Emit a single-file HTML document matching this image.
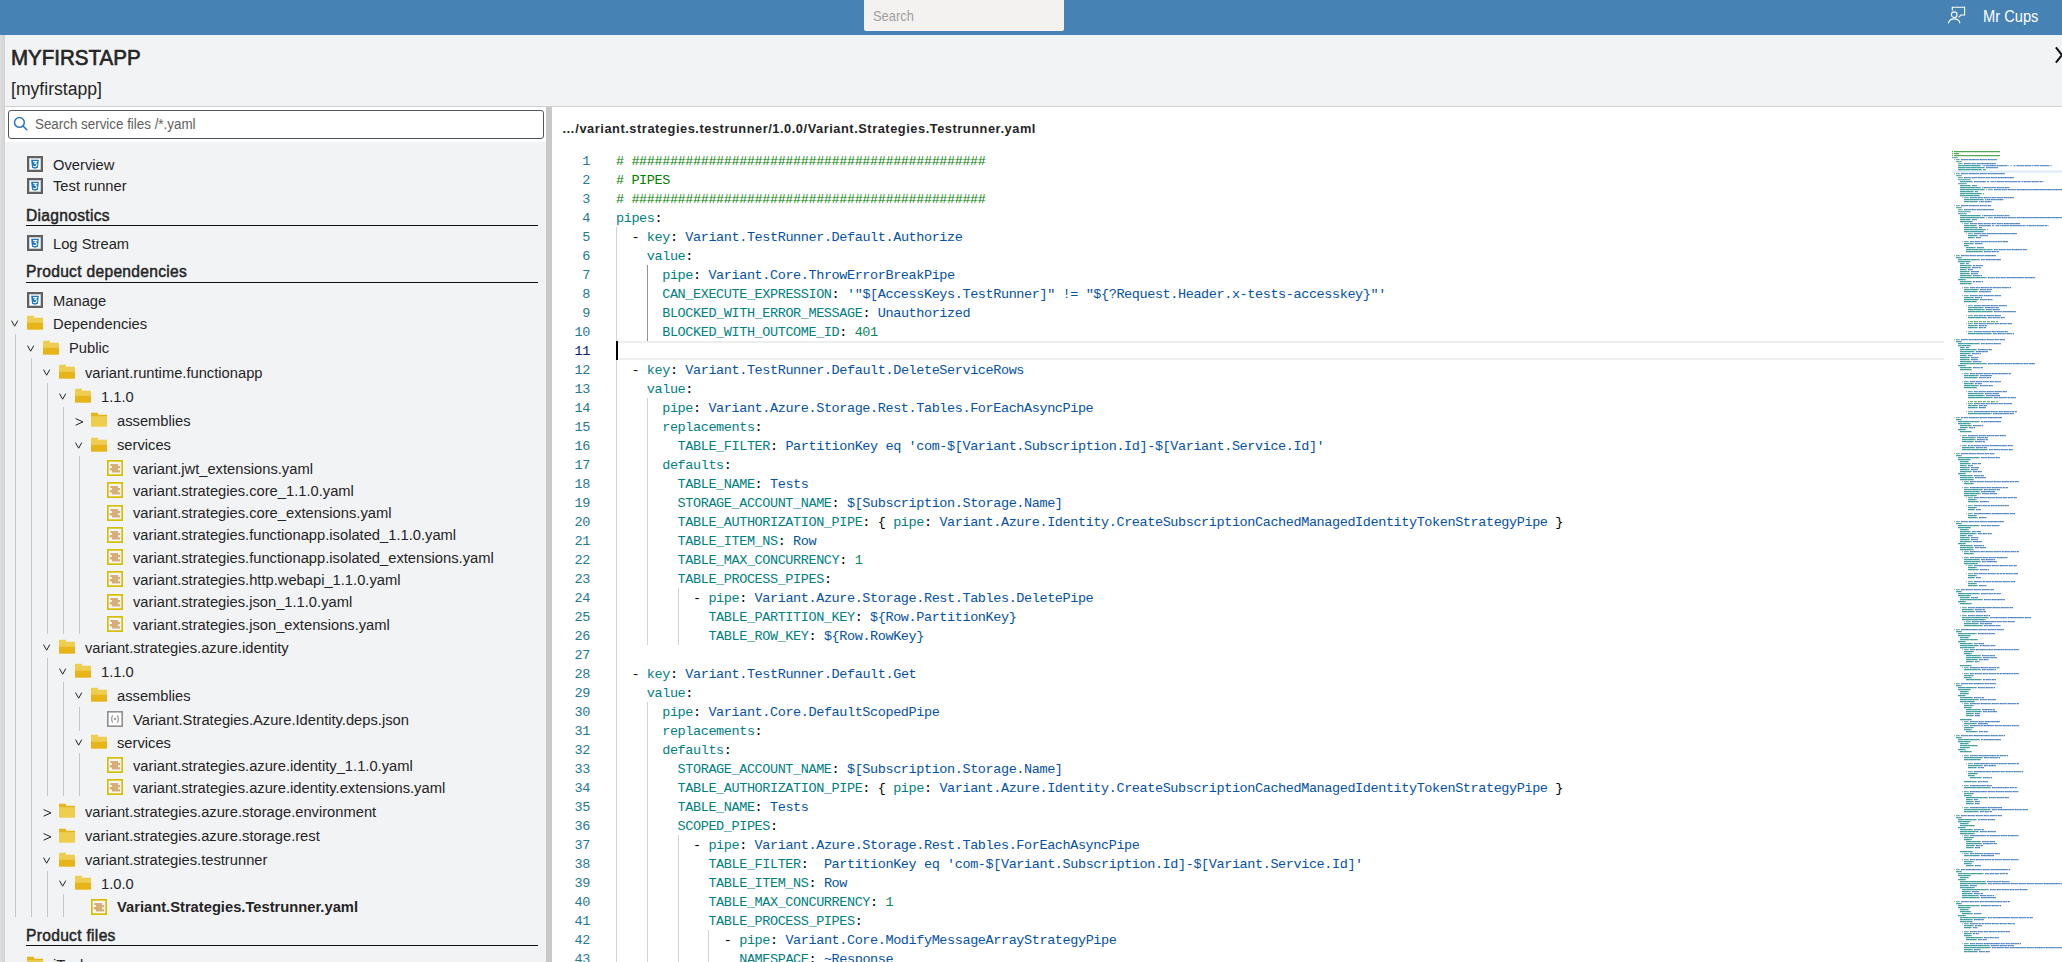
<!DOCTYPE html>
<html><head><meta charset="utf-8"><title>MYFIRSTAPP</title>
<style>
html,body{margin:0;padding:0;width:2062px;height:962px;overflow:hidden;background:#f2f3f5;font-family:"Liberation Sans",sans-serif;color:#242424;}
.abs{position:absolute;}
#top{position:absolute;left:0;top:0;width:2062px;height:35px;background:#4682b4;}
#tsearch{position:absolute;left:864px;top:0;width:200px;height:31px;background:#f3f2f1;border-radius:0 0 2px 2px;}
#tsearch span{position:absolute;left:9.4px;top:8.9px;font-size:14.1px;line-height:14.1px;color:#a19f9d;transform-origin:0 0;transform:scaleX(0.915);}
#user{position:absolute;left:1983px;top:8px;font-size:16.3px;line-height:16.3px;color:#fff;transform-origin:0 0;transform:scaleX(0.9);white-space:nowrap;}
#lstrip{position:absolute;left:0;top:35px;width:5px;height:927px;background:linear-gradient(to right,#dedede,#d2d2d2);}
#title{position:absolute;left:11px;top:48.1px;font-size:21.5px;line-height:21.5px;color:#252525;-webkit-text-stroke:0.65px #252525;transform-origin:0 0;transform:scaleX(0.955);white-space:nowrap;}
#sub{position:absolute;left:11px;top:81.1px;font-size:17.6px;line-height:17.6px;color:#242424;}
#hline{position:absolute;left:5px;top:105.5px;width:2057px;height:1.5px;background:#d2d2d2;}
#chev{position:absolute;left:2054px;top:46px;}
#srow{position:absolute;left:5px;top:107px;width:541px;height:35px;background:#fff;}
#sbox{position:absolute;left:8px;top:110px;width:534px;height:26.5px;border:1.4px solid #4f565e;border-radius:3px;background:#fff;}
#sbox span{position:absolute;left:26px;top:5.75px;font-size:14px;line-height:14px;color:#605e5c;transform-origin:0 0;transform:scaleX(0.955);white-space:nowrap;}
#splitter{position:absolute;left:546px;top:107px;width:6px;height:855px;background:#c8c8c8;}
#editor{position:absolute;left:552px;top:107px;width:1510px;height:855px;background:#fff;}
#crumb{position:absolute;left:562px;top:122.9px;font-size:12.8px;line-height:12.8px;letter-spacing:0.55px;font-weight:bold;color:#242424;white-space:nowrap;}
.cl{position:absolute;left:616px;height:19px;line-height:19px;font-family:"Liberation Mono",monospace;font-size:13.5px;letter-spacing:-0.403px;white-space:pre;color:#000;}
.ln{position:absolute;left:560px;width:30px;text-align:right;height:19px;line-height:19px;font-family:"Liberation Mono",monospace;font-size:13.5px;letter-spacing:-0.403px;color:#237893;}
.ln.cur{color:#0b216f;}
.c{color:#008000}.k{color:#008080}.p{color:#000}.s{color:#0451a5}.n{color:#098658}
.g{position:absolute;width:1px;}
#curline{position:absolute;left:616px;top:341px;width:1328px;height:15px;border-top:2px solid #eeeeee;border-bottom:2px solid #eeeeee;}
#cursor{position:absolute;left:616px;top:341px;width:2px;height:19px;background:#000;}
.icw{position:absolute;line-height:0;}
.ic{display:block;}
.tt{position:absolute;font-size:15.3px;line-height:15.3px;white-space:nowrap;color:#242424;transform-origin:0 0;transform:scaleX(0.962);}
.tt.b{font-weight:bold;}
.tg{position:absolute;width:1px;background:#c6c6c6;}
.sh{position:absolute;left:26px;font-size:15.6px;line-height:15.6px;letter-spacing:0.3px;color:#242424;-webkit-text-stroke:0.45px #242424;}
.ul{position:absolute;left:26px;width:512px;height:1.3px;background:#111;}
#minimap{position:absolute;left:1944px;top:107px;}
</style></head><body>
<div id="top">
  <div id="tsearch"><span>Search</span></div>
  <svg style="position:absolute;left:1946px;top:6px" width="20" height="18" viewBox="0 0 20 18">
    <path d="M6.3 4.6V1.3h12.3v7.7h-3.7l-2.3 2.4" fill="none" stroke="#fff" stroke-width="1.1"/>
    <circle cx="8.2" cy="8.7" r="2.8" fill="none" stroke="#fff" stroke-width="1.1"/>
    <path d="M2.4 17.3a5.9 5.4 0 0 1 11.6 0" fill="none" stroke="#fff" stroke-width="1.1"/>
  </svg>
  <div id="user">Mr Cups</div>
</div>
<div id="lstrip"></div>
<div id="title">MYFIRSTAPP</div>
<div id="sub">[myfirstapp]</div>
<svg id="chev" width="10" height="18" viewBox="0 0 10 18"><path d="M1.9 1.4L8 9L1.9 16.6" fill="none" stroke="#111" stroke-width="2"/></svg>
<div id="hline"></div>
<div id="srow"></div>
<div id="sbox"><svg style="position:absolute;left:3.5px;top:4.5px" width="16" height="16" viewBox="0 0 16 16"><circle cx="6.4" cy="6.4" r="4.9" fill="none" stroke="#2f75bb" stroke-width="1.5"/><path d="M10 10L14.3 14.3" stroke="#2f75bb" stroke-width="1.6"/></svg><span>Search service files /*.yaml</span></div>
<div class="sh" style="top:208.19px">Diagnostics</div><div class="ul" style="top:225.0px"></div><div class="sh" style="top:264.19px">Product dependencies</div><div class="ul" style="top:281.8px"></div><div class="sh" style="top:928.19px">Product files</div><div class="ul" style="top:944.8px"></div>
<div class="tg" style="left:15px;top:334px;height:583px"></div><div class="tg" style="left:31px;top:358px;height:559px"></div><div class="tg" style="left:47px;top:383px;height:251px"></div><div class="tg" style="left:63px;top:407px;height:227px"></div><div class="tg" style="left:79px;top:456px;height:178px"></div><div class="tg" style="left:47px;top:658px;height:138px"></div><div class="tg" style="left:63px;top:682px;height:114px"></div><div class="tg" style="left:79px;top:707px;height:24px"></div><div class="tg" style="left:79px;top:753px;height:43px"></div><div class="tg" style="left:47px;top:871px;height:46px"></div><div class="tg" style="left:63px;top:894px;height:23px"></div>
<div class="icw" style="left:27px;top:156.0px"><svg class="ic" width="16" height="16" viewBox="0 0 16 16"><rect x="1" y="1" width="14" height="14" fill="#fff" stroke="#606060" stroke-width="2"/><rect x="2.3" y="2.3" width="11.4" height="11.4" fill="none" stroke="#b0b0b0" stroke-width="0.6"/><path d="M4.1 3.7h7.8l-0.9 8.1L8 12.8l-3-1z" fill="#1b78c4"/><path d="M6.2 5.6h3.5l-1.7 1.8c1.3 0 1.9.7 1.9 1.6 0 .9-.8 1.6-1.9 1.6-.7 0-1.3-.3-1.8-.8" fill="none" stroke="#fff" stroke-width="1.05"/></svg></div>
<div class="tt" style="left:52.8px;top:156.60px">Overview</div>
<div class="icw" style="left:27px;top:177.8px"><svg class="ic" width="16" height="16" viewBox="0 0 16 16"><rect x="1" y="1" width="14" height="14" fill="#fff" stroke="#606060" stroke-width="2"/><rect x="2.3" y="2.3" width="11.4" height="11.4" fill="none" stroke="#b0b0b0" stroke-width="0.6"/><path d="M4.1 3.7h7.8l-0.9 8.1L8 12.8l-3-1z" fill="#1b78c4"/><path d="M6.2 5.6h3.5l-1.7 1.8c1.3 0 1.9.7 1.9 1.6 0 .9-.8 1.6-1.9 1.6-.7 0-1.3-.3-1.8-.8" fill="none" stroke="#fff" stroke-width="1.05"/></svg></div>
<div class="tt" style="left:52.8px;top:178.40px">Test runner</div>
<div class="icw" style="left:27px;top:235.2px"><svg class="ic" width="16" height="16" viewBox="0 0 16 16"><rect x="1" y="1" width="14" height="14" fill="#fff" stroke="#606060" stroke-width="2"/><rect x="2.3" y="2.3" width="11.4" height="11.4" fill="none" stroke="#b0b0b0" stroke-width="0.6"/><path d="M4.1 3.7h7.8l-0.9 8.1L8 12.8l-3-1z" fill="#1b78c4"/><path d="M6.2 5.6h3.5l-1.7 1.8c1.3 0 1.9.7 1.9 1.6 0 .9-.8 1.6-1.9 1.6-.7 0-1.3-.3-1.8-.8" fill="none" stroke="#fff" stroke-width="1.05"/></svg></div>
<div class="tt" style="left:52.8px;top:235.80px">Log Stream</div>
<div class="icw" style="left:27px;top:292.2px"><svg class="ic" width="16" height="16" viewBox="0 0 16 16"><rect x="1" y="1" width="14" height="14" fill="#fff" stroke="#606060" stroke-width="2"/><rect x="2.3" y="2.3" width="11.4" height="11.4" fill="none" stroke="#b0b0b0" stroke-width="0.6"/><path d="M4.1 3.7h7.8l-0.9 8.1L8 12.8l-3-1z" fill="#1b78c4"/><path d="M6.2 5.6h3.5l-1.7 1.8c1.3 0 1.9.7 1.9 1.6 0 .9-.8 1.6-1.9 1.6-.7 0-1.3-.3-1.8-.8" fill="none" stroke="#fff" stroke-width="1.05"/></svg></div>
<div class="tt" style="left:52.8px;top:292.80px">Manage</div>
<div class="icw" style="left:27px;top:315.3px"><svg class="ic" width="16" height="16" viewBox="0 0 16 16"><path d="M0 0.7h7v2h9v4.7H0z" fill="#eecd4f"/><rect x="0" y="7.4" width="16" height="7.3" fill="#e8b518"/></svg></div>
<div class="icw" style="left:11px;top:320.0px"><svg class="chev" width="8" height="7" viewBox="0 0 8 7"><path d="M0.5 0.6L3.65 6.2L6.8 0.6" fill="none" stroke="#222" stroke-width="1"/></svg></div>
<div class="tt" style="left:52.8px;top:315.90px">Dependencies</div>
<div class="icw" style="left:43px;top:339.8px"><svg class="ic" width="16" height="16" viewBox="0 0 16 16"><path d="M0 0.7h7v2h9v4.7H0z" fill="#eecd4f"/><rect x="0" y="7.4" width="16" height="7.3" fill="#e8b518"/></svg></div>
<div class="icw" style="left:27px;top:344.5px"><svg class="chev" width="8" height="7" viewBox="0 0 8 7"><path d="M0.5 0.6L3.65 6.2L6.8 0.6" fill="none" stroke="#222" stroke-width="1"/></svg></div>
<div class="tt" style="left:68.8px;top:340.40px">Public</div>
<div class="icw" style="left:59px;top:364.1px"><svg class="ic" width="16" height="16" viewBox="0 0 16 16"><path d="M0 0.7h7v2h9v4.7H0z" fill="#eecd4f"/><rect x="0" y="7.4" width="16" height="7.3" fill="#e8b518"/></svg></div>
<div class="icw" style="left:43px;top:368.8px"><svg class="chev" width="8" height="7" viewBox="0 0 8 7"><path d="M0.5 0.6L3.65 6.2L6.8 0.6" fill="none" stroke="#222" stroke-width="1"/></svg></div>
<div class="tt" style="left:84.8px;top:364.70px">variant.runtime.functionapp</div>
<div class="icw" style="left:75px;top:388.3px"><svg class="ic" width="16" height="16" viewBox="0 0 16 16"><path d="M0 0.7h7v2h9v4.7H0z" fill="#eecd4f"/><rect x="0" y="7.4" width="16" height="7.3" fill="#e8b518"/></svg></div>
<div class="icw" style="left:59px;top:393.0px"><svg class="chev" width="8" height="7" viewBox="0 0 8 7"><path d="M0.5 0.6L3.65 6.2L6.8 0.6" fill="none" stroke="#222" stroke-width="1"/></svg></div>
<div class="tt" style="left:100.8px;top:388.90px">1.1.0</div>
<div class="icw" style="left:91px;top:412.2px"><svg class="ic" width="16" height="16" viewBox="0 0 16 16"><path d="M0 0.7h7v2h9v2H0z" fill="#e8b518"/><rect x="0" y="4.7" width="16" height="10" fill="#eecd4f"/></svg></div>
<div class="icw" style="left:75px;top:417.8px"><svg class="chev" width="9" height="8" viewBox="0 0 9 8"><path d="M0.6 0.6L8 3.9L0.6 7.2" fill="none" stroke="#222" stroke-width="1"/></svg></div>
<div class="tt" style="left:116.8px;top:412.80px">assemblies</div>
<div class="icw" style="left:91px;top:436.8px"><svg class="ic" width="16" height="16" viewBox="0 0 16 16"><path d="M0 0.7h7v2h9v4.7H0z" fill="#eecd4f"/><rect x="0" y="7.4" width="16" height="7.3" fill="#e8b518"/></svg></div>
<div class="icw" style="left:75px;top:441.5px"><svg class="chev" width="8" height="7" viewBox="0 0 8 7"><path d="M0.5 0.6L3.65 6.2L6.8 0.6" fill="none" stroke="#222" stroke-width="1"/></svg></div>
<div class="tt" style="left:116.8px;top:437.40px">services</div>
<div class="icw" style="left:107px;top:460.2px"><svg class="ic" width="16" height="16" viewBox="0 0 16 16"><rect x="0.85" y="0.85" width="14.3" height="14.3" fill="#f4f5f9" stroke="#d4c000" stroke-width="1.7"/><path d="M3.3 3.9h7.7v2.1h1.1a1.15 1.15 0 0 1 0 2.3H11v2h2v2.1H5v-1.9H3.8a1.2 1.2 0 0 1 0-2.4H5V6H3.3z" fill="#d9ad78"/></svg></div>
<div class="tt" style="left:132.8px;top:460.80px">variant.jwt_extensions.yaml</div>
<div class="icw" style="left:107px;top:482.2px"><svg class="ic" width="16" height="16" viewBox="0 0 16 16"><rect x="0.85" y="0.85" width="14.3" height="14.3" fill="#f4f5f9" stroke="#d4c000" stroke-width="1.7"/><path d="M3.3 3.9h7.7v2.1h1.1a1.15 1.15 0 0 1 0 2.3H11v2h2v2.1H5v-1.9H3.8a1.2 1.2 0 0 1 0-2.4H5V6H3.3z" fill="#d9ad78"/></svg></div>
<div class="tt" style="left:132.8px;top:482.80px">variant.strategies.core_1.1.0.yaml</div>
<div class="icw" style="left:107px;top:504.5px"><svg class="ic" width="16" height="16" viewBox="0 0 16 16"><rect x="0.85" y="0.85" width="14.3" height="14.3" fill="#f4f5f9" stroke="#d4c000" stroke-width="1.7"/><path d="M3.3 3.9h7.7v2.1h1.1a1.15 1.15 0 0 1 0 2.3H11v2h2v2.1H5v-1.9H3.8a1.2 1.2 0 0 1 0-2.4H5V6H3.3z" fill="#d9ad78"/></svg></div>
<div class="tt" style="left:132.8px;top:505.10px">variant.strategies.core_extensions.yaml</div>
<div class="icw" style="left:107px;top:526.7px"><svg class="ic" width="16" height="16" viewBox="0 0 16 16"><rect x="0.85" y="0.85" width="14.3" height="14.3" fill="#f4f5f9" stroke="#d4c000" stroke-width="1.7"/><path d="M3.3 3.9h7.7v2.1h1.1a1.15 1.15 0 0 1 0 2.3H11v2h2v2.1H5v-1.9H3.8a1.2 1.2 0 0 1 0-2.4H5V6H3.3z" fill="#d9ad78"/></svg></div>
<div class="tt" style="left:132.8px;top:527.30px">variant.strategies.functionapp.isolated_1.1.0.yaml</div>
<div class="icw" style="left:107px;top:549.0px"><svg class="ic" width="16" height="16" viewBox="0 0 16 16"><rect x="0.85" y="0.85" width="14.3" height="14.3" fill="#f4f5f9" stroke="#d4c000" stroke-width="1.7"/><path d="M3.3 3.9h7.7v2.1h1.1a1.15 1.15 0 0 1 0 2.3H11v2h2v2.1H5v-1.9H3.8a1.2 1.2 0 0 1 0-2.4H5V6H3.3z" fill="#d9ad78"/></svg></div>
<div class="tt" style="left:132.8px;top:549.60px">variant.strategies.functionapp.isolated_extensions.yaml</div>
<div class="icw" style="left:107px;top:571.4px"><svg class="ic" width="16" height="16" viewBox="0 0 16 16"><rect x="0.85" y="0.85" width="14.3" height="14.3" fill="#f4f5f9" stroke="#d4c000" stroke-width="1.7"/><path d="M3.3 3.9h7.7v2.1h1.1a1.15 1.15 0 0 1 0 2.3H11v2h2v2.1H5v-1.9H3.8a1.2 1.2 0 0 1 0-2.4H5V6H3.3z" fill="#d9ad78"/></svg></div>
<div class="tt" style="left:132.8px;top:572.00px">variant.strategies.http.webapi_1.1.0.yaml</div>
<div class="icw" style="left:107px;top:593.7px"><svg class="ic" width="16" height="16" viewBox="0 0 16 16"><rect x="0.85" y="0.85" width="14.3" height="14.3" fill="#f4f5f9" stroke="#d4c000" stroke-width="1.7"/><path d="M3.3 3.9h7.7v2.1h1.1a1.15 1.15 0 0 1 0 2.3H11v2h2v2.1H5v-1.9H3.8a1.2 1.2 0 0 1 0-2.4H5V6H3.3z" fill="#d9ad78"/></svg></div>
<div class="tt" style="left:132.8px;top:594.30px">variant.strategies.json_1.1.0.yaml</div>
<div class="icw" style="left:107px;top:616.1px"><svg class="ic" width="16" height="16" viewBox="0 0 16 16"><rect x="0.85" y="0.85" width="14.3" height="14.3" fill="#f4f5f9" stroke="#d4c000" stroke-width="1.7"/><path d="M3.3 3.9h7.7v2.1h1.1a1.15 1.15 0 0 1 0 2.3H11v2h2v2.1H5v-1.9H3.8a1.2 1.2 0 0 1 0-2.4H5V6H3.3z" fill="#d9ad78"/></svg></div>
<div class="tt" style="left:132.8px;top:616.70px">variant.strategies.json_extensions.yaml</div>
<div class="icw" style="left:59px;top:639.0px"><svg class="ic" width="16" height="16" viewBox="0 0 16 16"><path d="M0 0.7h7v2h9v4.7H0z" fill="#eecd4f"/><rect x="0" y="7.4" width="16" height="7.3" fill="#e8b518"/></svg></div>
<div class="icw" style="left:43px;top:643.7px"><svg class="chev" width="8" height="7" viewBox="0 0 8 7"><path d="M0.5 0.6L3.65 6.2L6.8 0.6" fill="none" stroke="#222" stroke-width="1"/></svg></div>
<div class="tt" style="left:84.8px;top:639.60px">variant.strategies.azure.identity</div>
<div class="icw" style="left:75px;top:662.9px"><svg class="ic" width="16" height="16" viewBox="0 0 16 16"><path d="M0 0.7h7v2h9v4.7H0z" fill="#eecd4f"/><rect x="0" y="7.4" width="16" height="7.3" fill="#e8b518"/></svg></div>
<div class="icw" style="left:59px;top:667.6px"><svg class="chev" width="8" height="7" viewBox="0 0 8 7"><path d="M0.5 0.6L3.65 6.2L6.8 0.6" fill="none" stroke="#222" stroke-width="1"/></svg></div>
<div class="tt" style="left:100.8px;top:663.50px">1.1.0</div>
<div class="icw" style="left:91px;top:687.2px"><svg class="ic" width="16" height="16" viewBox="0 0 16 16"><path d="M0 0.7h7v2h9v4.7H0z" fill="#eecd4f"/><rect x="0" y="7.4" width="16" height="7.3" fill="#e8b518"/></svg></div>
<div class="icw" style="left:75px;top:691.9px"><svg class="chev" width="8" height="7" viewBox="0 0 8 7"><path d="M0.5 0.6L3.65 6.2L6.8 0.6" fill="none" stroke="#222" stroke-width="1"/></svg></div>
<div class="tt" style="left:116.8px;top:687.80px">assemblies</div>
<div class="icw" style="left:107px;top:711.1px"><svg class="ic" width="16" height="16" viewBox="0 0 16 16"><rect x="0.8" y="0.8" width="14.4" height="14.4" fill="#fff" stroke="#8f8f8f" stroke-width="1.6"/><path d="M5.6 4.3Q3.6 8 5.6 11.7M10.4 4.3Q12.4 8 10.4 11.7" fill="none" stroke="#a4a4a4" stroke-width="1.25"/><circle cx="8" cy="8" r="1.35" fill="#a4a4a4"/></svg></div>
<div class="tt" style="left:132.8px;top:711.70px">Variant.Strategies.Azure.Identity.deps.json</div>
<div class="icw" style="left:91px;top:734.0px"><svg class="ic" width="16" height="16" viewBox="0 0 16 16"><path d="M0 0.7h7v2h9v4.7H0z" fill="#eecd4f"/><rect x="0" y="7.4" width="16" height="7.3" fill="#e8b518"/></svg></div>
<div class="icw" style="left:75px;top:738.7px"><svg class="chev" width="8" height="7" viewBox="0 0 8 7"><path d="M0.5 0.6L3.65 6.2L6.8 0.6" fill="none" stroke="#222" stroke-width="1"/></svg></div>
<div class="tt" style="left:116.8px;top:734.60px">services</div>
<div class="icw" style="left:107px;top:757.2px"><svg class="ic" width="16" height="16" viewBox="0 0 16 16"><rect x="0.85" y="0.85" width="14.3" height="14.3" fill="#f4f5f9" stroke="#d4c000" stroke-width="1.7"/><path d="M3.3 3.9h7.7v2.1h1.1a1.15 1.15 0 0 1 0 2.3H11v2h2v2.1H5v-1.9H3.8a1.2 1.2 0 0 1 0-2.4H5V6H3.3z" fill="#d9ad78"/></svg></div>
<div class="tt" style="left:132.8px;top:757.80px">variant.strategies.azure.identity_1.1.0.yaml</div>
<div class="icw" style="left:107px;top:779.3px"><svg class="ic" width="16" height="16" viewBox="0 0 16 16"><rect x="0.85" y="0.85" width="14.3" height="14.3" fill="#f4f5f9" stroke="#d4c000" stroke-width="1.7"/><path d="M3.3 3.9h7.7v2.1h1.1a1.15 1.15 0 0 1 0 2.3H11v2h2v2.1H5v-1.9H3.8a1.2 1.2 0 0 1 0-2.4H5V6H3.3z" fill="#d9ad78"/></svg></div>
<div class="tt" style="left:132.8px;top:779.90px">variant.strategies.azure.identity.extensions.yaml</div>
<div class="icw" style="left:59px;top:803.2px"><svg class="ic" width="16" height="16" viewBox="0 0 16 16"><path d="M0 0.7h7v2h9v2H0z" fill="#e8b518"/><rect x="0" y="4.7" width="16" height="10" fill="#eecd4f"/></svg></div>
<div class="icw" style="left:43px;top:808.8px"><svg class="chev" width="9" height="8" viewBox="0 0 9 8"><path d="M0.6 0.6L8 3.9L0.6 7.2" fill="none" stroke="#222" stroke-width="1"/></svg></div>
<div class="tt" style="left:84.8px;top:803.80px">variant.strategies.azure.storage.environment</div>
<div class="icw" style="left:59px;top:827.6px"><svg class="ic" width="16" height="16" viewBox="0 0 16 16"><path d="M0 0.7h7v2h9v2H0z" fill="#e8b518"/><rect x="0" y="4.7" width="16" height="10" fill="#eecd4f"/></svg></div>
<div class="icw" style="left:43px;top:833.2px"><svg class="chev" width="9" height="8" viewBox="0 0 9 8"><path d="M0.6 0.6L8 3.9L0.6 7.2" fill="none" stroke="#222" stroke-width="1"/></svg></div>
<div class="tt" style="left:84.8px;top:828.20px">variant.strategies.azure.storage.rest</div>
<div class="icw" style="left:59px;top:851.8px"><svg class="ic" width="16" height="16" viewBox="0 0 16 16"><path d="M0 0.7h7v2h9v4.7H0z" fill="#eecd4f"/><rect x="0" y="7.4" width="16" height="7.3" fill="#e8b518"/></svg></div>
<div class="icw" style="left:43px;top:856.5px"><svg class="chev" width="8" height="7" viewBox="0 0 8 7"><path d="M0.5 0.6L3.65 6.2L6.8 0.6" fill="none" stroke="#222" stroke-width="1"/></svg></div>
<div class="tt" style="left:84.8px;top:852.40px">variant.strategies.testrunner</div>
<div class="icw" style="left:75px;top:874.9px"><svg class="ic" width="16" height="16" viewBox="0 0 16 16"><path d="M0 0.7h7v2h9v4.7H0z" fill="#eecd4f"/><rect x="0" y="7.4" width="16" height="7.3" fill="#e8b518"/></svg></div>
<div class="icw" style="left:59px;top:879.6px"><svg class="chev" width="8" height="7" viewBox="0 0 8 7"><path d="M0.5 0.6L3.65 6.2L6.8 0.6" fill="none" stroke="#222" stroke-width="1"/></svg></div>
<div class="tt" style="left:100.8px;top:875.50px">1.0.0</div>
<div class="icw" style="left:91px;top:899.2px"><svg class="ic" width="16" height="16" viewBox="0 0 16 16"><rect x="0.85" y="0.85" width="14.3" height="14.3" fill="#f4f5f9" stroke="#d4c000" stroke-width="1.7"/><path d="M3.3 3.9h7.7v2.1h1.1a1.15 1.15 0 0 1 0 2.3H11v2h2v2.1H5v-1.9H3.8a1.2 1.2 0 0 1 0-2.4H5V6H3.3z" fill="#d9ad78"/></svg></div>
<div class="tt b" style="left:116.8px;top:898.80px">Variant.Strategies.Testrunner.yaml</div>
<div class="icw" style="left:27px;top:956.0px"><svg class="ic" width="16" height="16" viewBox="0 0 16 16"><path d="M0 0.7h7v2h9v2H0z" fill="#e8b518"/><rect x="0" y="4.7" width="16" height="10" fill="#eecd4f"/></svg></div>
<div class="tt" style="left:52.8px;top:956.60px">iTools</div>
<div id="splitter"></div>
<div id="editor"></div>
<div id="crumb">…/variant.strategies.testrunner/1.0.0/Variant.Strategies.Testrunner.yaml</div>
<div id="curline"></div>
<div class="g" style="left:616px;top:227px;height:760px;background:#D3D3D3"></div><div class="g" style="left:647px;top:265px;height:76px;background:#939393"></div><div class="g" style="left:647px;top:398px;height:247px;background:#D3D3D3"></div><div class="g" style="left:647px;top:702px;height:285px;background:#D3D3D3"></div><div class="g" style="left:678px;top:588px;height:57px;background:#D3D3D3"></div><div class="g" style="left:678px;top:835px;height:152px;background:#D3D3D3"></div><div class="g" style="left:708px;top:930px;height:57px;background:#D3D3D3"></div>
<div class="cl" style="top:152px"><span class="c"># ##############################################</span></div>
<div class="ln" style="top:152px">1</div>
<div class="cl" style="top:171px"><span class="c"># PIPES</span></div>
<div class="ln" style="top:171px">2</div>
<div class="cl" style="top:190px"><span class="c"># ##############################################</span></div>
<div class="ln" style="top:190px">3</div>
<div class="cl" style="top:209px"><span class="k">pipes</span><span class="p">:</span></div>
<div class="ln" style="top:209px">4</div>
<div class="cl" style="top:228px">  <span class="p">- </span><span class="k">key</span><span class="p">:</span> <span class="s">Variant.TestRunner.Default.Authorize</span></div>
<div class="ln" style="top:228px">5</div>
<div class="cl" style="top:247px">    <span class="k">value</span><span class="p">:</span></div>
<div class="ln" style="top:247px">6</div>
<div class="cl" style="top:266px">      <span class="k">pipe</span><span class="p">:</span> <span class="s">Variant.Core.ThrowErrorBreakPipe</span></div>
<div class="ln" style="top:266px">7</div>
<div class="cl" style="top:285px">      <span class="k">CAN_EXECUTE_EXPRESSION</span><span class="p">:</span> <span class="s">&#x27;&quot;$[AccessKeys.TestRunner]&quot; != &quot;${?Request.Header.x-tests-accesskey}&quot;&#x27;</span></div>
<div class="ln" style="top:285px">8</div>
<div class="cl" style="top:304px">      <span class="k">BLOCKED_WITH_ERROR_MESSAGE</span><span class="p">:</span> <span class="s">Unauthorized</span></div>
<div class="ln" style="top:304px">9</div>
<div class="cl" style="top:323px">      <span class="k">BLOCKED_WITH_OUTCOME_ID</span><span class="p">:</span> <span class="n">401</span></div>
<div class="ln" style="top:323px">10</div>
<div class="cl" style="top:342px"></div>
<div class="ln cur" style="top:342px">11</div>
<div class="cl" style="top:361px">  <span class="p">- </span><span class="k">key</span><span class="p">:</span> <span class="s">Variant.TestRunner.Default.DeleteServiceRows</span></div>
<div class="ln" style="top:361px">12</div>
<div class="cl" style="top:380px">    <span class="k">value</span><span class="p">:</span></div>
<div class="ln" style="top:380px">13</div>
<div class="cl" style="top:399px">      <span class="k">pipe</span><span class="p">:</span> <span class="s">Variant.Azure.Storage.Rest.Tables.ForEachAsyncPipe</span></div>
<div class="ln" style="top:399px">14</div>
<div class="cl" style="top:418px">      <span class="k">replacements</span><span class="p">:</span></div>
<div class="ln" style="top:418px">15</div>
<div class="cl" style="top:437px">        <span class="k">TABLE_FILTER</span><span class="p">:</span> <span class="s">PartitionKey eq &#x27;com-$[Variant.Subscription.Id]-$[Variant.Service.Id]&#x27;</span></div>
<div class="ln" style="top:437px">16</div>
<div class="cl" style="top:456px">      <span class="k">defaults</span><span class="p">:</span></div>
<div class="ln" style="top:456px">17</div>
<div class="cl" style="top:475px">        <span class="k">TABLE_NAME</span><span class="p">:</span> <span class="s">Tests</span></div>
<div class="ln" style="top:475px">18</div>
<div class="cl" style="top:494px">        <span class="k">STORAGE_ACCOUNT_NAME</span><span class="p">:</span> <span class="s">$[Subscription.Storage.Name]</span></div>
<div class="ln" style="top:494px">19</div>
<div class="cl" style="top:513px">        <span class="k">TABLE_AUTHORIZATION_PIPE</span><span class="p">:</span> <span class="p">{ </span><span class="k">pipe</span><span class="p">: </span><span class="s">Variant.Azure.Identity.CreateSubscriptionCachedManagedIdentityTokenStrategyPipe</span><span class="p"> }</span></div>
<div class="ln" style="top:513px">20</div>
<div class="cl" style="top:532px">        <span class="k">TABLE_ITEM_NS</span><span class="p">:</span> <span class="s">Row</span></div>
<div class="ln" style="top:532px">21</div>
<div class="cl" style="top:551px">        <span class="k">TABLE_MAX_CONCURRENCY</span><span class="p">:</span> <span class="n">1</span></div>
<div class="ln" style="top:551px">22</div>
<div class="cl" style="top:570px">        <span class="k">TABLE_PROCESS_PIPES</span><span class="p">:</span></div>
<div class="ln" style="top:570px">23</div>
<div class="cl" style="top:589px">          <span class="p">- </span><span class="k">pipe</span><span class="p">:</span> <span class="s">Variant.Azure.Storage.Rest.Tables.DeletePipe</span></div>
<div class="ln" style="top:589px">24</div>
<div class="cl" style="top:608px">            <span class="k">TABLE_PARTITION_KEY</span><span class="p">:</span> <span class="s">${Row.PartitionKey}</span></div>
<div class="ln" style="top:608px">25</div>
<div class="cl" style="top:627px">            <span class="k">TABLE_ROW_KEY</span><span class="p">:</span> <span class="s">${Row.RowKey}</span></div>
<div class="ln" style="top:627px">26</div>
<div class="cl" style="top:646px"></div>
<div class="ln" style="top:646px">27</div>
<div class="cl" style="top:665px">  <span class="p">- </span><span class="k">key</span><span class="p">:</span> <span class="s">Variant.TestRunner.Default.Get</span></div>
<div class="ln" style="top:665px">28</div>
<div class="cl" style="top:684px">    <span class="k">value</span><span class="p">:</span></div>
<div class="ln" style="top:684px">29</div>
<div class="cl" style="top:703px">      <span class="k">pipe</span><span class="p">:</span> <span class="s">Variant.Core.DefaultScopedPipe</span></div>
<div class="ln" style="top:703px">30</div>
<div class="cl" style="top:722px">      <span class="k">replacements</span><span class="p">:</span></div>
<div class="ln" style="top:722px">31</div>
<div class="cl" style="top:741px">      <span class="k">defaults</span><span class="p">:</span></div>
<div class="ln" style="top:741px">32</div>
<div class="cl" style="top:760px">        <span class="k">STORAGE_ACCOUNT_NAME</span><span class="p">:</span> <span class="s">$[Subscription.Storage.Name]</span></div>
<div class="ln" style="top:760px">33</div>
<div class="cl" style="top:779px">        <span class="k">TABLE_AUTHORIZATION_PIPE</span><span class="p">:</span> <span class="p">{ </span><span class="k">pipe</span><span class="p">: </span><span class="s">Variant.Azure.Identity.CreateSubscriptionCachedManagedIdentityTokenStrategyPipe</span><span class="p"> }</span></div>
<div class="ln" style="top:779px">34</div>
<div class="cl" style="top:798px">        <span class="k">TABLE_NAME</span><span class="p">:</span> <span class="s">Tests</span></div>
<div class="ln" style="top:798px">35</div>
<div class="cl" style="top:817px">        <span class="k">SCOPED_PIPES</span><span class="p">:</span></div>
<div class="ln" style="top:817px">36</div>
<div class="cl" style="top:836px">          <span class="p">- </span><span class="k">pipe</span><span class="p">:</span> <span class="s">Variant.Azure.Storage.Rest.Tables.ForEachAsyncPipe</span></div>
<div class="ln" style="top:836px">37</div>
<div class="cl" style="top:855px">            <span class="k">TABLE_FILTER</span><span class="p">:</span>  <span class="s">PartitionKey eq &#x27;com-$[Variant.Subscription.Id]-$[Variant.Service.Id]&#x27;</span></div>
<div class="ln" style="top:855px">38</div>
<div class="cl" style="top:874px">            <span class="k">TABLE_ITEM_NS</span><span class="p">:</span> <span class="s">Row</span></div>
<div class="ln" style="top:874px">39</div>
<div class="cl" style="top:893px">            <span class="k">TABLE_MAX_CONCURRENCY</span><span class="p">:</span> <span class="n">1</span></div>
<div class="ln" style="top:893px">40</div>
<div class="cl" style="top:912px">            <span class="k">TABLE_PROCESS_PIPES</span><span class="p">:</span></div>
<div class="ln" style="top:912px">41</div>
<div class="cl" style="top:931px">              <span class="p">- </span><span class="k">pipe</span><span class="p">:</span> <span class="s">Variant.Core.ModifyMessageArrayStrategyPipe</span></div>
<div class="ln" style="top:931px">42</div>
<div class="cl" style="top:950px">                <span class="k">NAMESPACE</span><span class="p">:</span> <span class="s">~Response</span></div>
<div class="ln" style="top:950px">43</div>
<div id="cursor"></div>
<svg style="position:absolute;left:0;top:0" width="2062" height="962"><rect x="1952" y="170.6" width="110" height="2" fill="#dcebfb"/><path fill="#008000" fill-opacity="0.68" d="M1952 150.9h1v1.3h-1zM1954 150.9h46v1.3h-46zM1952 152.9h1v1.3h-1zM1954 152.9h5v1.3h-5zM1952 154.9h1v1.3h-1zM1954 154.9h46v1.3h-46zM1968 321.0h1v1.3h-1zM1974 321.0h1v1.3h-1zM1983 321.0h1v1.3h-1zM1991 321.0h1v1.3h-1zM1968 401.0h1v1.3h-1zM1978 401.0h1v1.3h-1zM1983 401.0h1v1.3h-1zM1991 401.0h1v1.3h-1z"/><path fill="#008080" fill-opacity="0.61" d="M1952 156.9h5v1.3h-5zM1956 158.9h3v1.3h-3zM1956 160.9h5v1.3h-5zM1958 162.9h4v1.3h-4zM1961 164.9h1v1.3h-1zM1969 164.9h1v1.3h-1zM1965 166.9h1v1.3h-1zM1970 166.9h1v1.3h-1zM1976 166.9h1v1.3h-1zM1965 168.9h1v1.3h-1zM1970 168.9h1v1.3h-1zM1978 168.9h1v1.3h-1zM1956 172.9h3v1.3h-3zM1956 174.9h5v1.3h-5zM1958 176.9h4v1.3h-4zM1958 178.9h12v1.3h-12zM1965 180.9h1v1.3h-1zM1958 182.9h8v1.3h-8zM1965 184.9h1v1.3h-1zM1967 186.9h1v1.3h-1zM1975 186.9h1v1.3h-1zM1965 188.9h1v1.3h-1zM1979 188.9h1v1.3h-1zM1988 188.9h4v1.3h-4zM1965 190.9h1v1.3h-1zM1970 190.9h1v1.3h-1zM1965 192.9h1v1.3h-1zM1969 192.9h1v1.3h-1zM1965 194.9h1v1.3h-1zM1973 194.9h1v1.3h-1zM1964 196.9h4v1.3h-4zM1969 198.9h1v1.3h-1zM1979 198.9h1v1.3h-1zM1969 200.9h1v1.3h-1zM1973 200.9h1v1.3h-1zM1956 204.9h3v1.3h-3zM1956 206.9h5v1.3h-5zM1958 208.9h4v1.3h-4zM1958 210.9h12v1.3h-12zM1958 212.9h8v1.3h-8zM1967 214.9h1v1.3h-1zM1975 214.9h1v1.3h-1zM1965 216.9h1v1.3h-1zM1979 216.9h1v1.3h-1zM1988 216.9h4v1.3h-4zM1965 218.9h1v1.3h-1zM1966 220.9h1v1.3h-1zM1964 222.9h4v1.3h-4zM1969 224.9h1v1.3h-1zM1969 226.9h1v1.3h-1zM1974 226.9h1v1.3h-1zM1969 228.9h1v1.3h-1zM1973 228.9h1v1.3h-1zM1969 230.9h1v1.3h-1zM1977 230.9h1v1.3h-1zM1968 232.9h4v1.3h-4zM1973 236.9h1v1.3h-1zM1964 240.9h4v1.3h-4zM1969 242.9h1v1.3h-1zM1968 246.9h1v1.3h-1zM1973 246.9h1v1.3h-1zM1971 248.9h1v1.3h-1zM1978 248.9h1v1.3h-1zM1983 248.9h1v1.3h-1zM1986 248.9h1v1.3h-1zM1990 248.9h1v1.3h-1zM1973 250.9h1v1.3h-1zM1978 250.9h1v1.3h-1zM1956 254.9h3v1.3h-3zM1962 259.0h1v1.3h-1zM1970 259.0h1v1.3h-1zM1976 259.0h1v1.3h-1zM1965 261.0h1v1.3h-1zM1969 261.0h1v1.3h-1zM1967 265.0h1v1.3h-1zM1967 267.0h1v1.3h-1zM1964 269.0h1v1.3h-1zM1967 271.0h1v1.3h-1zM1965 273.0h1v1.3h-1zM1966 275.0h1v1.3h-1zM1964 277.0h1v1.3h-1zM1974 277.0h1v1.3h-1zM1980 277.0h1v1.3h-1zM1985 277.0h1v1.3h-1zM1963 279.0h1v1.3h-1zM1966 281.0h1v1.3h-1zM1967 283.0h1v1.3h-1zM1964 287.0h4v1.3h-4zM1969 289.0h1v1.3h-1zM1977 289.0h1v1.3h-1zM1971 291.0h1v1.3h-1zM1964 295.0h4v1.3h-4zM1970 297.0h1v1.3h-1zM1971 299.0h1v1.3h-1zM1971 301.0h1v1.3h-1zM1968 305.0h4v1.3h-4zM1972 307.0h1v1.3h-1zM1977 307.0h1v1.3h-1zM1982 307.0h1v1.3h-1zM1973 309.0h1v1.3h-1zM1981 309.0h1v1.3h-1zM1975 311.0h1v1.3h-1zM1981 311.0h1v1.3h-1zM1986 311.0h1v1.3h-1zM1968 315.0h4v1.3h-4zM1974 317.0h1v1.3h-1zM1981 317.0h1v1.3h-1zM1968 323.0h4v1.3h-4zM1974 325.0h1v1.3h-1zM1974 327.0h1v1.3h-1zM1968 331.0h4v1.3h-4zM1975 333.0h1v1.3h-1zM1983 333.0h1v1.3h-1zM1956 339.0h3v1.3h-3zM1963 343.0h1v1.3h-1zM1966 343.0h1v1.3h-1zM1974 343.0h1v1.3h-1zM1961 345.0h1v1.3h-1zM1966 345.0h1v1.3h-1zM1964 349.0h1v1.3h-1zM1970 349.0h1v1.3h-1zM1963 351.0h1v1.3h-1zM1966 351.0h1v1.3h-1zM1973 351.0h1v1.3h-1zM1969 353.0h1v1.3h-1zM1962 355.0h1v1.3h-1zM1965 357.0h1v1.3h-1zM1967 359.0h1v1.3h-1zM1965 361.0h1v1.3h-1zM1969 363.0h1v1.3h-1zM1975 363.0h1v1.3h-1zM1981 363.0h1v1.3h-1zM1963 365.0h1v1.3h-1zM1967 367.0h1v1.3h-1zM1963 369.0h1v1.3h-1zM1969 369.0h1v1.3h-1zM1964 373.0h4v1.3h-4zM1968 375.0h1v1.3h-1zM1975 375.0h1v1.3h-1zM1968 377.0h1v1.3h-1zM1964 381.0h4v1.3h-4zM1968 383.0h1v1.3h-1zM1970 385.0h1v1.3h-1zM1977 385.0h1v1.3h-1zM1971 387.0h1v1.3h-1zM1968 391.0h4v1.3h-4zM1974 393.0h1v1.3h-1zM1977 393.0h1v1.3h-1zM1980 393.0h1v1.3h-1zM1975 395.0h1v1.3h-1zM1983 395.0h1v1.3h-1zM1975 397.0h1v1.3h-1zM1983 397.0h1v1.3h-1zM1990 397.0h1v1.3h-1zM1968 403.0h4v1.3h-4zM1971 405.0h1v1.3h-1zM1975 407.0h1v1.3h-1zM1968 411.0h4v1.3h-4zM1977 413.0h1v1.3h-1zM1982 413.0h1v1.3h-1zM1990 413.0h1v1.3h-1zM1956 417.0h3v1.3h-3zM1962 421.0h1v1.3h-1zM1969 421.0h1v1.3h-1zM1974 421.0h1v1.3h-1zM1962 423.0h1v1.3h-1zM1966 423.0h1v1.3h-1zM1969 423.0h1v1.3h-1zM1964 425.0h1v1.3h-1zM1967 425.0h1v1.3h-1zM1962 429.0h1v1.3h-1zM1964 431.0h1v1.3h-1zM1962 435.0h4v1.3h-4zM1965 437.0h1v1.3h-1zM1968 437.0h1v1.3h-1zM1973 437.0h1v1.3h-1zM1967 439.0h1v1.3h-1zM1974 439.0h1v1.3h-1zM1966 441.0h1v1.3h-1zM1972 441.0h1v1.3h-1zM1962 445.0h4v1.3h-4zM1969 447.0h1v1.3h-1zM1966 449.0h1v1.3h-1zM1971 449.0h1v1.3h-1zM1979 449.0h1v1.3h-1zM1956 453.0h3v1.3h-3zM1960 455.0h1v1.3h-1zM1963 457.0h1v1.3h-1zM1973 457.0h1v1.3h-1zM1965 459.0h1v1.3h-1zM1963 461.0h1v1.3h-1zM1969 463.0h1v1.3h-1zM1964 465.0h1v1.3h-1zM1967 467.0h1v1.3h-1zM1967 469.0h1v1.3h-1zM1966 471.0h1v1.3h-1zM1962 473.0h1v1.3h-1zM1967 475.0h1v1.3h-1zM1967 477.0h1v1.3h-1zM1971 477.0h1v1.3h-1zM1967 479.0h1v1.3h-1zM1964 481.0h4v1.3h-4zM1969 483.0h1v1.3h-1zM1964 487.0h4v1.3h-4zM1967 489.0h1v1.3h-1zM1971 489.0h1v1.3h-1zM1978 489.0h1v1.3h-1zM1969 491.0h1v1.3h-1zM1972 491.0h1v1.3h-1zM1975 491.0h1v1.3h-1zM1969 493.0h1v1.3h-1zM1975 493.0h1v1.3h-1zM1979 493.0h1v1.3h-1zM1969 495.0h1v1.3h-1zM1974 495.0h1v1.3h-1zM1968 497.0h4v1.3h-4zM1975 499.0h1v1.3h-1zM1975 501.0h1v1.3h-1zM1968 505.0h4v1.3h-4zM1975 507.0h1v1.3h-1zM1968 513.0h4v1.3h-4zM1973 515.0h1v1.3h-1zM1970 517.0h1v1.3h-1zM1976 517.0h1v1.3h-1zM1956 521.0h3v1.3h-3zM1958 523.0h1v1.3h-1zM1967 525.0h1v1.3h-1zM1973 525.0h1v1.3h-1zM1978 525.0h1v1.3h-1zM1964 527.0h1v1.3h-1zM1967 529.0h1v1.3h-1zM1963 531.0h1v1.3h-1zM1966 531.0h1v1.3h-1zM1969 533.0h1v1.3h-1zM1975 533.0h1v1.3h-1zM1965 535.0h1v1.3h-1zM1965 537.0h1v1.3h-1zM1967 539.0h1v1.3h-1zM1963 541.0h1v1.3h-1zM1970 541.0h1v1.3h-1zM1962 543.0h1v1.3h-1zM1965 545.0h1v1.3h-1zM1970 545.0h1v1.3h-1zM1966 547.0h1v1.3h-1zM1963 549.0h1v1.3h-1zM1971 549.0h1v1.3h-1zM1964 551.0h4v1.3h-4zM1969 553.0h1v1.3h-1zM1964 557.0h4v1.3h-4zM1966 559.0h1v1.3h-1zM1972 559.0h1v1.3h-1zM1976 559.0h1v1.3h-1zM1971 561.0h1v1.3h-1zM1975 561.0h1v1.3h-1zM1968 563.0h1v1.3h-1zM1975 563.0h1v1.3h-1zM1968 565.0h4v1.3h-4zM1975 567.0h1v1.3h-1zM1975 569.0h1v1.3h-1zM1968 573.0h4v1.3h-4zM1975 575.0h1v1.3h-1zM1968 581.0h4v1.3h-4zM1970 583.0h1v1.3h-1zM1975 583.0h1v1.3h-1zM1972 585.0h1v1.3h-1zM1956 589.0h3v1.3h-3zM1965 593.0h1v1.3h-1zM1972 593.0h1v1.3h-1zM1978 593.0h1v1.3h-1zM1965 595.0h1v1.3h-1zM1964 597.0h1v1.3h-1zM1966 599.0h1v1.3h-1zM1972 599.0h1v1.3h-1zM1977 599.0h1v1.3h-1zM1965 603.0h1v1.3h-1zM1962 607.0h4v1.3h-4zM1967 609.0h1v1.3h-1zM1972 609.0h1v1.3h-1zM1967 611.0h1v1.3h-1zM1962 615.0h4v1.3h-4zM1965 617.0h1v1.3h-1zM1970 617.0h1v1.3h-1zM1973 617.0h1v1.3h-1zM1981 617.0h1v1.3h-1zM1971 619.0h1v1.3h-1zM1978 619.0h1v1.3h-1zM1984 619.0h1v1.3h-1zM1966 621.0h4v1.3h-4zM1971 623.0h1v1.3h-1zM1971 625.0h1v1.3h-1zM1977 625.0h1v1.3h-1zM1956 629.0h3v1.3h-3zM1963 633.0h1v1.3h-1zM1967 633.0h1v1.3h-1zM1975 633.0h1v1.3h-1zM1965 635.0h1v1.3h-1zM1963 637.0h1v1.3h-1zM1964 639.0h1v1.3h-1zM1969 639.0h1v1.3h-1zM1973 639.0h1v1.3h-1zM1962 641.0h1v1.3h-1zM1967 643.0h1v1.3h-1zM1967 645.0h1v1.3h-1zM1973 645.0h1v1.3h-1zM1962 647.0h1v1.3h-1zM1967 647.0h1v1.3h-1zM1972 647.0h1v1.3h-1zM1964 649.0h4v1.3h-4zM1970 653.0h1v1.3h-1zM1971 655.0h1v1.3h-1zM1977 655.0h1v1.3h-1zM1971 657.0h1v1.3h-1zM1979 657.0h1v1.3h-1zM1971 659.0h1v1.3h-1zM1972 661.0h1v1.3h-1zM1964 665.0h1v1.3h-1zM1964 667.0h4v1.3h-4zM1971 669.0h1v1.3h-1zM1977 669.0h1v1.3h-1zM1964 673.0h4v1.3h-4zM1966 675.0h1v1.3h-1zM1971 675.0h1v1.3h-1zM1969 679.0h1v1.3h-1zM1974 679.0h1v1.3h-1zM1980 679.0h1v1.3h-1zM1956 683.0h3v1.3h-3zM1960 685.0h1v1.3h-1zM1965 687.0h1v1.3h-1zM1973 687.0h1v1.3h-1zM1962 689.0h1v1.3h-1zM1967 691.0h1v1.3h-1zM1962 693.0h1v1.3h-1zM1962 697.0h1v1.3h-1zM1967 699.0h1v1.3h-1zM1975 699.0h1v1.3h-1zM1963 701.0h1v1.3h-1zM1966 701.0h1v1.3h-1zM1964 703.0h4v1.3h-4zM1969 705.0h1v1.3h-1zM1972 705.0h1v1.3h-1zM1967 707.0h1v1.3h-1zM1972 709.0h1v1.3h-1zM1977 709.0h1v1.3h-1zM1971 711.0h1v1.3h-1zM1974 711.0h1v1.3h-1zM1971 713.0h1v1.3h-1zM1969 715.0h1v1.3h-1zM1965 719.0h1v1.3h-1zM1964 721.0h4v1.3h-4zM1971 723.0h1v1.3h-1zM1974 723.0h1v1.3h-1zM1964 725.0h4v1.3h-4zM1970 727.0h1v1.3h-1zM1970 729.0h1v1.3h-1zM1968 731.0h1v1.3h-1zM1976 731.0h1v1.3h-1zM1956 735.0h3v1.3h-3zM1963 739.0h1v1.3h-1zM1969 739.0h1v1.3h-1zM1974 739.0h1v1.3h-1zM1963 741.0h1v1.3h-1zM1968 741.0h1v1.3h-1zM1964 743.0h1v1.3h-1zM1962 745.0h1v1.3h-1zM1967 745.0h1v1.3h-1zM1971 745.0h1v1.3h-1zM1965 747.0h1v1.3h-1zM1963 749.0h1v1.3h-1zM1963 751.0h1v1.3h-1zM1969 751.0h1v1.3h-1zM1964 755.0h4v1.3h-4zM1969 757.0h1v1.3h-1zM1974 757.0h1v1.3h-1zM1968 759.0h1v1.3h-1zM1976 759.0h1v1.3h-1zM1968 763.0h4v1.3h-4zM1972 765.0h1v1.3h-1zM1978 765.0h1v1.3h-1zM1973 767.0h1v1.3h-1zM1968 771.0h4v1.3h-4zM1971 775.0h1v1.3h-1zM1976 777.0h1v1.3h-1zM1971 781.0h1v1.3h-1zM1964 785.0h4v1.3h-4zM1970 787.0h1v1.3h-1zM1976 787.0h1v1.3h-1zM1982 787.0h1v1.3h-1zM1964 791.0h4v1.3h-4zM1966 793.0h1v1.3h-1zM1971 793.0h1v1.3h-1zM1969 795.0h1v1.3h-1zM1975 797.0h1v1.3h-1zM1982 797.0h1v1.3h-1zM1970 799.0h1v1.3h-1zM1971 801.0h1v1.3h-1zM1971 803.0h1v1.3h-1zM1964 807.0h4v1.3h-4zM1971 809.0h1v1.3h-1zM1977 809.0h1v1.3h-1zM1987 809.0h1v1.3h-1zM1966 811.0h1v1.3h-1zM1973 811.0h1v1.3h-1zM1956 815.0h3v1.3h-3zM1958 817.0h1v1.3h-1zM1964 819.0h1v1.3h-1zM1972 819.0h1v1.3h-1zM1962 821.0h1v1.3h-1zM1969 821.0h1v1.3h-1zM1966 823.0h1v1.3h-1zM1962 825.0h1v1.3h-1zM1968 825.0h1v1.3h-1zM1963 829.0h1v1.3h-1zM1967 831.0h1v1.3h-1zM1975 831.0h1v1.3h-1zM1967 833.0h1v1.3h-1zM1973 833.0h1v1.3h-1zM1964 835.0h4v1.3h-4zM1968 837.0h1v1.3h-1zM1970 839.0h1v1.3h-1zM1971 841.0h1v1.3h-1zM1976 841.0h1v1.3h-1zM1973 843.0h1v1.3h-1zM1969 845.0h1v1.3h-1zM1971 847.0h1v1.3h-1zM1967 851.0h1v1.3h-1zM1964 853.0h4v1.3h-4zM1969 855.0h1v1.3h-1zM1972 855.0h1v1.3h-1zM1964 859.0h4v1.3h-4zM1966 861.0h1v1.3h-1zM1972 861.0h1v1.3h-1zM1969 863.0h1v1.3h-1zM1971 865.0h1v1.3h-1zM1956 869.0h3v1.3h-3zM1959 871.0h1v1.3h-1zM1962 873.0h1v1.3h-1zM1969 873.0h1v1.3h-1zM1977 873.0h1v1.3h-1zM1982 873.0h1v1.3h-1zM1962 875.0h1v1.3h-1zM1966 877.0h1v1.3h-1zM1964 881.0h1v1.3h-1zM1968 881.0h1v1.3h-1zM1976 881.0h1v1.3h-1zM1981 881.0h1v1.3h-1zM1967 883.0h1v1.3h-1zM1971 883.0h1v1.3h-1zM1979 883.0h1v1.3h-1zM1962 885.0h1v1.3h-1zM1964 887.0h1v1.3h-1zM1971 887.0h1v1.3h-1zM1966 889.0h1v1.3h-1zM1973 889.0h1v1.3h-1zM1980 889.0h1v1.3h-1zM1986 889.0h1v1.3h-1zM1968 891.0h1v1.3h-1zM1967 893.0h1v1.3h-1zM1967 895.0h1v1.3h-1zM1975 895.0h1v1.3h-1zM1968 897.0h1v1.3h-1zM1976 897.0h1v1.3h-1zM1956 901.0h3v1.3h-3zM1960 903.0h1v1.3h-1zM1964 905.0h1v1.3h-1zM1970 905.0h1v1.3h-1zM1975 905.0h1v1.3h-1zM1965 907.0h1v1.3h-1zM1966 909.0h1v1.3h-1zM1965 911.0h1v1.3h-1zM1969 913.0h1v1.3h-1zM1962 915.0h1v1.3h-1zM1962 917.0h1v1.3h-1zM1968 917.0h1v1.3h-1zM1971 917.0h1v1.3h-1zM1977 917.0h1v1.3h-1zM1985 917.0h1v1.3h-1zM1963 919.0h1v1.3h-1zM1970 919.0h1v1.3h-1zM1966 921.0h1v1.3h-1zM1964 923.0h4v1.3h-4zM1966 925.0h1v1.3h-1zM1964 931.0h4v1.3h-4zM1968 933.0h1v1.3h-1zM1969 935.0h1v1.3h-1zM1970 937.0h1v1.3h-1zM1975 937.0h1v1.3h-1zM1981 937.0h1v1.3h-1zM1969 939.0h1v1.3h-1zM1964 943.0h4v1.3h-4zM1967 945.0h1v1.3h-1zM1977 945.0h1v1.3h-1zM1983 945.0h1v1.3h-1zM1986 945.0h1v1.3h-1zM1969 947.0h1v1.3h-1zM1976 947.0h1v1.3h-1zM1984 947.0h1v1.3h-1zM1966 949.0h1v1.3h-1zM1971 949.0h1v1.3h-1zM1967 951.0h1v1.3h-1zM1973 951.0h1v1.3h-1z"/><path fill="#000000" fill-opacity="0.30" d="M1957 156.9h1v1.3h-1zM1954 158.9h1v1.3h-1zM1959 158.9h1v1.3h-1zM1961 160.9h1v1.3h-1zM1962 162.9h1v1.3h-1zM1980 164.9h1v1.3h-1zM1984 166.9h1v1.3h-1zM1981 168.9h1v1.3h-1zM1954 172.9h1v1.3h-1zM1959 172.9h1v1.3h-1zM1961 174.9h1v1.3h-1zM1962 176.9h1v1.3h-1zM1970 178.9h1v1.3h-1zM1972 180.9h1v1.3h-1zM1966 182.9h1v1.3h-1zM1970 184.9h1v1.3h-1zM1980 186.9h1v1.3h-1zM1984 188.9h1v1.3h-1zM1986 188.9h1v1.3h-1zM1992 188.9h1v1.3h-1zM2074 188.9h1v1.3h-1zM1973 190.9h1v1.3h-1zM1981 192.9h1v1.3h-1zM1979 194.9h1v1.3h-1zM1962 196.9h1v1.3h-1zM1968 196.9h1v1.3h-1zM1983 198.9h1v1.3h-1zM1977 200.9h1v1.3h-1zM1954 204.9h1v1.3h-1zM1959 204.9h1v1.3h-1zM1961 206.9h1v1.3h-1zM1962 208.9h1v1.3h-1zM1970 210.9h1v1.3h-1zM1966 212.9h1v1.3h-1zM1980 214.9h1v1.3h-1zM1984 216.9h1v1.3h-1zM1986 216.9h1v1.3h-1zM1992 216.9h1v1.3h-1zM2074 216.9h1v1.3h-1zM1970 218.9h1v1.3h-1zM1972 220.9h1v1.3h-1zM1962 222.9h1v1.3h-1zM1968 222.9h1v1.3h-1zM1976 224.9h1v1.3h-1zM1977 226.9h1v1.3h-1zM1985 228.9h1v1.3h-1zM1983 230.9h1v1.3h-1zM1966 232.9h1v1.3h-1zM1972 232.9h1v1.3h-1zM1977 234.9h1v1.3h-1zM1974 236.9h1v1.3h-1zM1962 240.9h1v1.3h-1zM1968 240.9h1v1.3h-1zM1973 242.9h1v1.3h-1zM1968 244.9h1v1.3h-1zM1975 246.9h1v1.3h-1zM1992 248.9h1v1.3h-1zM1982 250.9h1v1.3h-1zM1954 254.9h1v1.3h-1zM1959 254.9h1v1.3h-1zM1961 257.0h1v1.3h-1zM1979 259.0h1v1.3h-1zM1970 261.0h1v1.3h-1zM1964 263.0h1v1.3h-1zM1971 265.0h1v1.3h-1zM1970 267.0h1v1.3h-1zM1966 269.0h1v1.3h-1zM1969 271.0h1v1.3h-1zM1969 273.0h1v1.3h-1zM1971 275.0h1v1.3h-1zM1986 277.0h1v1.3h-1zM1965 279.0h1v1.3h-1zM1971 281.0h1v1.3h-1zM1971 283.0h1v1.3h-1zM1962 287.0h1v1.3h-1zM1968 287.0h1v1.3h-1zM1978 289.0h1v1.3h-1zM1977 291.0h1v1.3h-1zM1962 295.0h1v1.3h-1zM1968 295.0h1v1.3h-1zM1973 297.0h1v1.3h-1zM1978 299.0h1v1.3h-1zM1976 301.0h1v1.3h-1zM1966 305.0h1v1.3h-1zM1972 305.0h1v1.3h-1zM1983 307.0h1v1.3h-1zM1984 309.0h1v1.3h-1zM1992 311.0h1v1.3h-1zM1966 315.0h1v1.3h-1zM1972 315.0h1v1.3h-1zM1986 317.0h1v1.3h-1zM1966 323.0h1v1.3h-1zM1972 323.0h1v1.3h-1zM1977 325.0h1v1.3h-1zM1977 327.0h1v1.3h-1zM1966 331.0h1v1.3h-1zM1972 331.0h1v1.3h-1zM1991 333.0h1v1.3h-1zM1954 339.0h1v1.3h-1zM1959 339.0h1v1.3h-1zM1961 341.0h1v1.3h-1zM1979 343.0h1v1.3h-1zM1970 345.0h1v1.3h-1zM1964 347.0h1v1.3h-1zM1976 349.0h1v1.3h-1zM1974 351.0h1v1.3h-1zM1970 353.0h1v1.3h-1zM1966 355.0h1v1.3h-1zM1969 357.0h1v1.3h-1zM1969 359.0h1v1.3h-1zM1971 361.0h1v1.3h-1zM1986 363.0h1v1.3h-1zM1965 365.0h1v1.3h-1zM1971 367.0h1v1.3h-1zM1971 369.0h1v1.3h-1zM1962 373.0h1v1.3h-1zM1968 373.0h1v1.3h-1zM1978 375.0h1v1.3h-1zM1977 377.0h1v1.3h-1zM1962 381.0h1v1.3h-1zM1968 381.0h1v1.3h-1zM1973 383.0h1v1.3h-1zM1978 385.0h1v1.3h-1zM1976 387.0h1v1.3h-1zM1966 391.0h1v1.3h-1zM1972 391.0h1v1.3h-1zM1983 393.0h1v1.3h-1zM1984 395.0h1v1.3h-1zM1992 397.0h1v1.3h-1zM1966 403.0h1v1.3h-1zM1972 403.0h1v1.3h-1zM1977 405.0h1v1.3h-1zM1977 407.0h1v1.3h-1zM1966 411.0h1v1.3h-1zM1972 411.0h1v1.3h-1zM1991 413.0h1v1.3h-1zM1954 417.0h1v1.3h-1zM1959 417.0h1v1.3h-1zM1961 419.0h1v1.3h-1zM1979 421.0h1v1.3h-1zM1970 423.0h1v1.3h-1zM1971 425.0h1v1.3h-1zM1967 427.0h1v1.3h-1zM1965 429.0h1v1.3h-1zM1971 431.0h1v1.3h-1zM1960 435.0h1v1.3h-1zM1966 435.0h1v1.3h-1zM1975 437.0h1v1.3h-1zM1975 439.0h1v1.3h-1zM1973 441.0h1v1.3h-1zM1960 445.0h1v1.3h-1zM1966 445.0h1v1.3h-1zM1974 447.0h1v1.3h-1zM1987 449.0h1v1.3h-1zM1954 453.0h1v1.3h-1zM1959 453.0h1v1.3h-1zM1961 455.0h1v1.3h-1zM1979 457.0h1v1.3h-1zM1970 459.0h1v1.3h-1zM1968 461.0h1v1.3h-1zM1970 463.0h1v1.3h-1zM1966 465.0h1v1.3h-1zM1969 467.0h1v1.3h-1zM1969 469.0h1v1.3h-1zM1971 471.0h1v1.3h-1zM1965 473.0h1v1.3h-1zM1972 475.0h1v1.3h-1zM1973 477.0h1v1.3h-1zM1973 479.0h1v1.3h-1zM1962 481.0h1v1.3h-1zM1968 481.0h1v1.3h-1zM1973 483.0h1v1.3h-1zM1962 487.0h1v1.3h-1zM1968 487.0h1v1.3h-1zM1982 489.0h1v1.3h-1zM1979 491.0h1v1.3h-1zM1980 493.0h1v1.3h-1zM1976 495.0h1v1.3h-1zM1966 497.0h1v1.3h-1zM1972 497.0h1v1.3h-1zM1976 499.0h1v1.3h-1zM1978 501.0h1v1.3h-1zM1966 505.0h1v1.3h-1zM1972 505.0h1v1.3h-1zM1976 507.0h1v1.3h-1zM1974 509.0h1v1.3h-1zM1966 513.0h1v1.3h-1zM1972 513.0h1v1.3h-1zM1976 515.0h1v1.3h-1zM1977 517.0h1v1.3h-1zM1954 521.0h1v1.3h-1zM1959 521.0h1v1.3h-1zM1961 523.0h1v1.3h-1zM1979 525.0h1v1.3h-1zM1970 527.0h1v1.3h-1zM1968 529.0h1v1.3h-1zM1970 531.0h1v1.3h-1zM1976 533.0h1v1.3h-1zM1966 535.0h1v1.3h-1zM1969 537.0h1v1.3h-1zM1969 539.0h1v1.3h-1zM1971 541.0h1v1.3h-1zM1965 543.0h1v1.3h-1zM1972 545.0h1v1.3h-1zM1973 547.0h1v1.3h-1zM1973 549.0h1v1.3h-1zM1962 551.0h1v1.3h-1zM1968 551.0h1v1.3h-1zM1973 553.0h1v1.3h-1zM1962 557.0h1v1.3h-1zM1968 557.0h1v1.3h-1zM1979 559.0h1v1.3h-1zM1980 561.0h1v1.3h-1zM1977 563.0h1v1.3h-1zM1966 565.0h1v1.3h-1zM1972 565.0h1v1.3h-1zM1976 567.0h1v1.3h-1zM1978 569.0h1v1.3h-1zM1966 573.0h1v1.3h-1zM1972 573.0h1v1.3h-1zM1976 575.0h1v1.3h-1zM1974 577.0h1v1.3h-1zM1966 581.0h1v1.3h-1zM1972 581.0h1v1.3h-1zM1976 583.0h1v1.3h-1zM1977 585.0h1v1.3h-1zM1954 589.0h1v1.3h-1zM1959 589.0h1v1.3h-1zM1961 591.0h1v1.3h-1zM1979 593.0h1v1.3h-1zM1970 595.0h1v1.3h-1zM1969 597.0h1v1.3h-1zM1982 599.0h1v1.3h-1zM1965 601.0h1v1.3h-1zM1971 603.0h1v1.3h-1zM1960 607.0h1v1.3h-1zM1966 607.0h1v1.3h-1zM1973 609.0h1v1.3h-1zM1974 611.0h1v1.3h-1zM1960 615.0h1v1.3h-1zM1966 615.0h1v1.3h-1zM1988 617.0h1v1.3h-1zM1985 619.0h1v1.3h-1zM1964 621.0h1v1.3h-1zM1970 621.0h1v1.3h-1zM1978 623.0h1v1.3h-1zM1982 625.0h1v1.3h-1zM1954 629.0h1v1.3h-1zM1959 629.0h1v1.3h-1zM1961 631.0h1v1.3h-1zM1976 633.0h1v1.3h-1zM1970 635.0h1v1.3h-1zM1968 637.0h1v1.3h-1zM1977 639.0h1v1.3h-1zM1965 641.0h1v1.3h-1zM1972 643.0h1v1.3h-1zM1978 645.0h1v1.3h-1zM1974 647.0h1v1.3h-1zM1962 649.0h1v1.3h-1zM1968 649.0h1v1.3h-1zM1973 651.0h1v1.3h-1zM1971 653.0h1v1.3h-1zM1980 655.0h1v1.3h-1zM1981 657.0h1v1.3h-1zM1977 659.0h1v1.3h-1zM1973 661.0h1v1.3h-1zM1971 665.0h1v1.3h-1zM1962 667.0h1v1.3h-1zM1968 667.0h1v1.3h-1zM1980 669.0h1v1.3h-1zM1962 673.0h1v1.3h-1zM1968 673.0h1v1.3h-1zM1973 675.0h1v1.3h-1zM1971 677.0h1v1.3h-1zM1981 679.0h1v1.3h-1zM1954 683.0h1v1.3h-1zM1959 683.0h1v1.3h-1zM1961 685.0h1v1.3h-1zM1976 687.0h1v1.3h-1zM1970 689.0h1v1.3h-1zM1968 691.0h1v1.3h-1zM1968 693.0h1v1.3h-1zM1965 695.0h1v1.3h-1zM1972 697.0h1v1.3h-1zM1978 699.0h1v1.3h-1zM1974 701.0h1v1.3h-1zM1962 703.0h1v1.3h-1zM1968 703.0h1v1.3h-1zM1973 705.0h1v1.3h-1zM1971 707.0h1v1.3h-1zM1980 709.0h1v1.3h-1zM1981 711.0h1v1.3h-1zM1973 713.0h1v1.3h-1zM1973 715.0h1v1.3h-1zM1971 719.0h1v1.3h-1zM1962 721.0h1v1.3h-1zM1968 721.0h1v1.3h-1zM1976 723.0h1v1.3h-1zM1962 725.0h1v1.3h-1zM1968 725.0h1v1.3h-1zM1973 727.0h1v1.3h-1zM1971 729.0h1v1.3h-1zM1977 731.0h1v1.3h-1zM1954 735.0h1v1.3h-1zM1959 735.0h1v1.3h-1zM1961 737.0h1v1.3h-1zM1979 739.0h1v1.3h-1zM1970 741.0h1v1.3h-1zM1968 743.0h1v1.3h-1zM1977 745.0h1v1.3h-1zM1969 747.0h1v1.3h-1zM1965 749.0h1v1.3h-1zM1971 751.0h1v1.3h-1zM1962 755.0h1v1.3h-1zM1968 755.0h1v1.3h-1zM1982 757.0h1v1.3h-1zM1980 759.0h1v1.3h-1zM1966 763.0h1v1.3h-1zM1972 763.0h1v1.3h-1zM1982 765.0h1v1.3h-1zM1976 767.0h1v1.3h-1zM1966 771.0h1v1.3h-1zM1972 771.0h1v1.3h-1zM1977 773.0h1v1.3h-1zM1974 775.0h1v1.3h-1zM1981 777.0h1v1.3h-1zM1976 781.0h1v1.3h-1zM1962 785.0h1v1.3h-1zM1968 785.0h1v1.3h-1zM1990 787.0h1v1.3h-1zM1962 791.0h1v1.3h-1zM1968 791.0h1v1.3h-1zM1973 793.0h1v1.3h-1zM1971 795.0h1v1.3h-1zM1987 797.0h1v1.3h-1zM1972 799.0h1v1.3h-1zM1973 801.0h1v1.3h-1zM1973 803.0h1v1.3h-1zM1962 807.0h1v1.3h-1zM1968 807.0h1v1.3h-1zM1990 809.0h1v1.3h-1zM1978 811.0h1v1.3h-1zM1954 815.0h1v1.3h-1zM1959 815.0h1v1.3h-1zM1961 817.0h1v1.3h-1zM1976 819.0h1v1.3h-1zM1970 821.0h1v1.3h-1zM1968 823.0h1v1.3h-1zM1974 825.0h1v1.3h-1zM1965 827.0h1v1.3h-1zM1972 829.0h1v1.3h-1zM1978 831.0h1v1.3h-1zM1974 833.0h1v1.3h-1zM1962 835.0h1v1.3h-1zM1968 835.0h1v1.3h-1zM1973 837.0h1v1.3h-1zM1971 839.0h1v1.3h-1zM1980 841.0h1v1.3h-1zM1981 843.0h1v1.3h-1zM1974 845.0h1v1.3h-1zM1973 847.0h1v1.3h-1zM1972 851.0h1v1.3h-1zM1962 853.0h1v1.3h-1zM1968 853.0h1v1.3h-1zM1979 855.0h1v1.3h-1zM1962 859.0h1v1.3h-1zM1968 859.0h1v1.3h-1zM1973 861.0h1v1.3h-1zM1971 863.0h1v1.3h-1zM1973 865.0h1v1.3h-1zM1954 869.0h1v1.3h-1zM1959 869.0h1v1.3h-1zM1961 871.0h1v1.3h-1zM1983 873.0h1v1.3h-1zM1970 875.0h1v1.3h-1zM1968 877.0h1v1.3h-1zM1965 879.0h1v1.3h-1zM1985 881.0h1v1.3h-1zM1986 883.0h1v1.3h-1zM1968 885.0h1v1.3h-1zM1974 887.0h1v1.3h-1zM1988 889.0h1v1.3h-1zM1970 891.0h1v1.3h-1zM1972 893.0h1v1.3h-1zM1978 895.0h1v1.3h-1zM1979 897.0h1v1.3h-1zM1954 901.0h1v1.3h-1zM1959 901.0h1v1.3h-1zM1961 903.0h1v1.3h-1zM1979 905.0h1v1.3h-1zM1970 907.0h1v1.3h-1zM1968 909.0h1v1.3h-1zM1970 911.0h1v1.3h-1zM1972 913.0h1v1.3h-1zM1965 915.0h1v1.3h-1zM1986 917.0h1v1.3h-1zM1972 919.0h1v1.3h-1zM1972 921.0h1v1.3h-1zM1962 923.0h1v1.3h-1zM1968 923.0h1v1.3h-1zM1973 925.0h1v1.3h-1zM1971 927.0h1v1.3h-1zM1962 931.0h1v1.3h-1zM1968 931.0h1v1.3h-1zM1971 933.0h1v1.3h-1zM1971 935.0h1v1.3h-1zM1982 937.0h1v1.3h-1zM1976 939.0h1v1.3h-1zM1962 943.0h1v1.3h-1zM1968 943.0h1v1.3h-1zM1989 945.0h1v1.3h-1zM1990 947.0h1v1.3h-1zM1972 949.0h1v1.3h-1zM1977 951.0h1v1.3h-1z"/><path fill="#0451a5" fill-opacity="0.75" d="M1961 158.9h1v1.3h-1zM1969 158.9h1v1.3h-1zM1973 158.9h1v1.3h-1zM1980 158.9h1v1.3h-1zM1988 158.9h1v1.3h-1zM1964 162.9h1v1.3h-1zM1972 162.9h1v1.3h-1zM1977 162.9h1v1.3h-1zM1982 162.9h1v1.3h-1zM1987 162.9h1v1.3h-1zM1992 162.9h1v1.3h-1zM1986 164.9h1v1.3h-1zM1992 164.9h1v1.3h-1zM1997 164.9h1v1.3h-1zM2001 164.9h1v1.3h-1zM2017 164.9h1v1.3h-1zM2025 164.9h1v1.3h-1zM1986 166.9h1v1.3h-1zM1961 172.9h1v1.3h-1zM1969 172.9h1v1.3h-1zM1973 172.9h1v1.3h-1zM1980 172.9h1v1.3h-1zM1988 172.9h1v1.3h-1zM1994 172.9h1v1.3h-1zM2001 172.9h1v1.3h-1zM1964 176.9h1v1.3h-1zM1972 176.9h1v1.3h-1zM1978 176.9h1v1.3h-1zM1986 176.9h1v1.3h-1zM1991 176.9h1v1.3h-1zM1998 176.9h1v1.3h-1zM2001 176.9h1v1.3h-1zM2005 176.9h1v1.3h-1zM2010 176.9h1v1.3h-1zM1974 180.9h1v1.3h-1zM1983 180.9h1v1.3h-1zM1997 180.9h1v1.3h-1zM2005 180.9h1v1.3h-1zM2018 180.9h1v1.3h-1zM2024 180.9h1v1.3h-1zM2032 180.9h1v1.3h-1zM2040 180.9h1v1.3h-1zM1972 184.9h1v1.3h-1zM1984 186.9h1v1.3h-1zM1997 186.9h1v1.3h-1zM2005 186.9h1v1.3h-1zM1994 188.9h1v1.3h-1zM2002 188.9h1v1.3h-1zM2008 188.9h1v1.3h-1zM2017 188.9h1v1.3h-1zM2023 188.9h1v1.3h-1zM2035 188.9h1v1.3h-1zM2041 188.9h1v1.3h-1zM2048 188.9h1v1.3h-1zM2056 188.9h1v1.3h-1zM2061 188.9h1v1.3h-1zM2069 188.9h1v1.3h-1zM1975 190.9h1v1.3h-1zM1970 196.9h1v1.3h-1zM1978 196.9h1v1.3h-1zM1984 196.9h1v1.3h-1zM1992 196.9h1v1.3h-1zM1997 196.9h1v1.3h-1zM2004 196.9h1v1.3h-1zM2010 196.9h1v1.3h-1zM1987 198.9h1v1.3h-1zM1991 198.9h1v1.3h-1zM2000 198.9h1v1.3h-1zM1981 200.9h1v1.3h-1zM1985 200.9h1v1.3h-1zM1988 200.9h1v1.3h-1zM1961 204.9h1v1.3h-1zM1969 204.9h1v1.3h-1zM1973 204.9h1v1.3h-1zM1980 204.9h1v1.3h-1zM1988 204.9h1v1.3h-1zM1964 208.9h1v1.3h-1zM1972 208.9h1v1.3h-1zM1977 208.9h1v1.3h-1zM1984 208.9h1v1.3h-1zM1990 208.9h1v1.3h-1zM1984 214.9h1v1.3h-1zM1997 214.9h1v1.3h-1zM2005 214.9h1v1.3h-1zM1994 216.9h1v1.3h-1zM2002 216.9h1v1.3h-1zM2008 216.9h1v1.3h-1zM2017 216.9h1v1.3h-1zM2023 216.9h1v1.3h-1zM2035 216.9h1v1.3h-1zM2041 216.9h1v1.3h-1zM2048 216.9h1v1.3h-1zM2056 216.9h1v1.3h-1zM2061 216.9h1v1.3h-1zM2069 216.9h1v1.3h-1zM1972 218.9h1v1.3h-1zM1970 222.9h1v1.3h-1zM1978 222.9h1v1.3h-1zM1984 222.9h1v1.3h-1zM1992 222.9h1v1.3h-1zM1997 222.9h1v1.3h-1zM2004 222.9h1v1.3h-1zM2007 222.9h1v1.3h-1zM2011 222.9h1v1.3h-1zM2016 222.9h1v1.3h-1zM1979 224.9h1v1.3h-1zM1988 224.9h1v1.3h-1zM2002 224.9h1v1.3h-1zM2010 224.9h1v1.3h-1zM2023 224.9h1v1.3h-1zM2029 224.9h1v1.3h-1zM2037 224.9h1v1.3h-1zM2045 224.9h1v1.3h-1zM1979 226.9h1v1.3h-1zM1974 232.9h1v1.3h-1zM1982 232.9h1v1.3h-1zM1987 232.9h1v1.3h-1zM1993 232.9h1v1.3h-1zM2000 232.9h1v1.3h-1zM2005 232.9h1v1.3h-1zM2013 232.9h1v1.3h-1zM1980 234.9h1v1.3h-1zM1976 236.9h1v1.3h-1zM1970 240.9h1v1.3h-1zM1975 240.9h1v1.3h-1zM1981 240.9h1v1.3h-1zM1989 240.9h1v1.3h-1zM1998 240.9h1v1.3h-1zM2003 240.9h1v1.3h-1zM2006 240.9h1v1.3h-1zM1975 242.9h1v1.3h-1zM1977 246.9h1v1.3h-1zM1994 248.9h1v1.3h-1zM1999 248.9h1v1.3h-1zM2007 248.9h1v1.3h-1zM2012 248.9h1v1.3h-1zM2016 248.9h1v1.3h-1zM2023 248.9h1v1.3h-1zM1984 250.9h1v1.3h-1zM1992 250.9h1v1.3h-1zM1997 250.9h1v1.3h-1zM1961 254.9h1v1.3h-1zM1970 254.9h1v1.3h-1zM1977 254.9h1v1.3h-1zM1985 254.9h1v1.3h-1zM1988 254.9h1v1.3h-1zM1992 254.9h1v1.3h-1zM1981 259.0h1v1.3h-1zM1986 259.0h1v1.3h-1zM1989 259.0h1v1.3h-1zM1993 259.0h1v1.3h-1zM1998 259.0h1v1.3h-1zM1966 263.0h1v1.3h-1zM1973 265.0h1v1.3h-1zM1976 265.0h1v1.3h-1zM1972 267.0h1v1.3h-1zM1979 267.0h1v1.3h-1zM1968 269.0h1v1.3h-1zM1971 271.0h1v1.3h-1zM1977 271.0h1v1.3h-1zM1971 273.0h1v1.3h-1zM1973 275.0h1v1.3h-1zM1981 275.0h1v1.3h-1zM1988 277.0h1v1.3h-1zM1996 277.0h1v1.3h-1zM2001 277.0h1v1.3h-1zM2007 277.0h1v1.3h-1zM2013 277.0h1v1.3h-1zM2020 277.0h1v1.3h-1zM2025 277.0h1v1.3h-1zM2031 277.0h1v1.3h-1zM1973 281.0h1v1.3h-1zM1976 281.0h1v1.3h-1zM1982 281.0h1v1.3h-1zM1970 287.0h1v1.3h-1zM1976 287.0h1v1.3h-1zM1981 287.0h1v1.3h-1zM1990 287.0h1v1.3h-1zM1993 287.0h1v1.3h-1zM2002 287.0h1v1.3h-1zM2010 287.0h1v1.3h-1zM1980 289.0h1v1.3h-1zM1987 289.0h1v1.3h-1zM1979 291.0h1v1.3h-1zM1982 291.0h1v1.3h-1zM1986 291.0h1v1.3h-1zM1970 295.0h1v1.3h-1zM1979 295.0h1v1.3h-1zM1984 295.0h1v1.3h-1zM1988 295.0h1v1.3h-1zM1995 295.0h1v1.3h-1zM1975 297.0h1v1.3h-1zM1981 297.0h1v1.3h-1zM1980 299.0h1v1.3h-1zM1988 299.0h1v1.3h-1zM1974 305.0h1v1.3h-1zM1982 305.0h1v1.3h-1zM1991 305.0h1v1.3h-1zM1999 305.0h1v1.3h-1zM2003 305.0h1v1.3h-1zM1985 307.0h1v1.3h-1zM1989 307.0h1v1.3h-1zM1996 307.0h1v1.3h-1zM1986 309.0h1v1.3h-1zM1993 309.0h1v1.3h-1zM1994 311.0h1v1.3h-1zM2003 311.0h1v1.3h-1zM2009 311.0h1v1.3h-1zM1974 315.0h1v1.3h-1zM1979 315.0h1v1.3h-1zM1984 315.0h1v1.3h-1zM1987 315.0h1v1.3h-1zM1995 315.0h1v1.3h-1zM1988 317.0h1v1.3h-1zM1993 317.0h1v1.3h-1zM2001 317.0h1v1.3h-1zM1974 323.0h1v1.3h-1zM1979 323.0h1v1.3h-1zM1987 323.0h1v1.3h-1zM1995 323.0h1v1.3h-1zM2000 323.0h1v1.3h-1zM2008 323.0h1v1.3h-1zM1979 325.0h1v1.3h-1zM1985 325.0h1v1.3h-1zM1979 327.0h1v1.3h-1zM1984 327.0h1v1.3h-1zM1974 331.0h1v1.3h-1zM1983 331.0h1v1.3h-1zM1992 331.0h1v1.3h-1zM1997 331.0h1v1.3h-1zM2005 331.0h1v1.3h-1zM1993 333.0h1v1.3h-1zM1998 333.0h1v1.3h-1zM2007 333.0h1v1.3h-1zM2013 333.0h1v1.3h-1zM1961 339.0h1v1.3h-1zM1969 339.0h1v1.3h-1zM1975 339.0h1v1.3h-1zM1982 339.0h1v1.3h-1zM1987 339.0h1v1.3h-1zM1995 339.0h1v1.3h-1zM2000 339.0h1v1.3h-1zM1981 343.0h1v1.3h-1zM1986 343.0h1v1.3h-1zM1994 343.0h1v1.3h-1zM1966 347.0h1v1.3h-1zM1978 349.0h1v1.3h-1zM1982 349.0h1v1.3h-1zM1989 349.0h1v1.3h-1zM1976 351.0h1v1.3h-1zM1979 351.0h1v1.3h-1zM1983 351.0h1v1.3h-1zM1972 353.0h1v1.3h-1zM1980 353.0h1v1.3h-1zM1968 355.0h1v1.3h-1zM1971 357.0h1v1.3h-1zM1971 359.0h1v1.3h-1zM1974 359.0h1v1.3h-1zM1973 361.0h1v1.3h-1zM1988 363.0h1v1.3h-1zM1994 363.0h1v1.3h-1zM1998 363.0h1v1.3h-1zM2005 363.0h1v1.3h-1zM2013 363.0h1v1.3h-1zM2017 363.0h1v1.3h-1zM2024 363.0h1v1.3h-1zM2029 363.0h1v1.3h-1zM2032 363.0h1v1.3h-1zM1973 367.0h1v1.3h-1zM1981 367.0h1v1.3h-1zM1970 373.0h1v1.3h-1zM1976 373.0h1v1.3h-1zM1984 373.0h1v1.3h-1zM1992 373.0h1v1.3h-1zM1995 373.0h1v1.3h-1zM1999 373.0h1v1.3h-1zM2004 373.0h1v1.3h-1zM2009 373.0h1v1.3h-1zM1980 375.0h1v1.3h-1zM1986 375.0h1v1.3h-1zM1979 377.0h1v1.3h-1zM1987 377.0h1v1.3h-1zM1990 377.0h1v1.3h-1zM1970 381.0h1v1.3h-1zM1976 381.0h1v1.3h-1zM1983 381.0h1v1.3h-1zM1990 381.0h1v1.3h-1zM1995 381.0h1v1.3h-1zM1975 383.0h1v1.3h-1zM1978 383.0h1v1.3h-1zM1980 385.0h1v1.3h-1zM1989 385.0h1v1.3h-1zM1974 391.0h1v1.3h-1zM1979 391.0h1v1.3h-1zM1987 391.0h1v1.3h-1zM1995 391.0h1v1.3h-1zM2003 391.0h1v1.3h-1zM1985 393.0h1v1.3h-1zM1993 393.0h1v1.3h-1zM1996 393.0h1v1.3h-1zM1986 395.0h1v1.3h-1zM1992 395.0h1v1.3h-1zM1999 395.0h1v1.3h-1zM1994 397.0h1v1.3h-1zM1999 397.0h1v1.3h-1zM2008 397.0h1v1.3h-1zM2011 397.0h1v1.3h-1zM1974 403.0h1v1.3h-1zM1981 403.0h1v1.3h-1zM1986 403.0h1v1.3h-1zM1991 403.0h1v1.3h-1zM1999 403.0h1v1.3h-1zM2004 403.0h1v1.3h-1zM2010 403.0h1v1.3h-1zM1979 405.0h1v1.3h-1zM1984 405.0h1v1.3h-1zM1979 407.0h1v1.3h-1zM1983 407.0h1v1.3h-1zM1974 411.0h1v1.3h-1zM1977 411.0h1v1.3h-1zM1981 411.0h1v1.3h-1zM1986 411.0h1v1.3h-1zM1991 411.0h1v1.3h-1zM1999 411.0h1v1.3h-1zM2004 411.0h1v1.3h-1zM2012 411.0h1v1.3h-1zM2015 411.0h1v1.3h-1zM1993 413.0h1v1.3h-1zM1996 413.0h1v1.3h-1zM2000 413.0h1v1.3h-1zM2005 413.0h1v1.3h-1zM2010 413.0h1v1.3h-1zM1961 417.0h1v1.3h-1zM1964 417.0h1v1.3h-1zM1969 417.0h1v1.3h-1zM1973 417.0h1v1.3h-1zM1980 417.0h1v1.3h-1zM1988 417.0h1v1.3h-1zM1991 417.0h1v1.3h-1zM1995 417.0h1v1.3h-1zM2000 417.0h1v1.3h-1zM1981 421.0h1v1.3h-1zM1984 421.0h1v1.3h-1zM1990 421.0h1v1.3h-1zM1997 421.0h1v1.3h-1zM1973 425.0h1v1.3h-1zM1982 425.0h1v1.3h-1zM1969 427.0h1v1.3h-1zM1974 427.0h1v1.3h-1zM1968 435.0h1v1.3h-1zM1972 435.0h1v1.3h-1zM1979 435.0h1v1.3h-1zM1987 435.0h1v1.3h-1zM1995 435.0h1v1.3h-1zM2000 435.0h1v1.3h-1zM1977 437.0h1v1.3h-1zM1985 437.0h1v1.3h-1zM1977 439.0h1v1.3h-1zM1986 439.0h1v1.3h-1zM1975 441.0h1v1.3h-1zM1983 441.0h1v1.3h-1zM1968 445.0h1v1.3h-1zM1971 445.0h1v1.3h-1zM1974 445.0h1v1.3h-1zM1982 445.0h1v1.3h-1zM1990 445.0h1v1.3h-1zM1996 445.0h1v1.3h-1zM2003 445.0h1v1.3h-1zM2008 445.0h1v1.3h-1zM1976 447.0h1v1.3h-1zM1984 447.0h1v1.3h-1zM1989 449.0h1v1.3h-1zM1994 449.0h1v1.3h-1zM2001 449.0h1v1.3h-1zM2009 449.0h1v1.3h-1zM1961 453.0h1v1.3h-1zM1969 453.0h1v1.3h-1zM1977 453.0h1v1.3h-1zM1985 453.0h1v1.3h-1zM1990 453.0h1v1.3h-1zM1981 457.0h1v1.3h-1zM1988 457.0h1v1.3h-1zM1996 457.0h1v1.3h-1zM1972 463.0h1v1.3h-1zM1978 463.0h1v1.3h-1zM1968 465.0h1v1.3h-1zM1971 467.0h1v1.3h-1zM1977 467.0h1v1.3h-1zM1971 469.0h1v1.3h-1zM1973 471.0h1v1.3h-1zM1978 471.0h1v1.3h-1zM1974 475.0h1v1.3h-1zM1981 475.0h1v1.3h-1zM1975 477.0h1v1.3h-1zM1978 477.0h1v1.3h-1zM1982 477.0h1v1.3h-1zM1970 481.0h1v1.3h-1zM1977 481.0h1v1.3h-1zM1985 481.0h1v1.3h-1zM1994 481.0h1v1.3h-1zM2002 481.0h1v1.3h-1zM2010 481.0h1v1.3h-1zM2015 481.0h1v1.3h-1zM1970 487.0h1v1.3h-1zM1973 487.0h1v1.3h-1zM1977 487.0h1v1.3h-1zM1982 487.0h1v1.3h-1zM1987 487.0h1v1.3h-1zM1992 487.0h1v1.3h-1zM1996 487.0h1v1.3h-1zM2003 487.0h1v1.3h-1zM2006 487.0h1v1.3h-1zM1984 489.0h1v1.3h-1zM1989 489.0h1v1.3h-1zM1997 489.0h1v1.3h-1zM1981 491.0h1v1.3h-1zM1984 491.0h1v1.3h-1zM1988 491.0h1v1.3h-1zM1993 491.0h1v1.3h-1zM1982 493.0h1v1.3h-1zM1990 493.0h1v1.3h-1zM1974 497.0h1v1.3h-1zM1980 497.0h1v1.3h-1zM1988 497.0h1v1.3h-1zM1996 497.0h1v1.3h-1zM2003 497.0h1v1.3h-1zM2008 497.0h1v1.3h-1zM2014 497.0h1v1.3h-1zM1980 501.0h1v1.3h-1zM1984 501.0h1v1.3h-1zM1974 505.0h1v1.3h-1zM1983 505.0h1v1.3h-1zM1988 505.0h1v1.3h-1zM1991 505.0h1v1.3h-1zM1998 505.0h1v1.3h-1zM2005 505.0h1v1.3h-1zM1976 509.0h1v1.3h-1zM1974 513.0h1v1.3h-1zM1980 513.0h1v1.3h-1zM1987 513.0h1v1.3h-1zM1992 513.0h1v1.3h-1zM1998 513.0h1v1.3h-1zM2005 513.0h1v1.3h-1zM2010 513.0h1v1.3h-1zM2014 513.0h1v1.3h-1zM1979 517.0h1v1.3h-1zM1961 521.0h1v1.3h-1zM1969 521.0h1v1.3h-1zM1975 521.0h1v1.3h-1zM1980 521.0h1v1.3h-1zM1988 521.0h1v1.3h-1zM1991 521.0h1v1.3h-1zM1995 521.0h1v1.3h-1zM2000 521.0h1v1.3h-1zM1981 525.0h1v1.3h-1zM1987 525.0h1v1.3h-1zM1992 525.0h1v1.3h-1zM1972 531.0h1v1.3h-1zM1977 531.0h1v1.3h-1zM1978 533.0h1v1.3h-1zM1983 533.0h1v1.3h-1zM1988 533.0h1v1.3h-1zM1968 535.0h1v1.3h-1zM1971 537.0h1v1.3h-1zM1971 539.0h1v1.3h-1zM1973 541.0h1v1.3h-1zM1977 541.0h1v1.3h-1zM1974 545.0h1v1.3h-1zM1983 545.0h1v1.3h-1zM1975 547.0h1v1.3h-1zM1980 547.0h1v1.3h-1zM1970 551.0h1v1.3h-1zM1974 551.0h1v1.3h-1zM1981 551.0h1v1.3h-1zM1986 551.0h1v1.3h-1zM1994 551.0h1v1.3h-1zM2002 551.0h1v1.3h-1zM2005 551.0h1v1.3h-1zM2011 551.0h1v1.3h-1zM2017 551.0h1v1.3h-1zM1970 557.0h1v1.3h-1zM1975 557.0h1v1.3h-1zM1983 557.0h1v1.3h-1zM1989 557.0h1v1.3h-1zM1997 557.0h1v1.3h-1zM2001 557.0h1v1.3h-1zM1981 559.0h1v1.3h-1zM1986 559.0h1v1.3h-1zM1994 559.0h1v1.3h-1zM1982 561.0h1v1.3h-1zM1987 561.0h1v1.3h-1zM1990 561.0h1v1.3h-1zM1994 561.0h1v1.3h-1zM1974 565.0h1v1.3h-1zM1980 565.0h1v1.3h-1zM1987 565.0h1v1.3h-1zM1992 565.0h1v1.3h-1zM2000 565.0h1v1.3h-1zM2009 565.0h1v1.3h-1zM2014 565.0h1v1.3h-1zM1980 569.0h1v1.3h-1zM1988 569.0h1v1.3h-1zM1974 573.0h1v1.3h-1zM1979 573.0h1v1.3h-1zM1988 573.0h1v1.3h-1zM1997 573.0h1v1.3h-1zM2000 573.0h1v1.3h-1zM2003 573.0h1v1.3h-1zM2006 573.0h1v1.3h-1zM2014 573.0h1v1.3h-1zM2017 573.0h1v1.3h-1zM1976 577.0h1v1.3h-1zM1974 581.0h1v1.3h-1zM1983 581.0h1v1.3h-1zM1986 581.0h1v1.3h-1zM1992 581.0h1v1.3h-1zM1995 581.0h1v1.3h-1zM2003 581.0h1v1.3h-1zM2011 581.0h1v1.3h-1zM2014 581.0h1v1.3h-1zM1979 585.0h1v1.3h-1zM1961 589.0h1v1.3h-1zM1966 589.0h1v1.3h-1zM1974 589.0h1v1.3h-1zM1982 589.0h1v1.3h-1zM1991 589.0h1v1.3h-1zM1981 593.0h1v1.3h-1zM1989 593.0h1v1.3h-1zM1994 593.0h1v1.3h-1zM1997 593.0h1v1.3h-1zM1971 597.0h1v1.3h-1zM1984 599.0h1v1.3h-1zM1992 599.0h1v1.3h-1zM1998 599.0h1v1.3h-1zM1968 607.0h1v1.3h-1zM1976 607.0h1v1.3h-1zM1979 607.0h1v1.3h-1zM1983 607.0h1v1.3h-1zM1988 607.0h1v1.3h-1zM1993 607.0h1v1.3h-1zM2001 607.0h1v1.3h-1zM2010 607.0h1v1.3h-1zM1975 609.0h1v1.3h-1zM1983 609.0h1v1.3h-1zM1976 611.0h1v1.3h-1zM1984 611.0h1v1.3h-1zM1968 615.0h1v1.3h-1zM1976 615.0h1v1.3h-1zM1984 615.0h1v1.3h-1zM1989 615.0h1v1.3h-1zM1990 617.0h1v1.3h-1zM1996 617.0h1v1.3h-1zM2003 617.0h1v1.3h-1zM2008 617.0h1v1.3h-1zM2011 617.0h1v1.3h-1zM2015 617.0h1v1.3h-1zM2020 617.0h1v1.3h-1zM2025 617.0h1v1.3h-1zM1972 621.0h1v1.3h-1zM1980 621.0h1v1.3h-1zM1983 621.0h1v1.3h-1zM1987 621.0h1v1.3h-1zM1992 621.0h1v1.3h-1zM1997 621.0h1v1.3h-1zM2003 621.0h1v1.3h-1zM2008 621.0h1v1.3h-1zM1980 623.0h1v1.3h-1zM1985 623.0h1v1.3h-1zM1984 625.0h1v1.3h-1zM1989 625.0h1v1.3h-1zM1996 625.0h1v1.3h-1zM1961 629.0h1v1.3h-1zM1967 629.0h1v1.3h-1zM1974 629.0h1v1.3h-1zM1979 629.0h1v1.3h-1zM1988 629.0h1v1.3h-1zM1997 629.0h1v1.3h-1zM1978 633.0h1v1.3h-1zM1982 633.0h1v1.3h-1zM1989 633.0h1v1.3h-1zM1974 643.0h1v1.3h-1zM1979 643.0h1v1.3h-1zM1983 643.0h1v1.3h-1zM1980 645.0h1v1.3h-1zM1983 645.0h1v1.3h-1zM1991 645.0h1v1.3h-1zM1970 649.0h1v1.3h-1zM1976 649.0h1v1.3h-1zM1982 649.0h1v1.3h-1zM1989 649.0h1v1.3h-1zM1994 649.0h1v1.3h-1zM1998 649.0h1v1.3h-1zM2005 649.0h1v1.3h-1zM2014 649.0h1v1.3h-1zM1982 655.0h1v1.3h-1zM1990 655.0h1v1.3h-1zM1983 657.0h1v1.3h-1zM1991 657.0h1v1.3h-1zM1979 659.0h1v1.3h-1zM1984 659.0h1v1.3h-1zM1975 661.0h1v1.3h-1zM1970 667.0h1v1.3h-1zM1974 667.0h1v1.3h-1zM1981 667.0h1v1.3h-1zM1989 667.0h1v1.3h-1zM1997 667.0h1v1.3h-1zM1982 669.0h1v1.3h-1zM1987 669.0h1v1.3h-1zM1995 669.0h1v1.3h-1zM1970 673.0h1v1.3h-1zM1975 673.0h1v1.3h-1zM1983 673.0h1v1.3h-1zM1989 673.0h1v1.3h-1zM1997 673.0h1v1.3h-1zM2000 673.0h1v1.3h-1zM2003 673.0h1v1.3h-1zM2007 673.0h1v1.3h-1zM2014 673.0h1v1.3h-1zM1983 679.0h1v1.3h-1zM1986 679.0h1v1.3h-1zM1992 679.0h1v1.3h-1zM1961 683.0h1v1.3h-1zM1969 683.0h1v1.3h-1zM1974 683.0h1v1.3h-1zM1978 683.0h1v1.3h-1zM1985 683.0h1v1.3h-1zM1990 683.0h1v1.3h-1zM1978 687.0h1v1.3h-1zM1986 687.0h1v1.3h-1zM1994 687.0h1v1.3h-1zM1974 697.0h1v1.3h-1zM1982 697.0h1v1.3h-1zM1980 699.0h1v1.3h-1zM1988 699.0h1v1.3h-1zM1994 699.0h1v1.3h-1zM1970 703.0h1v1.3h-1zM1974 703.0h1v1.3h-1zM1981 703.0h1v1.3h-1zM1985 703.0h1v1.3h-1zM1992 703.0h1v1.3h-1zM2000 703.0h1v1.3h-1zM2008 703.0h1v1.3h-1zM2017 703.0h1v1.3h-1zM1982 709.0h1v1.3h-1zM1986 709.0h1v1.3h-1zM1993 709.0h1v1.3h-1zM1983 711.0h1v1.3h-1zM1988 711.0h1v1.3h-1zM1994 711.0h1v1.3h-1zM1975 713.0h1v1.3h-1zM1975 715.0h1v1.3h-1zM1978 715.0h1v1.3h-1zM1970 721.0h1v1.3h-1zM1979 721.0h1v1.3h-1zM1985 721.0h1v1.3h-1zM1988 721.0h1v1.3h-1zM1992 721.0h1v1.3h-1zM1997 721.0h1v1.3h-1zM1978 723.0h1v1.3h-1zM1981 723.0h1v1.3h-1zM1985 723.0h1v1.3h-1zM1970 725.0h1v1.3h-1zM1974 725.0h1v1.3h-1zM1981 725.0h1v1.3h-1zM1984 725.0h1v1.3h-1zM1988 725.0h1v1.3h-1zM1995 725.0h1v1.3h-1zM2003 725.0h1v1.3h-1zM2012 725.0h1v1.3h-1zM1979 731.0h1v1.3h-1zM1984 731.0h1v1.3h-1zM1961 735.0h1v1.3h-1zM1969 735.0h1v1.3h-1zM1974 735.0h1v1.3h-1zM1977 735.0h1v1.3h-1zM1981 735.0h1v1.3h-1zM1986 735.0h1v1.3h-1zM1991 735.0h1v1.3h-1zM1999 735.0h1v1.3h-1zM2004 735.0h1v1.3h-1zM1981 739.0h1v1.3h-1zM1984 739.0h1v1.3h-1zM1990 739.0h1v1.3h-1zM1997 739.0h1v1.3h-1zM1970 755.0h1v1.3h-1zM1979 755.0h1v1.3h-1zM1985 755.0h1v1.3h-1zM1992 755.0h1v1.3h-1zM1997 755.0h1v1.3h-1zM2000 755.0h1v1.3h-1zM2007 755.0h1v1.3h-1zM1984 757.0h1v1.3h-1zM1990 757.0h1v1.3h-1zM1999 757.0h1v1.3h-1zM1974 763.0h1v1.3h-1zM1977 763.0h1v1.3h-1zM1981 763.0h1v1.3h-1zM1986 763.0h1v1.3h-1zM1991 763.0h1v1.3h-1zM1999 763.0h1v1.3h-1zM2008 763.0h1v1.3h-1zM2017 763.0h1v1.3h-1zM1984 765.0h1v1.3h-1zM1989 765.0h1v1.3h-1zM1992 765.0h1v1.3h-1zM1978 767.0h1v1.3h-1zM1981 767.0h1v1.3h-1zM1974 771.0h1v1.3h-1zM1980 771.0h1v1.3h-1zM1987 771.0h1v1.3h-1zM1992 771.0h1v1.3h-1zM2001 771.0h1v1.3h-1zM2006 771.0h1v1.3h-1zM2014 771.0h1v1.3h-1zM2022 771.0h1v1.3h-1zM1983 777.0h1v1.3h-1zM1991 777.0h1v1.3h-1zM1978 781.0h1v1.3h-1zM1983 781.0h1v1.3h-1zM1970 785.0h1v1.3h-1zM1973 785.0h1v1.3h-1zM1977 785.0h1v1.3h-1zM1982 785.0h1v1.3h-1zM1987 785.0h1v1.3h-1zM1992 787.0h1v1.3h-1zM1998 787.0h1v1.3h-1zM2005 787.0h1v1.3h-1zM2010 787.0h1v1.3h-1zM2015 787.0h1v1.3h-1zM1970 791.0h1v1.3h-1zM1976 791.0h1v1.3h-1zM1983 791.0h1v1.3h-1zM1988 791.0h1v1.3h-1zM1996 791.0h1v1.3h-1zM2005 791.0h1v1.3h-1zM2013 791.0h1v1.3h-1zM1989 797.0h1v1.3h-1zM1997 797.0h1v1.3h-1zM2005 797.0h1v1.3h-1zM1974 799.0h1v1.3h-1zM1975 801.0h1v1.3h-1zM1975 803.0h1v1.3h-1zM1970 807.0h1v1.3h-1zM1976 807.0h1v1.3h-1zM1983 807.0h1v1.3h-1zM1988 807.0h1v1.3h-1zM1994 807.0h1v1.3h-1zM2001 807.0h1v1.3h-1zM1992 809.0h1v1.3h-1zM1998 809.0h1v1.3h-1zM2001 809.0h1v1.3h-1zM2005 809.0h1v1.3h-1zM2010 809.0h1v1.3h-1zM2015 809.0h1v1.3h-1zM2023 809.0h1v1.3h-1zM1980 811.0h1v1.3h-1zM1985 811.0h1v1.3h-1zM1990 811.0h1v1.3h-1zM1961 815.0h1v1.3h-1zM1968 815.0h1v1.3h-1zM1976 815.0h1v1.3h-1zM1984 815.0h1v1.3h-1zM1990 815.0h1v1.3h-1zM1998 815.0h1v1.3h-1zM1978 819.0h1v1.3h-1zM1981 819.0h1v1.3h-1zM1988 819.0h1v1.3h-1zM1992 819.0h1v1.3h-1zM1974 829.0h1v1.3h-1zM1982 829.0h1v1.3h-1zM1980 831.0h1v1.3h-1zM1988 831.0h1v1.3h-1zM1970 835.0h1v1.3h-1zM1973 835.0h1v1.3h-1zM1977 835.0h1v1.3h-1zM1982 835.0h1v1.3h-1zM1987 835.0h1v1.3h-1zM1990 835.0h1v1.3h-1zM1994 835.0h1v1.3h-1zM2001 835.0h1v1.3h-1zM2008 835.0h1v1.3h-1zM2012 835.0h1v1.3h-1zM1982 841.0h1v1.3h-1zM1990 841.0h1v1.3h-1zM1994 841.0h1v1.3h-1zM1983 843.0h1v1.3h-1zM1987 843.0h1v1.3h-1zM1994 843.0h1v1.3h-1zM1976 845.0h1v1.3h-1zM1981 845.0h1v1.3h-1zM1975 847.0h1v1.3h-1zM1979 847.0h1v1.3h-1zM1970 853.0h1v1.3h-1zM1975 853.0h1v1.3h-1zM1984 853.0h1v1.3h-1zM1988 853.0h1v1.3h-1zM1995 853.0h1v1.3h-1zM1981 855.0h1v1.3h-1zM1984 855.0h1v1.3h-1zM1988 855.0h1v1.3h-1zM1993 855.0h1v1.3h-1zM1970 859.0h1v1.3h-1zM1976 859.0h1v1.3h-1zM1985 859.0h1v1.3h-1zM1992 859.0h1v1.3h-1zM1995 859.0h1v1.3h-1zM2003 859.0h1v1.3h-1zM2011 859.0h1v1.3h-1zM1975 865.0h1v1.3h-1zM1961 869.0h1v1.3h-1zM1966 869.0h1v1.3h-1zM1969 869.0h1v1.3h-1zM1973 869.0h1v1.3h-1zM1978 869.0h1v1.3h-1zM1983 869.0h1v1.3h-1zM1991 869.0h1v1.3h-1zM1997 869.0h1v1.3h-1zM2004 869.0h1v1.3h-1zM2009 869.0h1v1.3h-1zM1985 873.0h1v1.3h-1zM1990 873.0h1v1.3h-1zM1995 873.0h1v1.3h-1zM2000 873.0h1v1.3h-1zM2006 873.0h1v1.3h-1zM1987 881.0h1v1.3h-1zM1994 881.0h1v1.3h-1zM2002 881.0h1v1.3h-1zM1988 883.0h1v1.3h-1zM1993 883.0h1v1.3h-1zM2002 883.0h1v1.3h-1zM2011 883.0h1v1.3h-1zM2019 883.0h1v1.3h-1zM2027 883.0h1v1.3h-1zM2035 883.0h1v1.3h-1zM2044 883.0h1v1.3h-1zM2047 883.0h1v1.3h-1zM2051 883.0h1v1.3h-1zM2056 883.0h1v1.3h-1zM2061 883.0h1v1.3h-1zM2069 883.0h1v1.3h-1zM1970 885.0h1v1.3h-1zM1990 889.0h1v1.3h-1zM1997 889.0h1v1.3h-1zM2002 889.0h1v1.3h-1zM2010 889.0h1v1.3h-1zM2015 889.0h1v1.3h-1zM2020 889.0h1v1.3h-1zM1972 891.0h1v1.3h-1zM1974 893.0h1v1.3h-1zM1981 893.0h1v1.3h-1zM1980 895.0h1v1.3h-1zM1987 895.0h1v1.3h-1zM1993 895.0h1v1.3h-1zM1981 897.0h1v1.3h-1zM1984 897.0h1v1.3h-1zM1988 897.0h1v1.3h-1zM1993 897.0h1v1.3h-1zM1961 901.0h1v1.3h-1zM1970 901.0h1v1.3h-1zM1975 901.0h1v1.3h-1zM1980 901.0h1v1.3h-1zM1985 901.0h1v1.3h-1zM1991 901.0h1v1.3h-1zM1998 901.0h1v1.3h-1zM2003 901.0h1v1.3h-1zM2008 901.0h1v1.3h-1zM1981 905.0h1v1.3h-1zM1985 905.0h1v1.3h-1zM1992 905.0h1v1.3h-1zM2000 905.0h1v1.3h-1zM1974 913.0h1v1.3h-1zM1988 917.0h1v1.3h-1zM1993 917.0h1v1.3h-1zM1999 917.0h1v1.3h-1zM2006 917.0h1v1.3h-1zM2011 917.0h1v1.3h-1zM2019 917.0h1v1.3h-1zM2027 917.0h1v1.3h-1zM2030 917.0h1v1.3h-1zM1974 919.0h1v1.3h-1zM1978 919.0h1v1.3h-1zM1970 923.0h1v1.3h-1zM1979 923.0h1v1.3h-1zM1982 923.0h1v1.3h-1zM1985 923.0h1v1.3h-1zM1992 923.0h1v1.3h-1zM2000 923.0h1v1.3h-1zM2008 923.0h1v1.3h-1zM2013 923.0h1v1.3h-1zM1975 925.0h1v1.3h-1zM1978 925.0h1v1.3h-1zM1973 927.0h1v1.3h-1zM1970 931.0h1v1.3h-1zM1978 931.0h1v1.3h-1zM1984 931.0h1v1.3h-1zM1989 931.0h1v1.3h-1zM1998 931.0h1v1.3h-1zM2006 931.0h1v1.3h-1zM1973 933.0h1v1.3h-1zM1976 933.0h1v1.3h-1zM1984 937.0h1v1.3h-1zM1990 937.0h1v1.3h-1zM1995 937.0h1v1.3h-1zM1978 939.0h1v1.3h-1zM1983 939.0h1v1.3h-1zM1970 943.0h1v1.3h-1zM1976 943.0h1v1.3h-1zM1984 943.0h1v1.3h-1zM1987 943.0h1v1.3h-1zM1991 943.0h1v1.3h-1zM1996 943.0h1v1.3h-1zM2001 943.0h1v1.3h-1zM2006 943.0h1v1.3h-1zM2011 943.0h1v1.3h-1zM2020 943.0h1v1.3h-1zM1991 945.0h1v1.3h-1zM2000 945.0h1v1.3h-1zM2008 945.0h1v1.3h-1zM1992 947.0h1v1.3h-1zM1997 947.0h1v1.3h-1zM2005 947.0h1v1.3h-1zM2010 947.0h1v1.3h-1zM2013 947.0h1v1.3h-1zM2017 947.0h1v1.3h-1zM2022 947.0h1v1.3h-1zM2027 947.0h1v1.3h-1zM2035 947.0h1v1.3h-1zM2039 947.0h1v1.3h-1zM2046 947.0h1v1.3h-1zM2052 947.0h1v1.3h-1zM2059 947.0h1v1.3h-1zM2064 947.0h1v1.3h-1zM2073 947.0h1v1.3h-1zM1974 949.0h1v1.3h-1zM1979 951.0h1v1.3h-1zM1986 951.0h1v1.3h-1z"/><path fill="#0451a5" fill-opacity="0.61" d="M1962 158.9h6v1.3h-6zM1970 158.9h3v1.3h-3zM1974 158.9h5v1.3h-5zM1981 158.9h6v1.3h-6zM1989 158.9h8v1.3h-8zM1965 162.9h6v1.3h-6zM1973 162.9h3v1.3h-3zM1978 162.9h4v1.3h-4zM1983 162.9h4v1.3h-4zM1988 162.9h4v1.3h-4zM1993 162.9h3v1.3h-3zM1984 164.9h1v1.3h-1zM1987 164.9h5v1.3h-5zM1993 164.9h3v1.3h-3zM1998 164.9h3v1.3h-3zM2002 164.9h5v1.3h-5zM2014 164.9h1v1.3h-1zM2018 164.9h6v1.3h-6zM2026 164.9h5v1.3h-5zM2032 164.9h1v1.3h-1zM2034 164.9h5v1.3h-5zM2040 164.9h9v1.3h-9zM1987 166.9h11v1.3h-11zM1962 172.9h6v1.3h-6zM1970 172.9h3v1.3h-3zM1974 172.9h5v1.3h-5zM1981 172.9h6v1.3h-6zM1989 172.9h5v1.3h-5zM1995 172.9h6v1.3h-6zM2002 172.9h3v1.3h-3zM1965 176.9h6v1.3h-6zM1973 176.9h4v1.3h-4zM1979 176.9h6v1.3h-6zM1987 176.9h3v1.3h-3zM1992 176.9h5v1.3h-5zM1999 176.9h2v1.3h-2zM2002 176.9h3v1.3h-3zM2006 176.9h4v1.3h-4zM2011 176.9h3v1.3h-3zM1975 180.9h8v1.3h-8zM1984 180.9h2v1.3h-2zM1987 180.9h2v1.3h-2zM1991 180.9h3v1.3h-3zM1995 180.9h1v1.3h-1zM1998 180.9h6v1.3h-6zM2006 180.9h11v1.3h-11zM2019 180.9h1v1.3h-1zM2022 180.9h1v1.3h-1zM2025 180.9h6v1.3h-6zM2033 180.9h6v1.3h-6zM2041 180.9h1v1.3h-1zM1973 184.9h4v1.3h-4zM1982 186.9h1v1.3h-1zM1985 186.9h11v1.3h-11zM1998 186.9h6v1.3h-6zM2006 186.9h3v1.3h-3zM1995 188.9h6v1.3h-6zM2003 188.9h4v1.3h-4zM2009 188.9h7v1.3h-7zM2018 188.9h5v1.3h-5zM2024 188.9h11v1.3h-11zM2036 188.9h5v1.3h-5zM2042 188.9h6v1.3h-6zM2049 188.9h7v1.3h-7zM2057 188.9h4v1.3h-4zM2062 188.9h7v1.3h-7zM2070 188.9h3v1.3h-3zM1976 190.9h2v1.3h-2zM1971 196.9h6v1.3h-6zM1979 196.9h4v1.3h-4zM1985 196.9h6v1.3h-6zM1993 196.9h3v1.3h-3zM1998 196.9h5v1.3h-5zM2005 196.9h5v1.3h-5zM2011 196.9h3v1.3h-3zM1985 198.9h1v1.3h-1zM1988 198.9h2v1.3h-2zM1992 198.9h8v1.3h-8zM2001 198.9h2v1.3h-2zM1979 200.9h1v1.3h-1zM1982 200.9h2v1.3h-2zM1986 200.9h2v1.3h-2zM1989 200.9h2v1.3h-2zM1962 204.9h6v1.3h-6zM1970 204.9h3v1.3h-3zM1974 204.9h5v1.3h-5zM1981 204.9h6v1.3h-6zM1989 204.9h2v1.3h-2zM1965 208.9h6v1.3h-6zM1973 208.9h3v1.3h-3zM1978 208.9h6v1.3h-6zM1985 208.9h5v1.3h-5zM1991 208.9h3v1.3h-3zM1982 214.9h1v1.3h-1zM1985 214.9h11v1.3h-11zM1998 214.9h6v1.3h-6zM2006 214.9h3v1.3h-3zM1995 216.9h6v1.3h-6zM2003 216.9h4v1.3h-4zM2009 216.9h7v1.3h-7zM2018 216.9h5v1.3h-5zM2024 216.9h11v1.3h-11zM2036 216.9h5v1.3h-5zM2042 216.9h6v1.3h-6zM2049 216.9h7v1.3h-7zM2057 216.9h4v1.3h-4zM2062 216.9h7v1.3h-7zM2070 216.9h3v1.3h-3zM1973 218.9h4v1.3h-4zM1971 222.9h6v1.3h-6zM1979 222.9h4v1.3h-4zM1985 222.9h6v1.3h-6zM1993 222.9h3v1.3h-3zM1998 222.9h5v1.3h-5zM2005 222.9h2v1.3h-2zM2008 222.9h3v1.3h-3zM2012 222.9h4v1.3h-4zM2017 222.9h3v1.3h-3zM1980 224.9h8v1.3h-8zM1989 224.9h2v1.3h-2zM1992 224.9h2v1.3h-2zM1996 224.9h3v1.3h-3zM2000 224.9h1v1.3h-1zM2003 224.9h6v1.3h-6zM2011 224.9h11v1.3h-11zM2024 224.9h1v1.3h-1zM2027 224.9h1v1.3h-1zM2030 224.9h6v1.3h-6zM2038 224.9h6v1.3h-6zM2046 224.9h1v1.3h-1zM1980 226.9h2v1.3h-2zM1975 232.9h6v1.3h-6zM1983 232.9h3v1.3h-3zM1988 232.9h5v1.3h-5zM1994 232.9h6v1.3h-6zM2001 232.9h4v1.3h-4zM2006 232.9h7v1.3h-7zM2014 232.9h3v1.3h-3zM1981 234.9h7v1.3h-7zM1977 236.9h4v1.3h-4zM1971 240.9h3v1.3h-3zM1976 240.9h4v1.3h-4zM1982 240.9h6v1.3h-6zM1990 240.9h7v1.3h-7zM1999 240.9h3v1.3h-3zM2004 240.9h2v1.3h-2zM2007 240.9h1v1.3h-1zM1976 242.9h6v1.3h-6zM1978 246.9h6v1.3h-6zM1995 248.9h3v1.3h-3zM2000 248.9h6v1.3h-6zM2008 248.9h3v1.3h-3zM2013 248.9h3v1.3h-3zM2017 248.9h5v1.3h-5zM2024 248.9h3v1.3h-3zM1985 250.9h6v1.3h-6zM1993 250.9h3v1.3h-3zM1998 250.9h1v1.3h-1zM1962 254.9h7v1.3h-7zM1971 254.9h5v1.3h-5zM1978 254.9h6v1.3h-6zM1986 254.9h2v1.3h-2zM1989 254.9h3v1.3h-3zM1993 254.9h3v1.3h-3zM1982 259.0h3v1.3h-3zM1987 259.0h2v1.3h-2zM1990 259.0h3v1.3h-3zM1994 259.0h4v1.3h-4zM1999 259.0h2v1.3h-2zM1967 263.0h2v1.3h-2zM1974 265.0h1v1.3h-1zM1977 265.0h6v1.3h-6zM1973 267.0h5v1.3h-5zM1980 267.0h1v1.3h-1zM1969 269.0h4v1.3h-4zM1972 271.0h5v1.3h-5zM1978 271.0h1v1.3h-1zM1972 273.0h6v1.3h-6zM1974 275.0h6v1.3h-6zM1989 277.0h6v1.3h-6zM1997 277.0h3v1.3h-3zM2002 277.0h4v1.3h-4zM2008 277.0h5v1.3h-5zM2014 277.0h6v1.3h-6zM2021 277.0h3v1.3h-3zM2026 277.0h5v1.3h-5zM2032 277.0h3v1.3h-3zM1974 281.0h1v1.3h-1zM1977 281.0h4v1.3h-4zM1971 287.0h4v1.3h-4zM1977 287.0h3v1.3h-3zM1982 287.0h7v1.3h-7zM1991 287.0h1v1.3h-1zM1994 287.0h7v1.3h-7zM2003 287.0h6v1.3h-6zM1981 289.0h5v1.3h-5zM1988 289.0h4v1.3h-4zM1980 291.0h2v1.3h-2zM1983 291.0h3v1.3h-3zM1987 291.0h4v1.3h-4zM1971 295.0h7v1.3h-7zM1980 295.0h3v1.3h-3zM1985 295.0h3v1.3h-3zM1989 295.0h5v1.3h-5zM1996 295.0h5v1.3h-5zM1976 297.0h4v1.3h-4zM1981 299.0h6v1.3h-6zM1989 299.0h3v1.3h-3zM1975 305.0h6v1.3h-6zM1983 305.0h7v1.3h-7zM1992 305.0h6v1.3h-6zM2000 305.0h3v1.3h-3zM2004 305.0h3v1.3h-3zM1986 307.0h3v1.3h-3zM1990 307.0h5v1.3h-5zM1997 307.0h2v1.3h-2zM1987 309.0h5v1.3h-5zM1994 309.0h6v1.3h-6zM1995 311.0h7v1.3h-7zM2004 311.0h5v1.3h-5zM2010 311.0h6v1.3h-6zM1975 315.0h3v1.3h-3zM1980 315.0h3v1.3h-3zM1985 315.0h1v1.3h-1zM1988 315.0h6v1.3h-6zM1996 315.0h5v1.3h-5zM1989 317.0h3v1.3h-3zM1994 317.0h6v1.3h-6zM2002 317.0h3v1.3h-3zM1975 323.0h3v1.3h-3zM1980 323.0h6v1.3h-6zM1988 323.0h6v1.3h-6zM1996 323.0h3v1.3h-3zM2001 323.0h6v1.3h-6zM2009 323.0h3v1.3h-3zM1980 325.0h4v1.3h-4zM1986 325.0h1v1.3h-1zM1980 327.0h3v1.3h-3zM1985 327.0h1v1.3h-1zM1975 331.0h7v1.3h-7zM1984 331.0h7v1.3h-7zM1993 331.0h3v1.3h-3zM1998 331.0h6v1.3h-6zM2006 331.0h2v1.3h-2zM1994 333.0h3v1.3h-3zM1999 333.0h7v1.3h-7zM2008 333.0h4v1.3h-4zM1962 339.0h6v1.3h-6zM1970 339.0h5v1.3h-5zM1976 339.0h6v1.3h-6zM1983 339.0h3v1.3h-3zM1988 339.0h6v1.3h-6zM1996 339.0h3v1.3h-3zM2001 339.0h4v1.3h-4zM1982 343.0h3v1.3h-3zM1987 343.0h6v1.3h-6zM1995 343.0h6v1.3h-6zM1967 347.0h2v1.3h-2zM1979 349.0h3v1.3h-3zM1983 349.0h5v1.3h-5zM1990 349.0h2v1.3h-2zM1977 351.0h2v1.3h-2zM1980 351.0h3v1.3h-3zM1984 351.0h4v1.3h-4zM1973 353.0h6v1.3h-6zM1969 355.0h3v1.3h-3zM1972 357.0h6v1.3h-6zM1972 359.0h2v1.3h-2zM1975 359.0h3v1.3h-3zM1974 361.0h7v1.3h-7zM1989 363.0h4v1.3h-4zM1995 363.0h3v1.3h-3zM1999 363.0h5v1.3h-5zM2006 363.0h6v1.3h-6zM2014 363.0h3v1.3h-3zM2018 363.0h5v1.3h-5zM2025 363.0h3v1.3h-3zM2030 363.0h2v1.3h-2zM2033 363.0h2v1.3h-2zM1974 367.0h6v1.3h-6zM1982 367.0h1v1.3h-1zM1971 373.0h4v1.3h-4zM1977 373.0h6v1.3h-6zM1985 373.0h6v1.3h-6zM1993 373.0h2v1.3h-2zM1996 373.0h3v1.3h-3zM2000 373.0h4v1.3h-4zM2005 373.0h3v1.3h-3zM2010 373.0h1v1.3h-1zM1981 375.0h5v1.3h-5zM1987 375.0h5v1.3h-5zM1980 377.0h6v1.3h-6zM1988 377.0h1v1.3h-1zM1971 381.0h4v1.3h-4zM1977 381.0h5v1.3h-5zM1984 381.0h5v1.3h-5zM1991 381.0h3v1.3h-3zM1996 381.0h5v1.3h-5zM1976 383.0h1v1.3h-1zM1979 383.0h3v1.3h-3zM1981 385.0h7v1.3h-7zM1990 385.0h3v1.3h-3zM1975 391.0h3v1.3h-3zM1980 391.0h6v1.3h-6zM1988 391.0h6v1.3h-6zM1996 391.0h6v1.3h-6zM2004 391.0h3v1.3h-3zM1986 393.0h6v1.3h-6zM1994 393.0h2v1.3h-2zM1997 393.0h2v1.3h-2zM1987 395.0h5v1.3h-5zM1993 395.0h6v1.3h-6zM1995 397.0h3v1.3h-3zM2000 397.0h7v1.3h-7zM2009 397.0h1v1.3h-1zM2012 397.0h4v1.3h-4zM1975 403.0h5v1.3h-5zM1982 403.0h3v1.3h-3zM1987 403.0h3v1.3h-3zM1992 403.0h6v1.3h-6zM2000 403.0h3v1.3h-3zM2005 403.0h5v1.3h-5zM2011 403.0h1v1.3h-1zM1980 405.0h3v1.3h-3zM1985 405.0h2v1.3h-2zM1980 407.0h3v1.3h-3zM1984 407.0h2v1.3h-2zM1975 411.0h2v1.3h-2zM1978 411.0h3v1.3h-3zM1982 411.0h4v1.3h-4zM1987 411.0h3v1.3h-3zM1992 411.0h6v1.3h-6zM2000 411.0h3v1.3h-3zM2005 411.0h6v1.3h-6zM2013 411.0h1v1.3h-1zM2016 411.0h1v1.3h-1zM1994 413.0h2v1.3h-2zM1997 413.0h3v1.3h-3zM2001 413.0h4v1.3h-4zM2006 413.0h3v1.3h-3zM2011 413.0h3v1.3h-3zM1962 417.0h1v1.3h-1zM1965 417.0h3v1.3h-3zM1970 417.0h3v1.3h-3zM1974 417.0h5v1.3h-5zM1981 417.0h6v1.3h-6zM1989 417.0h2v1.3h-2zM1992 417.0h3v1.3h-3zM1996 417.0h4v1.3h-4zM2001 417.0h1v1.3h-1zM1982 421.0h1v1.3h-1zM1985 421.0h5v1.3h-5zM1991 421.0h6v1.3h-6zM1998 421.0h3v1.3h-3zM1974 425.0h7v1.3h-7zM1970 427.0h3v1.3h-3zM1969 435.0h3v1.3h-3zM1973 435.0h5v1.3h-5zM1980 435.0h6v1.3h-6zM1988 435.0h6v1.3h-6zM1996 435.0h3v1.3h-3zM2001 435.0h5v1.3h-5zM1978 437.0h6v1.3h-6zM1986 437.0h2v1.3h-2zM1978 439.0h7v1.3h-7zM1987 439.0h1v1.3h-1zM1976 441.0h6v1.3h-6zM1984 441.0h1v1.3h-1zM1969 445.0h1v1.3h-1zM1972 445.0h1v1.3h-1zM1975 445.0h6v1.3h-6zM1983 445.0h6v1.3h-6zM1991 445.0h5v1.3h-5zM1997 445.0h6v1.3h-6zM2004 445.0h3v1.3h-3zM2009 445.0h4v1.3h-4zM1977 447.0h6v1.3h-6zM1985 447.0h2v1.3h-2zM1990 449.0h3v1.3h-3zM1995 449.0h5v1.3h-5zM2002 449.0h6v1.3h-6zM2010 449.0h3v1.3h-3zM1962 453.0h6v1.3h-6zM1970 453.0h6v1.3h-6zM1978 453.0h6v1.3h-6zM1986 453.0h3v1.3h-3zM1991 453.0h3v1.3h-3zM1982 457.0h5v1.3h-5zM1989 457.0h6v1.3h-6zM1997 457.0h3v1.3h-3zM1973 463.0h4v1.3h-4zM1979 463.0h2v1.3h-2zM1969 465.0h4v1.3h-4zM1972 467.0h5v1.3h-5zM1978 467.0h1v1.3h-1zM1972 469.0h6v1.3h-6zM1974 471.0h3v1.3h-3zM1979 471.0h3v1.3h-3zM1975 475.0h5v1.3h-5zM1982 475.0h2v1.3h-2zM1976 477.0h2v1.3h-2zM1979 477.0h3v1.3h-3zM1983 477.0h3v1.3h-3zM1971 481.0h5v1.3h-5zM1978 481.0h6v1.3h-6zM1986 481.0h7v1.3h-7zM1995 481.0h6v1.3h-6zM2003 481.0h6v1.3h-6zM2011 481.0h3v1.3h-3zM2016 481.0h3v1.3h-3zM1971 487.0h2v1.3h-2zM1974 487.0h3v1.3h-3zM1978 487.0h4v1.3h-4zM1983 487.0h3v1.3h-3zM1988 487.0h3v1.3h-3zM1993 487.0h3v1.3h-3zM1997 487.0h5v1.3h-5zM2004 487.0h1v1.3h-1zM2007 487.0h1v1.3h-1zM1985 489.0h3v1.3h-3zM1990 489.0h6v1.3h-6zM1998 489.0h2v1.3h-2zM1982 491.0h2v1.3h-2zM1985 491.0h3v1.3h-3zM1989 491.0h4v1.3h-4zM1994 491.0h1v1.3h-1zM1983 493.0h6v1.3h-6zM1991 493.0h6v1.3h-6zM1975 497.0h4v1.3h-4zM1981 497.0h6v1.3h-6zM1989 497.0h6v1.3h-6zM1997 497.0h5v1.3h-5zM2004 497.0h3v1.3h-3zM2009 497.0h4v1.3h-4zM2015 497.0h2v1.3h-2zM1981 501.0h3v1.3h-3zM1985 501.0h4v1.3h-4zM1975 505.0h7v1.3h-7zM1984 505.0h3v1.3h-3zM1989 505.0h1v1.3h-1zM1992 505.0h5v1.3h-5zM1999 505.0h5v1.3h-5zM2006 505.0h3v1.3h-3zM1977 509.0h4v1.3h-4zM1975 513.0h5v1.3h-5zM1981 513.0h6v1.3h-6zM1988 513.0h3v1.3h-3zM1993 513.0h5v1.3h-5zM1999 513.0h6v1.3h-6zM2006 513.0h3v1.3h-3zM2011 513.0h3v1.3h-3zM1980 517.0h6v1.3h-6zM1962 521.0h6v1.3h-6zM1970 521.0h4v1.3h-4zM1976 521.0h3v1.3h-3zM1981 521.0h6v1.3h-6zM1989 521.0h2v1.3h-2zM1992 521.0h3v1.3h-3zM1996 521.0h4v1.3h-4zM2001 521.0h3v1.3h-3zM1982 525.0h4v1.3h-4zM1988 525.0h3v1.3h-3zM1993 525.0h6v1.3h-6zM1973 531.0h3v1.3h-3zM1978 531.0h3v1.3h-3zM1979 533.0h3v1.3h-3zM1984 533.0h3v1.3h-3zM1989 533.0h3v1.3h-3zM1969 535.0h3v1.3h-3zM1972 537.0h6v1.3h-6zM1972 539.0h6v1.3h-6zM1974 541.0h3v1.3h-3zM1978 541.0h4v1.3h-4zM1975 545.0h7v1.3h-7zM1976 547.0h3v1.3h-3zM1981 547.0h5v1.3h-5zM1971 551.0h3v1.3h-3zM1975 551.0h5v1.3h-5zM1982 551.0h3v1.3h-3zM1987 551.0h6v1.3h-6zM1995 551.0h6v1.3h-6zM2003 551.0h1v1.3h-1zM2006 551.0h4v1.3h-4zM2012 551.0h4v1.3h-4zM2018 551.0h1v1.3h-1zM1971 557.0h3v1.3h-3zM1976 557.0h6v1.3h-6zM1984 557.0h4v1.3h-4zM1990 557.0h6v1.3h-6zM1998 557.0h3v1.3h-3zM2002 557.0h5v1.3h-5zM1982 559.0h3v1.3h-3zM1987 559.0h6v1.3h-6zM1983 561.0h3v1.3h-3zM1988 561.0h2v1.3h-2zM1991 561.0h3v1.3h-3zM1995 561.0h2v1.3h-2zM1975 565.0h5v1.3h-5zM1981 565.0h6v1.3h-6zM1988 565.0h3v1.3h-3zM1993 565.0h6v1.3h-6zM2001 565.0h7v1.3h-7zM2010 565.0h3v1.3h-3zM2015 565.0h2v1.3h-2zM1981 569.0h6v1.3h-6zM1975 573.0h3v1.3h-3zM1980 573.0h7v1.3h-7zM1989 573.0h7v1.3h-7zM1998 573.0h1v1.3h-1zM2001 573.0h1v1.3h-1zM2004 573.0h1v1.3h-1zM2007 573.0h6v1.3h-6zM2015 573.0h2v1.3h-2zM1977 577.0h4v1.3h-4zM1975 581.0h7v1.3h-7zM1984 581.0h1v1.3h-1zM1987 581.0h4v1.3h-4zM1993 581.0h1v1.3h-1zM1996 581.0h6v1.3h-6zM2004 581.0h6v1.3h-6zM2012 581.0h2v1.3h-2zM1980 585.0h6v1.3h-6zM1962 589.0h3v1.3h-3zM1967 589.0h6v1.3h-6zM1975 589.0h6v1.3h-6zM1983 589.0h7v1.3h-7zM1992 589.0h2v1.3h-2zM1982 593.0h6v1.3h-6zM1990 593.0h3v1.3h-3zM1995 593.0h1v1.3h-1zM1998 593.0h3v1.3h-3zM1972 597.0h6v1.3h-6zM1985 599.0h6v1.3h-6zM1993 599.0h5v1.3h-5zM1999 599.0h6v1.3h-6zM1969 607.0h6v1.3h-6zM1977 607.0h2v1.3h-2zM1980 607.0h3v1.3h-3zM1984 607.0h4v1.3h-4zM1989 607.0h3v1.3h-3zM1994 607.0h6v1.3h-6zM2002 607.0h7v1.3h-7zM2011 607.0h2v1.3h-2zM1976 609.0h6v1.3h-6zM1984 609.0h1v1.3h-1zM1977 611.0h6v1.3h-6zM1985 611.0h1v1.3h-1zM1969 615.0h6v1.3h-6zM1977 615.0h6v1.3h-6zM1985 615.0h3v1.3h-3zM1991 617.0h5v1.3h-5zM1997 617.0h6v1.3h-6zM2004 617.0h3v1.3h-3zM2009 617.0h2v1.3h-2zM2012 617.0h3v1.3h-3zM2016 617.0h4v1.3h-4zM2021 617.0h3v1.3h-3zM2026 617.0h5v1.3h-5zM1973 621.0h6v1.3h-6zM1981 621.0h2v1.3h-2zM1984 621.0h3v1.3h-3zM1988 621.0h4v1.3h-4zM1993 621.0h3v1.3h-3zM1998 621.0h4v1.3h-4zM2004 621.0h3v1.3h-3zM2009 621.0h6v1.3h-6zM1981 623.0h3v1.3h-3zM1986 623.0h6v1.3h-6zM1985 625.0h3v1.3h-3zM1990 625.0h5v1.3h-5zM1997 625.0h3v1.3h-3zM1962 629.0h5v1.3h-5zM1968 629.0h6v1.3h-6zM1975 629.0h3v1.3h-3zM1980 629.0h7v1.3h-7zM1989 629.0h7v1.3h-7zM1998 629.0h6v1.3h-6zM1979 633.0h3v1.3h-3zM1983 633.0h5v1.3h-5zM1990 633.0h5v1.3h-5zM1975 643.0h3v1.3h-3zM1980 643.0h3v1.3h-3zM1981 645.0h1v1.3h-1zM1984 645.0h6v1.3h-6zM1992 645.0h3v1.3h-3zM1971 649.0h4v1.3h-4zM1977 649.0h5v1.3h-5zM1983 649.0h6v1.3h-6zM1990 649.0h3v1.3h-3zM1995 649.0h3v1.3h-3zM1999 649.0h5v1.3h-5zM2006 649.0h7v1.3h-7zM2015 649.0h4v1.3h-4zM1983 655.0h6v1.3h-6zM1991 655.0h4v1.3h-4zM1984 657.0h6v1.3h-6zM1992 657.0h5v1.3h-5zM1980 659.0h3v1.3h-3zM1985 659.0h3v1.3h-3zM1976 661.0h3v1.3h-3zM1971 667.0h3v1.3h-3zM1975 667.0h5v1.3h-5zM1982 667.0h6v1.3h-6zM1990 667.0h6v1.3h-6zM1998 667.0h1v1.3h-1zM1983 669.0h3v1.3h-3zM1988 669.0h6v1.3h-6zM1971 673.0h3v1.3h-3zM1976 673.0h6v1.3h-6zM1984 673.0h4v1.3h-4zM1990 673.0h6v1.3h-6zM1998 673.0h1v1.3h-1zM2001 673.0h1v1.3h-1zM2004 673.0h3v1.3h-3zM2008 673.0h5v1.3h-5zM2015 673.0h4v1.3h-4zM1984 679.0h1v1.3h-1zM1987 679.0h4v1.3h-4zM1993 679.0h3v1.3h-3zM1962 683.0h6v1.3h-6zM1970 683.0h3v1.3h-3zM1975 683.0h3v1.3h-3zM1979 683.0h5v1.3h-5zM1986 683.0h3v1.3h-3zM1991 683.0h5v1.3h-5zM1979 687.0h6v1.3h-6zM1987 687.0h6v1.3h-6zM1975 697.0h6v1.3h-6zM1983 697.0h1v1.3h-1zM1981 699.0h6v1.3h-6zM1989 699.0h5v1.3h-5zM1995 699.0h1v1.3h-1zM1971 703.0h3v1.3h-3zM1975 703.0h5v1.3h-5zM1982 703.0h3v1.3h-3zM1986 703.0h5v1.3h-5zM1993 703.0h6v1.3h-6zM2001 703.0h6v1.3h-6zM2009 703.0h7v1.3h-7zM2018 703.0h1v1.3h-1zM1983 709.0h3v1.3h-3zM1987 709.0h5v1.3h-5zM1994 709.0h1v1.3h-1zM1984 711.0h3v1.3h-3zM1989 711.0h5v1.3h-5zM1995 711.0h2v1.3h-2zM1976 713.0h4v1.3h-4zM1976 715.0h2v1.3h-2zM1979 715.0h1v1.3h-1zM1971 721.0h7v1.3h-7zM1980 721.0h4v1.3h-4zM1986 721.0h2v1.3h-2zM1989 721.0h3v1.3h-3zM1993 721.0h4v1.3h-4zM1998 721.0h2v1.3h-2zM1979 723.0h2v1.3h-2zM1982 723.0h3v1.3h-3zM1986 723.0h2v1.3h-2zM1971 725.0h3v1.3h-3zM1975 725.0h5v1.3h-5zM1982 725.0h1v1.3h-1zM1985 725.0h3v1.3h-3zM1989 725.0h5v1.3h-5zM1996 725.0h6v1.3h-6zM2004 725.0h7v1.3h-7zM2013 725.0h6v1.3h-6zM1980 731.0h3v1.3h-3zM1985 731.0h3v1.3h-3zM1962 735.0h6v1.3h-6zM1970 735.0h3v1.3h-3zM1975 735.0h2v1.3h-2zM1978 735.0h3v1.3h-3zM1982 735.0h4v1.3h-4zM1987 735.0h3v1.3h-3zM1992 735.0h6v1.3h-6zM2000 735.0h3v1.3h-3zM1982 739.0h1v1.3h-1zM1985 739.0h5v1.3h-5zM1991 739.0h6v1.3h-6zM1998 739.0h3v1.3h-3zM1971 755.0h7v1.3h-7zM1980 755.0h5v1.3h-5zM1986 755.0h6v1.3h-6zM1993 755.0h3v1.3h-3zM1998 755.0h1v1.3h-1zM2001 755.0h5v1.3h-5zM1985 757.0h4v1.3h-4zM1991 757.0h7v1.3h-7zM1975 763.0h2v1.3h-2zM1978 763.0h3v1.3h-3zM1982 763.0h4v1.3h-4zM1987 763.0h3v1.3h-3zM1992 763.0h6v1.3h-6zM2000 763.0h7v1.3h-7zM2009 763.0h7v1.3h-7zM2018 763.0h1v1.3h-1zM1985 765.0h3v1.3h-3zM1990 765.0h2v1.3h-2zM1993 765.0h3v1.3h-3zM1979 767.0h1v1.3h-1zM1982 767.0h2v1.3h-2zM1975 771.0h5v1.3h-5zM1981 771.0h6v1.3h-6zM1988 771.0h3v1.3h-3zM1993 771.0h7v1.3h-7zM2002 771.0h3v1.3h-3zM2007 771.0h6v1.3h-6zM2015 771.0h6v1.3h-6zM1984 777.0h6v1.3h-6zM1979 781.0h3v1.3h-3zM1984 781.0h4v1.3h-4zM1971 785.0h2v1.3h-2zM1974 785.0h3v1.3h-3zM1978 785.0h4v1.3h-4zM1983 785.0h3v1.3h-3zM1988 785.0h4v1.3h-4zM1993 787.0h5v1.3h-5zM1999 787.0h6v1.3h-6zM2006 787.0h3v1.3h-3zM2011 787.0h3v1.3h-3zM2016 787.0h1v1.3h-1zM1971 791.0h5v1.3h-5zM1977 791.0h6v1.3h-6zM1984 791.0h3v1.3h-3zM1989 791.0h6v1.3h-6zM1997 791.0h7v1.3h-7zM2006 791.0h6v1.3h-6zM2014 791.0h4v1.3h-4zM1990 797.0h6v1.3h-6zM1998 797.0h6v1.3h-6zM2006 797.0h3v1.3h-3zM1975 799.0h3v1.3h-3zM1976 801.0h4v1.3h-4zM1976 803.0h3v1.3h-3zM1971 807.0h5v1.3h-5zM1977 807.0h6v1.3h-6zM1984 807.0h3v1.3h-3zM1989 807.0h5v1.3h-5zM1995 807.0h6v1.3h-6zM1993 809.0h4v1.3h-4zM1999 809.0h2v1.3h-2zM2002 809.0h3v1.3h-3zM2006 809.0h4v1.3h-4zM2011 809.0h3v1.3h-3zM2016 809.0h6v1.3h-6zM2024 809.0h4v1.3h-4zM1981 811.0h3v1.3h-3zM1986 811.0h3v1.3h-3zM1991 811.0h1v1.3h-1zM1962 815.0h5v1.3h-5zM1969 815.0h6v1.3h-6zM1977 815.0h6v1.3h-6zM1985 815.0h4v1.3h-4zM1991 815.0h6v1.3h-6zM1999 815.0h3v1.3h-3zM1979 819.0h1v1.3h-1zM1982 819.0h5v1.3h-5zM1989 819.0h3v1.3h-3zM1993 819.0h2v1.3h-2zM1975 829.0h6v1.3h-6zM1983 829.0h1v1.3h-1zM1981 831.0h6v1.3h-6zM1989 831.0h7v1.3h-7zM1971 835.0h2v1.3h-2zM1974 835.0h3v1.3h-3zM1978 835.0h4v1.3h-4zM1983 835.0h3v1.3h-3zM1988 835.0h1v1.3h-1zM1991 835.0h3v1.3h-3zM1995 835.0h5v1.3h-5zM2002 835.0h5v1.3h-5zM2009 835.0h3v1.3h-3zM2013 835.0h5v1.3h-5zM1983 841.0h6v1.3h-6zM1991 841.0h3v1.3h-3zM1984 843.0h3v1.3h-3zM1988 843.0h5v1.3h-5zM1995 843.0h2v1.3h-2zM1977 845.0h3v1.3h-3zM1982 845.0h1v1.3h-1zM1976 847.0h3v1.3h-3zM1971 853.0h3v1.3h-3zM1976 853.0h7v1.3h-7zM1985 853.0h3v1.3h-3zM1989 853.0h5v1.3h-5zM1996 853.0h4v1.3h-4zM1982 855.0h2v1.3h-2zM1985 855.0h3v1.3h-3zM1989 855.0h4v1.3h-4zM1971 859.0h4v1.3h-4zM1977 859.0h7v1.3h-7zM1986 859.0h5v1.3h-5zM1993 859.0h1v1.3h-1zM1996 859.0h6v1.3h-6zM2004 859.0h6v1.3h-6zM2012 859.0h6v1.3h-6zM1976 865.0h5v1.3h-5zM1962 869.0h3v1.3h-3zM1967 869.0h2v1.3h-2zM1970 869.0h3v1.3h-3zM1974 869.0h4v1.3h-4zM1979 869.0h3v1.3h-3zM1984 869.0h6v1.3h-6zM1992 869.0h5v1.3h-5zM1998 869.0h6v1.3h-6zM2005 869.0h3v1.3h-3zM1986 873.0h3v1.3h-3zM1991 873.0h3v1.3h-3zM1996 873.0h3v1.3h-3zM2001 873.0h4v1.3h-4zM2007 873.0h1v1.3h-1zM1988 881.0h5v1.3h-5zM1995 881.0h6v1.3h-6zM2003 881.0h6v1.3h-6zM1989 883.0h3v1.3h-3zM1994 883.0h7v1.3h-7zM2003 883.0h7v1.3h-7zM2012 883.0h6v1.3h-6zM2020 883.0h6v1.3h-6zM2028 883.0h6v1.3h-6zM2036 883.0h7v1.3h-7zM2045 883.0h2v1.3h-2zM2048 883.0h3v1.3h-3zM2052 883.0h4v1.3h-4zM2057 883.0h3v1.3h-3zM2062 883.0h6v1.3h-6zM2070 883.0h5v1.3h-5zM1971 885.0h6v1.3h-6zM1991 889.0h5v1.3h-5zM1998 889.0h3v1.3h-3zM2003 889.0h6v1.3h-6zM2011 889.0h3v1.3h-3zM2016 889.0h3v1.3h-3zM2021 889.0h6v1.3h-6zM1973 891.0h6v1.3h-6zM1975 893.0h5v1.3h-5zM1982 893.0h1v1.3h-1zM1981 895.0h5v1.3h-5zM1988 895.0h4v1.3h-4zM1982 897.0h2v1.3h-2zM1985 897.0h3v1.3h-3zM1989 897.0h4v1.3h-4zM1994 897.0h2v1.3h-2zM1962 901.0h7v1.3h-7zM1971 901.0h3v1.3h-3zM1976 901.0h3v1.3h-3zM1981 901.0h3v1.3h-3zM1986 901.0h5v1.3h-5zM1992 901.0h6v1.3h-6zM1999 901.0h3v1.3h-3zM2004 901.0h3v1.3h-3zM2009 901.0h1v1.3h-1zM1982 905.0h3v1.3h-3zM1986 905.0h5v1.3h-5zM1993 905.0h6v1.3h-6zM1975 913.0h6v1.3h-6zM1989 917.0h3v1.3h-3zM1994 917.0h5v1.3h-5zM2000 917.0h6v1.3h-6zM2007 917.0h3v1.3h-3zM2012 917.0h6v1.3h-6zM2020 917.0h6v1.3h-6zM2028 917.0h1v1.3h-1zM2031 917.0h2v1.3h-2zM1975 919.0h3v1.3h-3zM1979 919.0h5v1.3h-5zM1971 923.0h7v1.3h-7zM1980 923.0h1v1.3h-1zM1983 923.0h1v1.3h-1zM1986 923.0h5v1.3h-5zM1993 923.0h6v1.3h-6zM2001 923.0h6v1.3h-6zM2009 923.0h3v1.3h-3zM2014 923.0h1v1.3h-1zM1976 925.0h1v1.3h-1zM1979 925.0h3v1.3h-3zM1974 927.0h3v1.3h-3zM1971 931.0h6v1.3h-6zM1979 931.0h4v1.3h-4zM1985 931.0h3v1.3h-3zM1990 931.0h7v1.3h-7zM1999 931.0h6v1.3h-6zM2007 931.0h3v1.3h-3zM1974 933.0h1v1.3h-1zM1977 933.0h2v1.3h-2zM1985 937.0h4v1.3h-4zM1991 937.0h3v1.3h-3zM1996 937.0h3v1.3h-3zM1979 939.0h3v1.3h-3zM1984 939.0h3v1.3h-3zM1971 943.0h4v1.3h-4zM1977 943.0h6v1.3h-6zM1985 943.0h2v1.3h-2zM1988 943.0h3v1.3h-3zM1992 943.0h4v1.3h-4zM1997 943.0h3v1.3h-3zM2002 943.0h3v1.3h-3zM2007 943.0h3v1.3h-3zM2012 943.0h7v1.3h-7zM1992 945.0h7v1.3h-7zM2001 945.0h6v1.3h-6zM2009 945.0h5v1.3h-5zM1993 947.0h3v1.3h-3zM1998 947.0h6v1.3h-6zM2006 947.0h3v1.3h-3zM2011 947.0h2v1.3h-2zM2014 947.0h3v1.3h-3zM2018 947.0h4v1.3h-4zM2023 947.0h3v1.3h-3zM2028 947.0h6v1.3h-6zM2036 947.0h3v1.3h-3zM2040 947.0h5v1.3h-5zM2047 947.0h5v1.3h-5zM2053 947.0h6v1.3h-6zM2060 947.0h3v1.3h-3zM2065 947.0h7v1.3h-7zM2074 947.0h1v1.3h-1zM1975 949.0h5v1.3h-5zM1980 951.0h5v1.3h-5zM1987 951.0h3v1.3h-3z"/><path fill="#0451a5" fill-opacity="0.33" d="M1968 158.9h1v1.3h-1zM1979 158.9h1v1.3h-1zM1987 158.9h1v1.3h-1zM1971 162.9h1v1.3h-1zM1976 162.9h1v1.3h-1zM1982 164.9h2v1.3h-2zM1985 164.9h1v1.3h-1zM1996 164.9h1v1.3h-1zM2007 164.9h2v1.3h-2zM2010 164.9h2v1.3h-2zM2013 164.9h1v1.3h-1zM2015 164.9h2v1.3h-2zM2024 164.9h1v1.3h-1zM2031 164.9h1v1.3h-1zM2033 164.9h1v1.3h-1zM2039 164.9h1v1.3h-1zM2049 164.9h3v1.3h-3zM1968 172.9h1v1.3h-1zM1979 172.9h1v1.3h-1zM1987 172.9h1v1.3h-1zM1971 176.9h1v1.3h-1zM1977 176.9h1v1.3h-1zM1985 176.9h1v1.3h-1zM1990 176.9h1v1.3h-1zM1997 176.9h1v1.3h-1zM1990 180.9h1v1.3h-1zM1994 180.9h1v1.3h-1zM1996 180.9h1v1.3h-1zM2004 180.9h1v1.3h-1zM2017 180.9h1v1.3h-1zM2020 180.9h2v1.3h-2zM2023 180.9h1v1.3h-1zM2031 180.9h1v1.3h-1zM2039 180.9h1v1.3h-1zM2042 180.9h2v1.3h-2zM1983 186.9h1v1.3h-1zM1996 186.9h1v1.3h-1zM2004 186.9h1v1.3h-1zM2009 186.9h1v1.3h-1zM2001 188.9h1v1.3h-1zM2007 188.9h1v1.3h-1zM2016 188.9h1v1.3h-1zM1977 196.9h1v1.3h-1zM1983 196.9h1v1.3h-1zM1991 196.9h1v1.3h-1zM1996 196.9h1v1.3h-1zM2003 196.9h1v1.3h-1zM1986 198.9h1v1.3h-1zM1990 198.9h1v1.3h-1zM2003 198.9h1v1.3h-1zM1980 200.9h1v1.3h-1zM1984 200.9h1v1.3h-1zM1991 200.9h1v1.3h-1zM1968 204.9h1v1.3h-1zM1979 204.9h1v1.3h-1zM1987 204.9h1v1.3h-1zM1971 208.9h1v1.3h-1zM1976 208.9h1v1.3h-1zM1983 214.9h1v1.3h-1zM1996 214.9h1v1.3h-1zM2004 214.9h1v1.3h-1zM2009 214.9h1v1.3h-1zM2001 216.9h1v1.3h-1zM2007 216.9h1v1.3h-1zM2016 216.9h1v1.3h-1zM1977 222.9h1v1.3h-1zM1983 222.9h1v1.3h-1zM1991 222.9h1v1.3h-1zM1996 222.9h1v1.3h-1zM2003 222.9h1v1.3h-1zM1995 224.9h1v1.3h-1zM1999 224.9h1v1.3h-1zM2001 224.9h1v1.3h-1zM2009 224.9h1v1.3h-1zM2022 224.9h1v1.3h-1zM2025 224.9h2v1.3h-2zM2028 224.9h1v1.3h-1zM2036 224.9h1v1.3h-1zM2044 224.9h1v1.3h-1zM2047 224.9h2v1.3h-2zM1981 232.9h1v1.3h-1zM1986 232.9h1v1.3h-1zM1979 234.9h1v1.3h-1zM1974 240.9h1v1.3h-1zM1980 240.9h1v1.3h-1zM1988 240.9h1v1.3h-1zM1997 240.9h1v1.3h-1zM2002 240.9h1v1.3h-1zM1982 242.9h1v1.3h-1zM1998 248.9h1v1.3h-1zM2006 248.9h1v1.3h-1zM2011 248.9h1v1.3h-1zM2022 248.9h1v1.3h-1zM1991 250.9h1v1.3h-1zM1996 250.9h1v1.3h-1zM1969 254.9h1v1.3h-1zM1976 254.9h1v1.3h-1zM1984 254.9h1v1.3h-1zM1985 259.0h1v1.3h-1zM1975 265.0h1v1.3h-1zM1978 267.0h1v1.3h-1zM1980 275.0h1v1.3h-1zM1995 277.0h1v1.3h-1zM2000 277.0h1v1.3h-1zM2006 277.0h1v1.3h-1zM2024 277.0h1v1.3h-1zM1975 281.0h1v1.3h-1zM1981 281.0h1v1.3h-1zM1975 287.0h1v1.3h-1zM1980 287.0h1v1.3h-1zM1989 287.0h1v1.3h-1zM1992 287.0h1v1.3h-1zM2001 287.0h1v1.3h-1zM2009 287.0h1v1.3h-1zM1986 289.0h1v1.3h-1zM1978 295.0h1v1.3h-1zM1983 295.0h1v1.3h-1zM1994 295.0h1v1.3h-1zM1980 297.0h1v1.3h-1zM1987 299.0h1v1.3h-1zM1992 299.0h1v1.3h-1zM1981 305.0h1v1.3h-1zM1990 305.0h1v1.3h-1zM1998 305.0h1v1.3h-1zM1995 307.0h1v1.3h-1zM1992 309.0h1v1.3h-1zM2002 311.0h1v1.3h-1zM1978 315.0h1v1.3h-1zM1983 315.0h1v1.3h-1zM1986 315.0h1v1.3h-1zM1994 315.0h1v1.3h-1zM1992 317.0h1v1.3h-1zM2000 317.0h1v1.3h-1zM1978 323.0h1v1.3h-1zM1986 323.0h1v1.3h-1zM1994 323.0h1v1.3h-1zM1999 323.0h1v1.3h-1zM2007 323.0h1v1.3h-1zM1984 325.0h1v1.3h-1zM1983 327.0h1v1.3h-1zM1982 331.0h1v1.3h-1zM1991 331.0h1v1.3h-1zM1996 331.0h1v1.3h-1zM2004 331.0h1v1.3h-1zM1997 333.0h1v1.3h-1zM2006 333.0h1v1.3h-1zM2012 333.0h1v1.3h-1zM1968 339.0h1v1.3h-1zM1986 339.0h1v1.3h-1zM1994 339.0h1v1.3h-1zM1999 339.0h1v1.3h-1zM1985 343.0h1v1.3h-1zM1993 343.0h1v1.3h-1zM1988 349.0h1v1.3h-1zM1979 353.0h1v1.3h-1zM1972 355.0h1v1.3h-1zM1978 357.0h1v1.3h-1zM1981 361.0h1v1.3h-1zM1993 363.0h1v1.3h-1zM2004 363.0h1v1.3h-1zM2012 363.0h1v1.3h-1zM2023 363.0h1v1.3h-1zM2028 363.0h1v1.3h-1zM1980 367.0h1v1.3h-1zM1975 373.0h1v1.3h-1zM1983 373.0h1v1.3h-1zM1991 373.0h1v1.3h-1zM2008 373.0h1v1.3h-1zM1986 377.0h1v1.3h-1zM1989 377.0h1v1.3h-1zM1975 381.0h1v1.3h-1zM1982 381.0h1v1.3h-1zM1989 381.0h1v1.3h-1zM1994 381.0h1v1.3h-1zM1977 383.0h1v1.3h-1zM1988 385.0h1v1.3h-1zM1978 391.0h1v1.3h-1zM1986 391.0h1v1.3h-1zM1994 391.0h1v1.3h-1zM2002 391.0h1v1.3h-1zM1992 393.0h1v1.3h-1zM1998 397.0h1v1.3h-1zM2007 397.0h1v1.3h-1zM2010 397.0h1v1.3h-1zM1980 403.0h1v1.3h-1zM1985 403.0h1v1.3h-1zM1990 403.0h1v1.3h-1zM1998 403.0h1v1.3h-1zM2003 403.0h1v1.3h-1zM1983 405.0h1v1.3h-1zM1990 411.0h1v1.3h-1zM1998 411.0h1v1.3h-1zM2003 411.0h1v1.3h-1zM2011 411.0h1v1.3h-1zM2014 411.0h1v1.3h-1zM2009 413.0h1v1.3h-1zM1963 417.0h1v1.3h-1zM1968 417.0h1v1.3h-1zM1979 417.0h1v1.3h-1zM1987 417.0h1v1.3h-1zM1983 421.0h1v1.3h-1zM1981 425.0h1v1.3h-1zM1973 427.0h1v1.3h-1zM1978 435.0h1v1.3h-1zM1986 435.0h1v1.3h-1zM1994 435.0h1v1.3h-1zM1999 435.0h1v1.3h-1zM1984 437.0h1v1.3h-1zM1985 439.0h1v1.3h-1zM1982 441.0h1v1.3h-1zM1970 445.0h1v1.3h-1zM1973 445.0h1v1.3h-1zM1981 445.0h1v1.3h-1zM1989 445.0h1v1.3h-1zM2007 445.0h1v1.3h-1zM1983 447.0h1v1.3h-1zM1993 449.0h1v1.3h-1zM2000 449.0h1v1.3h-1zM2008 449.0h1v1.3h-1zM1968 453.0h1v1.3h-1zM1976 453.0h1v1.3h-1zM1984 453.0h1v1.3h-1zM1989 453.0h1v1.3h-1zM1994 453.0h1v1.3h-1zM1987 457.0h1v1.3h-1zM1995 457.0h1v1.3h-1zM1977 463.0h1v1.3h-1zM1977 471.0h1v1.3h-1zM1980 475.0h1v1.3h-1zM1976 481.0h1v1.3h-1zM1984 481.0h1v1.3h-1zM1993 481.0h1v1.3h-1zM2001 481.0h1v1.3h-1zM2009 481.0h1v1.3h-1zM2014 481.0h1v1.3h-1zM1986 487.0h1v1.3h-1zM1991 487.0h1v1.3h-1zM2002 487.0h1v1.3h-1zM2005 487.0h1v1.3h-1zM1988 489.0h1v1.3h-1zM1996 489.0h1v1.3h-1zM1989 493.0h1v1.3h-1zM1979 497.0h1v1.3h-1zM1987 497.0h1v1.3h-1zM1995 497.0h1v1.3h-1zM2002 497.0h1v1.3h-1zM2007 497.0h1v1.3h-1zM2013 497.0h1v1.3h-1zM1982 505.0h1v1.3h-1zM1987 505.0h1v1.3h-1zM1990 505.0h1v1.3h-1zM1997 505.0h1v1.3h-1zM2004 505.0h1v1.3h-1zM1991 513.0h1v1.3h-1zM2009 513.0h1v1.3h-1zM1986 517.0h1v1.3h-1zM1968 521.0h1v1.3h-1zM1974 521.0h1v1.3h-1zM1979 521.0h1v1.3h-1zM1987 521.0h1v1.3h-1zM1986 525.0h1v1.3h-1zM1991 525.0h1v1.3h-1zM1999 525.0h1v1.3h-1zM1976 531.0h1v1.3h-1zM1982 533.0h1v1.3h-1zM1987 533.0h1v1.3h-1zM1972 535.0h1v1.3h-1zM1978 537.0h1v1.3h-1zM1982 545.0h1v1.3h-1zM1979 547.0h1v1.3h-1zM1980 551.0h1v1.3h-1zM1985 551.0h1v1.3h-1zM1993 551.0h1v1.3h-1zM2001 551.0h1v1.3h-1zM2004 551.0h1v1.3h-1zM2010 551.0h1v1.3h-1zM2016 551.0h1v1.3h-1zM1974 557.0h1v1.3h-1zM1982 557.0h1v1.3h-1zM1988 557.0h1v1.3h-1zM1996 557.0h1v1.3h-1zM2007 557.0h1v1.3h-1zM1985 559.0h1v1.3h-1zM1993 559.0h1v1.3h-1zM1986 561.0h1v1.3h-1zM1991 565.0h1v1.3h-1zM1999 565.0h1v1.3h-1zM2008 565.0h1v1.3h-1zM2013 565.0h1v1.3h-1zM1987 569.0h1v1.3h-1zM1978 573.0h1v1.3h-1zM1987 573.0h1v1.3h-1zM1996 573.0h1v1.3h-1zM1999 573.0h1v1.3h-1zM2002 573.0h1v1.3h-1zM2005 573.0h1v1.3h-1zM2013 573.0h1v1.3h-1zM1982 581.0h1v1.3h-1zM1985 581.0h1v1.3h-1zM1991 581.0h1v1.3h-1zM1994 581.0h1v1.3h-1zM2002 581.0h1v1.3h-1zM2010 581.0h1v1.3h-1zM1986 585.0h1v1.3h-1zM1965 589.0h1v1.3h-1zM1973 589.0h1v1.3h-1zM1981 589.0h1v1.3h-1zM1990 589.0h1v1.3h-1zM1988 593.0h1v1.3h-1zM1993 593.0h1v1.3h-1zM1996 593.0h1v1.3h-1zM1991 599.0h1v1.3h-1zM1975 607.0h1v1.3h-1zM1992 607.0h1v1.3h-1zM2000 607.0h1v1.3h-1zM2009 607.0h1v1.3h-1zM1982 609.0h1v1.3h-1zM1983 611.0h1v1.3h-1zM1975 615.0h1v1.3h-1zM1983 615.0h1v1.3h-1zM1988 615.0h1v1.3h-1zM2007 617.0h1v1.3h-1zM2024 617.0h1v1.3h-1zM1979 621.0h1v1.3h-1zM1996 621.0h1v1.3h-1zM2002 621.0h1v1.3h-1zM2007 621.0h1v1.3h-1zM1984 623.0h1v1.3h-1zM1988 625.0h1v1.3h-1zM1995 625.0h1v1.3h-1zM2000 625.0h1v1.3h-1zM1978 629.0h1v1.3h-1zM1987 629.0h1v1.3h-1zM1996 629.0h1v1.3h-1zM1988 633.0h1v1.3h-1zM1978 643.0h1v1.3h-1zM1982 645.0h1v1.3h-1zM1990 645.0h1v1.3h-1zM1995 645.0h1v1.3h-1zM1975 649.0h1v1.3h-1zM1993 649.0h1v1.3h-1zM2004 649.0h1v1.3h-1zM2013 649.0h1v1.3h-1zM1989 655.0h1v1.3h-1zM1990 657.0h1v1.3h-1zM1983 659.0h1v1.3h-1zM1988 659.0h1v1.3h-1zM1979 661.0h1v1.3h-1zM1980 667.0h1v1.3h-1zM1988 667.0h1v1.3h-1zM1996 667.0h1v1.3h-1zM1999 667.0h1v1.3h-1zM1986 669.0h1v1.3h-1zM1994 669.0h1v1.3h-1zM1974 673.0h1v1.3h-1zM1982 673.0h1v1.3h-1zM1988 673.0h1v1.3h-1zM1996 673.0h1v1.3h-1zM1999 673.0h1v1.3h-1zM2002 673.0h1v1.3h-1zM2013 673.0h1v1.3h-1zM1985 679.0h1v1.3h-1zM1991 679.0h1v1.3h-1zM1968 683.0h1v1.3h-1zM1973 683.0h1v1.3h-1zM1984 683.0h1v1.3h-1zM1989 683.0h1v1.3h-1zM1985 687.0h1v1.3h-1zM1993 687.0h1v1.3h-1zM1981 697.0h1v1.3h-1zM1987 699.0h1v1.3h-1zM1980 703.0h1v1.3h-1zM1991 703.0h1v1.3h-1zM1999 703.0h1v1.3h-1zM2007 703.0h1v1.3h-1zM2016 703.0h1v1.3h-1zM1992 709.0h1v1.3h-1zM1987 711.0h1v1.3h-1zM1978 721.0h1v1.3h-1zM1984 721.0h1v1.3h-1zM1980 725.0h1v1.3h-1zM1983 725.0h1v1.3h-1zM1994 725.0h1v1.3h-1zM2002 725.0h1v1.3h-1zM2011 725.0h1v1.3h-1zM1983 731.0h1v1.3h-1zM1968 735.0h1v1.3h-1zM1973 735.0h1v1.3h-1zM1990 735.0h1v1.3h-1zM1998 735.0h1v1.3h-1zM2003 735.0h1v1.3h-1zM1983 739.0h1v1.3h-1zM1978 755.0h1v1.3h-1zM1996 755.0h1v1.3h-1zM1999 755.0h1v1.3h-1zM2006 755.0h1v1.3h-1zM1989 757.0h1v1.3h-1zM1998 757.0h1v1.3h-1zM1990 763.0h1v1.3h-1zM1998 763.0h1v1.3h-1zM2007 763.0h1v1.3h-1zM2016 763.0h1v1.3h-1zM1988 765.0h1v1.3h-1zM1980 767.0h1v1.3h-1zM1991 771.0h1v1.3h-1zM2000 771.0h1v1.3h-1zM2005 771.0h1v1.3h-1zM2013 771.0h1v1.3h-1zM2021 771.0h1v1.3h-1zM1990 777.0h1v1.3h-1zM1982 781.0h1v1.3h-1zM1986 785.0h1v1.3h-1zM2009 787.0h1v1.3h-1zM2014 787.0h1v1.3h-1zM1987 791.0h1v1.3h-1zM1995 791.0h1v1.3h-1zM2004 791.0h1v1.3h-1zM2012 791.0h1v1.3h-1zM2018 791.0h1v1.3h-1zM1996 797.0h1v1.3h-1zM2004 797.0h1v1.3h-1zM1979 803.0h1v1.3h-1zM1987 807.0h1v1.3h-1zM1997 809.0h1v1.3h-1zM2014 809.0h1v1.3h-1zM2022 809.0h1v1.3h-1zM1984 811.0h1v1.3h-1zM1989 811.0h1v1.3h-1zM1967 815.0h1v1.3h-1zM1975 815.0h1v1.3h-1zM1983 815.0h1v1.3h-1zM1989 815.0h1v1.3h-1zM1997 815.0h1v1.3h-1zM1980 819.0h1v1.3h-1zM1987 819.0h1v1.3h-1zM1981 829.0h1v1.3h-1zM1987 831.0h1v1.3h-1zM1986 835.0h1v1.3h-1zM1989 835.0h1v1.3h-1zM2000 835.0h1v1.3h-1zM2007 835.0h1v1.3h-1zM2018 835.0h1v1.3h-1zM1989 841.0h1v1.3h-1zM1993 843.0h1v1.3h-1zM1980 845.0h1v1.3h-1zM1974 853.0h1v1.3h-1zM1983 853.0h1v1.3h-1zM1994 853.0h1v1.3h-1zM1975 859.0h1v1.3h-1zM1984 859.0h1v1.3h-1zM1991 859.0h1v1.3h-1zM1994 859.0h1v1.3h-1zM2002 859.0h1v1.3h-1zM2010 859.0h1v1.3h-1zM2018 859.0h1v1.3h-1zM1965 869.0h1v1.3h-1zM1982 869.0h1v1.3h-1zM1990 869.0h1v1.3h-1zM2008 869.0h1v1.3h-1zM1989 873.0h1v1.3h-1zM1994 873.0h1v1.3h-1zM1999 873.0h1v1.3h-1zM2005 873.0h1v1.3h-1zM1993 881.0h1v1.3h-1zM2001 881.0h1v1.3h-1zM2009 881.0h1v1.3h-1zM1992 883.0h1v1.3h-1zM2001 883.0h1v1.3h-1zM2010 883.0h1v1.3h-1zM2018 883.0h1v1.3h-1zM2026 883.0h1v1.3h-1zM2034 883.0h1v1.3h-1zM2043 883.0h1v1.3h-1zM2060 883.0h1v1.3h-1zM2068 883.0h1v1.3h-1zM1996 889.0h1v1.3h-1zM2001 889.0h1v1.3h-1zM2009 889.0h1v1.3h-1zM2014 889.0h1v1.3h-1zM2019 889.0h1v1.3h-1zM2027 889.0h1v1.3h-1zM1980 893.0h1v1.3h-1zM1986 895.0h1v1.3h-1zM1992 895.0h1v1.3h-1zM1969 901.0h1v1.3h-1zM1974 901.0h1v1.3h-1zM1979 901.0h1v1.3h-1zM1984 901.0h1v1.3h-1zM2002 901.0h1v1.3h-1zM2007 901.0h1v1.3h-1zM1991 905.0h1v1.3h-1zM1999 905.0h1v1.3h-1zM1981 913.0h1v1.3h-1zM1992 917.0h1v1.3h-1zM2010 917.0h1v1.3h-1zM2018 917.0h1v1.3h-1zM2026 917.0h1v1.3h-1zM2029 917.0h1v1.3h-1zM1978 923.0h1v1.3h-1zM1981 923.0h1v1.3h-1zM1984 923.0h1v1.3h-1zM1991 923.0h1v1.3h-1zM1999 923.0h1v1.3h-1zM2007 923.0h1v1.3h-1zM2012 923.0h1v1.3h-1zM1977 925.0h1v1.3h-1zM1977 927.0h1v1.3h-1zM1977 931.0h1v1.3h-1zM1983 931.0h1v1.3h-1zM1988 931.0h1v1.3h-1zM1997 931.0h1v1.3h-1zM2005 931.0h1v1.3h-1zM1975 933.0h1v1.3h-1zM1989 937.0h1v1.3h-1zM1994 937.0h1v1.3h-1zM1982 939.0h1v1.3h-1zM1975 943.0h1v1.3h-1zM1983 943.0h1v1.3h-1zM2000 943.0h1v1.3h-1zM2005 943.0h1v1.3h-1zM2010 943.0h1v1.3h-1zM2019 943.0h1v1.3h-1zM1999 945.0h1v1.3h-1zM2007 945.0h1v1.3h-1zM1996 947.0h1v1.3h-1zM2004 947.0h1v1.3h-1zM2009 947.0h1v1.3h-1zM2026 947.0h1v1.3h-1zM2034 947.0h1v1.3h-1zM2045 947.0h1v1.3h-1zM2063 947.0h1v1.3h-1zM2072 947.0h1v1.3h-1zM1980 949.0h1v1.3h-1zM1985 951.0h1v1.3h-1z"/><path fill="#008080" fill-opacity="0.75" d="M1958 164.9h3v1.3h-3zM1962 164.9h7v1.3h-7zM1970 164.9h10v1.3h-10zM1958 166.9h7v1.3h-7zM1966 166.9h4v1.3h-4zM1971 166.9h5v1.3h-5zM1977 166.9h7v1.3h-7zM1958 168.9h7v1.3h-7zM1966 168.9h4v1.3h-4zM1971 168.9h7v1.3h-7zM1979 168.9h2v1.3h-2zM1960 180.9h5v1.3h-5zM1966 180.9h6v1.3h-6zM1960 184.9h5v1.3h-5zM1966 184.9h4v1.3h-4zM1960 186.9h7v1.3h-7zM1968 186.9h7v1.3h-7zM1976 186.9h4v1.3h-4zM1960 188.9h5v1.3h-5zM1966 188.9h13v1.3h-13zM1980 188.9h4v1.3h-4zM1960 190.9h5v1.3h-5zM1966 190.9h4v1.3h-4zM1971 190.9h2v1.3h-2zM1960 192.9h5v1.3h-5zM1966 192.9h3v1.3h-3zM1970 192.9h11v1.3h-11zM1960 194.9h5v1.3h-5zM1966 194.9h7v1.3h-7zM1974 194.9h5v1.3h-5zM1964 198.9h5v1.3h-5zM1970 198.9h9v1.3h-9zM1980 198.9h3v1.3h-3zM1964 200.9h5v1.3h-5zM1970 200.9h3v1.3h-3zM1974 200.9h3v1.3h-3zM1960 214.9h7v1.3h-7zM1968 214.9h7v1.3h-7zM1976 214.9h4v1.3h-4zM1960 216.9h5v1.3h-5zM1966 216.9h13v1.3h-13zM1980 216.9h4v1.3h-4zM1960 218.9h5v1.3h-5zM1966 218.9h4v1.3h-4zM1960 220.9h6v1.3h-6zM1967 220.9h5v1.3h-5zM1964 224.9h5v1.3h-5zM1970 224.9h6v1.3h-6zM1964 226.9h5v1.3h-5zM1970 226.9h4v1.3h-4zM1975 226.9h2v1.3h-2zM1964 228.9h5v1.3h-5zM1970 228.9h3v1.3h-3zM1974 228.9h11v1.3h-11zM1964 230.9h5v1.3h-5zM1970 230.9h7v1.3h-7zM1978 230.9h5v1.3h-5zM1968 234.9h9v1.3h-9zM1968 236.9h5v1.3h-5zM1964 242.9h5v1.3h-5zM1970 242.9h3v1.3h-3zM1964 244.9h4v1.3h-4zM1966 246.9h2v1.3h-2zM1969 246.9h4v1.3h-4zM1974 246.9h1v1.3h-1zM1966 248.9h5v1.3h-5zM1972 248.9h6v1.3h-6zM1979 248.9h4v1.3h-4zM1984 248.9h2v1.3h-2zM1987 248.9h3v1.3h-3zM1991 248.9h1v1.3h-1zM1966 250.9h7v1.3h-7zM1974 250.9h4v1.3h-4zM1979 250.9h3v1.3h-3zM1956 257.0h5v1.3h-5zM1958 259.0h4v1.3h-4zM1963 259.0h7v1.3h-7zM1971 259.0h5v1.3h-5zM1977 259.0h2v1.3h-2zM1958 261.0h7v1.3h-7zM1966 261.0h3v1.3h-3zM1960 263.0h4v1.3h-4zM1960 265.0h7v1.3h-7zM1968 265.0h3v1.3h-3zM1960 267.0h7v1.3h-7zM1968 267.0h2v1.3h-2zM1960 269.0h4v1.3h-4zM1965 269.0h1v1.3h-1zM1960 271.0h7v1.3h-7zM1968 271.0h1v1.3h-1zM1960 273.0h5v1.3h-5zM1966 273.0h3v1.3h-3zM1960 275.0h6v1.3h-6zM1967 275.0h4v1.3h-4zM1960 277.0h4v1.3h-4zM1965 277.0h9v1.3h-9zM1975 277.0h5v1.3h-5zM1981 277.0h4v1.3h-4zM1958 279.0h5v1.3h-5zM1964 279.0h1v1.3h-1zM1960 281.0h6v1.3h-6zM1967 281.0h4v1.3h-4zM1960 283.0h7v1.3h-7zM1968 283.0h3v1.3h-3zM1964 289.0h5v1.3h-5zM1970 289.0h7v1.3h-7zM1964 291.0h7v1.3h-7zM1972 291.0h5v1.3h-5zM1964 297.0h6v1.3h-6zM1971 297.0h2v1.3h-2zM1964 299.0h7v1.3h-7zM1972 299.0h6v1.3h-6zM1964 301.0h7v1.3h-7zM1972 301.0h4v1.3h-4zM1968 307.0h4v1.3h-4zM1973 307.0h4v1.3h-4zM1978 307.0h4v1.3h-4zM1968 309.0h5v1.3h-5zM1974 309.0h7v1.3h-7zM1982 309.0h2v1.3h-2zM1968 311.0h7v1.3h-7zM1976 311.0h5v1.3h-5zM1982 311.0h4v1.3h-4zM1987 311.0h5v1.3h-5zM1968 317.0h6v1.3h-6zM1975 317.0h6v1.3h-6zM1982 317.0h4v1.3h-4zM1968 325.0h6v1.3h-6zM1975 325.0h2v1.3h-2zM1968 327.0h6v1.3h-6zM1975 327.0h2v1.3h-2zM1968 333.0h7v1.3h-7zM1976 333.0h7v1.3h-7zM1984 333.0h7v1.3h-7zM1956 341.0h5v1.3h-5zM1958 343.0h5v1.3h-5zM1964 343.0h2v1.3h-2zM1967 343.0h7v1.3h-7zM1975 343.0h4v1.3h-4zM1958 345.0h3v1.3h-3zM1962 345.0h4v1.3h-4zM1967 345.0h3v1.3h-3zM1960 347.0h4v1.3h-4zM1960 349.0h4v1.3h-4zM1965 349.0h5v1.3h-5zM1971 349.0h5v1.3h-5zM1960 351.0h3v1.3h-3zM1964 351.0h2v1.3h-2zM1967 351.0h6v1.3h-6zM1960 353.0h9v1.3h-9zM1960 355.0h2v1.3h-2zM1963 355.0h3v1.3h-3zM1960 357.0h5v1.3h-5zM1966 357.0h3v1.3h-3zM1960 359.0h7v1.3h-7zM1968 359.0h1v1.3h-1zM1960 361.0h5v1.3h-5zM1966 361.0h5v1.3h-5zM1960 363.0h9v1.3h-9zM1970 363.0h5v1.3h-5zM1976 363.0h5v1.3h-5zM1982 363.0h4v1.3h-4zM1958 365.0h5v1.3h-5zM1964 365.0h1v1.3h-1zM1960 367.0h7v1.3h-7zM1968 367.0h3v1.3h-3zM1960 369.0h3v1.3h-3zM1964 369.0h5v1.3h-5zM1970 369.0h1v1.3h-1zM1964 375.0h4v1.3h-4zM1969 375.0h6v1.3h-6zM1976 375.0h2v1.3h-2zM1964 377.0h4v1.3h-4zM1969 377.0h8v1.3h-8zM1964 383.0h4v1.3h-4zM1969 383.0h4v1.3h-4zM1964 385.0h6v1.3h-6zM1971 385.0h6v1.3h-6zM1964 387.0h7v1.3h-7zM1972 387.0h4v1.3h-4zM1968 393.0h6v1.3h-6zM1975 393.0h2v1.3h-2zM1978 393.0h2v1.3h-2zM1981 393.0h2v1.3h-2zM1968 395.0h7v1.3h-7zM1976 395.0h7v1.3h-7zM1968 397.0h7v1.3h-7zM1976 397.0h7v1.3h-7zM1984 397.0h6v1.3h-6zM1991 397.0h1v1.3h-1zM1968 405.0h3v1.3h-3zM1972 405.0h5v1.3h-5zM1968 407.0h7v1.3h-7zM1976 407.0h1v1.3h-1zM1968 413.0h9v1.3h-9zM1978 413.0h4v1.3h-4zM1983 413.0h7v1.3h-7zM1956 419.0h5v1.3h-5zM1958 421.0h4v1.3h-4zM1963 421.0h6v1.3h-6zM1970 421.0h4v1.3h-4zM1975 421.0h4v1.3h-4zM1958 423.0h4v1.3h-4zM1963 423.0h3v1.3h-3zM1967 423.0h2v1.3h-2zM1960 425.0h4v1.3h-4zM1965 425.0h2v1.3h-2zM1968 425.0h3v1.3h-3zM1960 427.0h7v1.3h-7zM1958 429.0h4v1.3h-4zM1963 429.0h2v1.3h-2zM1960 431.0h4v1.3h-4zM1965 431.0h6v1.3h-6zM1962 437.0h3v1.3h-3zM1966 437.0h2v1.3h-2zM1969 437.0h4v1.3h-4zM1974 437.0h1v1.3h-1zM1962 439.0h5v1.3h-5zM1968 439.0h6v1.3h-6zM1962 441.0h4v1.3h-4zM1967 441.0h5v1.3h-5zM1962 447.0h7v1.3h-7zM1970 447.0h4v1.3h-4zM1962 449.0h4v1.3h-4zM1967 449.0h4v1.3h-4zM1972 449.0h7v1.3h-7zM1980 449.0h7v1.3h-7zM1956 455.0h4v1.3h-4zM1958 457.0h5v1.3h-5zM1964 457.0h9v1.3h-9zM1974 457.0h5v1.3h-5zM1958 459.0h7v1.3h-7zM1966 459.0h4v1.3h-4zM1960 461.0h3v1.3h-3zM1964 461.0h4v1.3h-4zM1960 463.0h9v1.3h-9zM1960 465.0h4v1.3h-4zM1965 465.0h1v1.3h-1zM1960 467.0h7v1.3h-7zM1968 467.0h1v1.3h-1zM1960 469.0h7v1.3h-7zM1968 469.0h1v1.3h-1zM1960 471.0h6v1.3h-6zM1967 471.0h4v1.3h-4zM1958 473.0h4v1.3h-4zM1963 473.0h2v1.3h-2zM1960 475.0h7v1.3h-7zM1968 475.0h4v1.3h-4zM1960 477.0h7v1.3h-7zM1968 477.0h3v1.3h-3zM1972 477.0h1v1.3h-1zM1960 479.0h7v1.3h-7zM1968 479.0h5v1.3h-5zM1964 483.0h5v1.3h-5zM1970 483.0h3v1.3h-3zM1964 489.0h3v1.3h-3zM1968 489.0h3v1.3h-3zM1972 489.0h6v1.3h-6zM1979 489.0h3v1.3h-3zM1964 491.0h5v1.3h-5zM1970 491.0h2v1.3h-2zM1973 491.0h2v1.3h-2zM1976 491.0h3v1.3h-3zM1964 493.0h5v1.3h-5zM1970 493.0h5v1.3h-5zM1976 493.0h3v1.3h-3zM1964 495.0h5v1.3h-5zM1970 495.0h4v1.3h-4zM1975 495.0h1v1.3h-1zM1968 499.0h7v1.3h-7zM1968 501.0h7v1.3h-7zM1976 501.0h2v1.3h-2zM1968 507.0h7v1.3h-7zM1968 509.0h6v1.3h-6zM1968 515.0h5v1.3h-5zM1974 515.0h2v1.3h-2zM1968 517.0h2v1.3h-2zM1971 517.0h5v1.3h-5zM1956 523.0h2v1.3h-2zM1959 523.0h2v1.3h-2zM1958 525.0h9v1.3h-9zM1968 525.0h5v1.3h-5zM1974 525.0h4v1.3h-4zM1958 527.0h6v1.3h-6zM1965 527.0h5v1.3h-5zM1960 529.0h7v1.3h-7zM1960 531.0h3v1.3h-3zM1964 531.0h2v1.3h-2zM1967 531.0h3v1.3h-3zM1960 533.0h9v1.3h-9zM1970 533.0h5v1.3h-5zM1960 535.0h5v1.3h-5zM1960 537.0h5v1.3h-5zM1966 537.0h3v1.3h-3zM1960 539.0h7v1.3h-7zM1968 539.0h1v1.3h-1zM1960 541.0h3v1.3h-3zM1964 541.0h6v1.3h-6zM1958 543.0h4v1.3h-4zM1963 543.0h2v1.3h-2zM1960 545.0h5v1.3h-5zM1966 545.0h4v1.3h-4zM1971 545.0h1v1.3h-1zM1960 547.0h6v1.3h-6zM1967 547.0h6v1.3h-6zM1960 549.0h3v1.3h-3zM1964 549.0h7v1.3h-7zM1972 549.0h1v1.3h-1zM1964 553.0h5v1.3h-5zM1970 553.0h3v1.3h-3zM1964 559.0h2v1.3h-2zM1967 559.0h5v1.3h-5zM1973 559.0h3v1.3h-3zM1977 559.0h2v1.3h-2zM1964 561.0h7v1.3h-7zM1972 561.0h3v1.3h-3zM1976 561.0h4v1.3h-4zM1964 563.0h4v1.3h-4zM1969 563.0h6v1.3h-6zM1976 563.0h1v1.3h-1zM1968 567.0h7v1.3h-7zM1968 569.0h7v1.3h-7zM1976 569.0h2v1.3h-2zM1968 575.0h7v1.3h-7zM1968 577.0h6v1.3h-6zM1968 583.0h2v1.3h-2zM1971 583.0h4v1.3h-4zM1968 585.0h4v1.3h-4zM1973 585.0h4v1.3h-4zM1956 591.0h5v1.3h-5zM1958 593.0h7v1.3h-7zM1966 593.0h6v1.3h-6zM1973 593.0h5v1.3h-5zM1958 595.0h7v1.3h-7zM1966 595.0h4v1.3h-4zM1960 597.0h4v1.3h-4zM1965 597.0h4v1.3h-4zM1960 599.0h6v1.3h-6zM1967 599.0h5v1.3h-5zM1973 599.0h4v1.3h-4zM1978 599.0h4v1.3h-4zM1958 601.0h7v1.3h-7zM1960 603.0h5v1.3h-5zM1966 603.0h5v1.3h-5zM1962 609.0h5v1.3h-5zM1968 609.0h4v1.3h-4zM1962 611.0h5v1.3h-5zM1968 611.0h6v1.3h-6zM1962 617.0h3v1.3h-3zM1966 617.0h4v1.3h-4zM1971 617.0h2v1.3h-2zM1974 617.0h7v1.3h-7zM1982 617.0h6v1.3h-6zM1962 619.0h9v1.3h-9zM1972 619.0h6v1.3h-6zM1979 619.0h5v1.3h-5zM1964 623.0h7v1.3h-7zM1972 623.0h6v1.3h-6zM1964 625.0h7v1.3h-7zM1972 625.0h5v1.3h-5zM1978 625.0h4v1.3h-4zM1956 631.0h5v1.3h-5zM1958 633.0h5v1.3h-5zM1964 633.0h3v1.3h-3zM1968 633.0h7v1.3h-7zM1958 635.0h7v1.3h-7zM1966 635.0h4v1.3h-4zM1960 637.0h3v1.3h-3zM1964 637.0h4v1.3h-4zM1960 639.0h4v1.3h-4zM1965 639.0h4v1.3h-4zM1970 639.0h3v1.3h-3zM1974 639.0h3v1.3h-3zM1958 641.0h4v1.3h-4zM1963 641.0h2v1.3h-2zM1960 643.0h7v1.3h-7zM1968 643.0h4v1.3h-4zM1960 645.0h7v1.3h-7zM1968 645.0h5v1.3h-5zM1974 645.0h4v1.3h-4zM1960 647.0h2v1.3h-2zM1963 647.0h4v1.3h-4zM1968 647.0h4v1.3h-4zM1973 647.0h1v1.3h-1zM1964 651.0h9v1.3h-9zM1964 653.0h6v1.3h-6zM1966 655.0h5v1.3h-5zM1972 655.0h5v1.3h-5zM1978 655.0h2v1.3h-2zM1966 657.0h5v1.3h-5zM1972 657.0h7v1.3h-7zM1980 657.0h1v1.3h-1zM1966 659.0h5v1.3h-5zM1972 659.0h5v1.3h-5zM1966 661.0h6v1.3h-6zM1960 665.0h4v1.3h-4zM1965 665.0h6v1.3h-6zM1964 669.0h7v1.3h-7zM1972 669.0h5v1.3h-5zM1978 669.0h2v1.3h-2zM1964 675.0h2v1.3h-2zM1967 675.0h4v1.3h-4zM1972 675.0h1v1.3h-1zM1964 677.0h7v1.3h-7zM1966 679.0h3v1.3h-3zM1970 679.0h4v1.3h-4zM1975 679.0h5v1.3h-5zM1956 685.0h4v1.3h-4zM1958 687.0h7v1.3h-7zM1966 687.0h7v1.3h-7zM1974 687.0h2v1.3h-2zM1958 689.0h4v1.3h-4zM1963 689.0h7v1.3h-7zM1960 691.0h7v1.3h-7zM1960 693.0h2v1.3h-2zM1963 693.0h5v1.3h-5zM1958 695.0h7v1.3h-7zM1960 697.0h2v1.3h-2zM1963 697.0h9v1.3h-9zM1960 699.0h7v1.3h-7zM1968 699.0h7v1.3h-7zM1976 699.0h2v1.3h-2zM1960 701.0h3v1.3h-3zM1964 701.0h2v1.3h-2zM1967 701.0h7v1.3h-7zM1964 705.0h5v1.3h-5zM1970 705.0h2v1.3h-2zM1964 707.0h3v1.3h-3zM1968 707.0h3v1.3h-3zM1966 709.0h6v1.3h-6zM1973 709.0h4v1.3h-4zM1978 709.0h2v1.3h-2zM1966 711.0h5v1.3h-5zM1972 711.0h2v1.3h-2zM1975 711.0h6v1.3h-6zM1966 713.0h5v1.3h-5zM1972 713.0h1v1.3h-1zM1966 715.0h3v1.3h-3zM1970 715.0h3v1.3h-3zM1960 719.0h5v1.3h-5zM1966 719.0h5v1.3h-5zM1964 723.0h7v1.3h-7zM1972 723.0h2v1.3h-2zM1975 723.0h1v1.3h-1zM1964 727.0h6v1.3h-6zM1971 727.0h2v1.3h-2zM1964 729.0h6v1.3h-6zM1966 731.0h2v1.3h-2zM1969 731.0h7v1.3h-7zM1956 737.0h5v1.3h-5zM1958 739.0h5v1.3h-5zM1964 739.0h5v1.3h-5zM1970 739.0h4v1.3h-4zM1975 739.0h4v1.3h-4zM1958 741.0h5v1.3h-5zM1964 741.0h4v1.3h-4zM1969 741.0h1v1.3h-1zM1960 743.0h4v1.3h-4zM1965 743.0h3v1.3h-3zM1960 745.0h2v1.3h-2zM1963 745.0h4v1.3h-4zM1968 745.0h3v1.3h-3zM1972 745.0h5v1.3h-5zM1960 747.0h5v1.3h-5zM1966 747.0h3v1.3h-3zM1958 749.0h5v1.3h-5zM1964 749.0h1v1.3h-1zM1960 751.0h3v1.3h-3zM1964 751.0h5v1.3h-5zM1970 751.0h1v1.3h-1zM1964 757.0h5v1.3h-5zM1970 757.0h4v1.3h-4zM1975 757.0h7v1.3h-7zM1964 759.0h4v1.3h-4zM1969 759.0h7v1.3h-7zM1977 759.0h3v1.3h-3zM1968 765.0h4v1.3h-4zM1973 765.0h5v1.3h-5zM1979 765.0h3v1.3h-3zM1968 767.0h5v1.3h-5zM1974 767.0h2v1.3h-2zM1968 773.0h9v1.3h-9zM1968 775.0h3v1.3h-3zM1972 775.0h2v1.3h-2zM1970 777.0h6v1.3h-6zM1977 777.0h4v1.3h-4zM1964 781.0h7v1.3h-7zM1972 781.0h4v1.3h-4zM1964 787.0h6v1.3h-6zM1971 787.0h5v1.3h-5zM1977 787.0h5v1.3h-5zM1983 787.0h7v1.3h-7zM1964 793.0h2v1.3h-2zM1967 793.0h4v1.3h-4zM1972 793.0h1v1.3h-1zM1964 795.0h5v1.3h-5zM1970 795.0h1v1.3h-1zM1966 797.0h9v1.3h-9zM1976 797.0h6v1.3h-6zM1983 797.0h4v1.3h-4zM1966 799.0h4v1.3h-4zM1971 799.0h1v1.3h-1zM1966 801.0h5v1.3h-5zM1972 801.0h1v1.3h-1zM1966 803.0h5v1.3h-5zM1972 803.0h1v1.3h-1zM1964 809.0h7v1.3h-7zM1972 809.0h5v1.3h-5zM1978 809.0h9v1.3h-9zM1988 809.0h2v1.3h-2zM1964 811.0h2v1.3h-2zM1967 811.0h6v1.3h-6zM1974 811.0h4v1.3h-4zM1956 817.0h2v1.3h-2zM1959 817.0h2v1.3h-2zM1958 819.0h6v1.3h-6zM1965 819.0h7v1.3h-7zM1973 819.0h3v1.3h-3zM1958 821.0h4v1.3h-4zM1963 821.0h6v1.3h-6zM1960 823.0h6v1.3h-6zM1967 823.0h1v1.3h-1zM1960 825.0h2v1.3h-2zM1963 825.0h5v1.3h-5zM1969 825.0h5v1.3h-5zM1958 827.0h7v1.3h-7zM1960 829.0h3v1.3h-3zM1964 829.0h8v1.3h-8zM1960 831.0h7v1.3h-7zM1968 831.0h7v1.3h-7zM1976 831.0h2v1.3h-2zM1960 833.0h7v1.3h-7zM1968 833.0h5v1.3h-5zM1964 837.0h4v1.3h-4zM1969 837.0h4v1.3h-4zM1964 839.0h6v1.3h-6zM1966 841.0h5v1.3h-5zM1972 841.0h4v1.3h-4zM1977 841.0h3v1.3h-3zM1966 843.0h7v1.3h-7zM1974 843.0h7v1.3h-7zM1966 845.0h3v1.3h-3zM1970 845.0h4v1.3h-4zM1966 847.0h5v1.3h-5zM1972 847.0h1v1.3h-1zM1960 851.0h7v1.3h-7zM1968 851.0h4v1.3h-4zM1964 855.0h5v1.3h-5zM1970 855.0h2v1.3h-2zM1973 855.0h6v1.3h-6zM1964 861.0h2v1.3h-2zM1967 861.0h5v1.3h-5zM1964 863.0h5v1.3h-5zM1970 863.0h1v1.3h-1zM1966 865.0h5v1.3h-5zM1972 865.0h1v1.3h-1zM1956 871.0h3v1.3h-3zM1960 871.0h1v1.3h-1zM1958 873.0h4v1.3h-4zM1963 873.0h6v1.3h-6zM1970 873.0h7v1.3h-7zM1978 873.0h4v1.3h-4zM1958 875.0h4v1.3h-4zM1963 875.0h7v1.3h-7zM1960 877.0h6v1.3h-6zM1967 877.0h1v1.3h-1zM1958 879.0h7v1.3h-7zM1960 881.0h4v1.3h-4zM1965 881.0h3v1.3h-3zM1969 881.0h7v1.3h-7zM1977 881.0h4v1.3h-4zM1982 881.0h3v1.3h-3zM1960 883.0h7v1.3h-7zM1968 883.0h3v1.3h-3zM1972 883.0h7v1.3h-7zM1980 883.0h6v1.3h-6zM1960 885.0h2v1.3h-2zM1963 885.0h5v1.3h-5zM1960 887.0h4v1.3h-4zM1965 887.0h6v1.3h-6zM1972 887.0h2v1.3h-2zM1962 889.0h4v1.3h-4zM1967 889.0h6v1.3h-6zM1974 889.0h6v1.3h-6zM1981 889.0h5v1.3h-5zM1987 889.0h1v1.3h-1zM1962 891.0h6v1.3h-6zM1969 891.0h1v1.3h-1zM1962 893.0h5v1.3h-5zM1968 893.0h4v1.3h-4zM1962 895.0h5v1.3h-5zM1968 895.0h7v1.3h-7zM1976 895.0h2v1.3h-2zM1962 897.0h6v1.3h-6zM1969 897.0h7v1.3h-7zM1977 897.0h2v1.3h-2zM1956 903.0h4v1.3h-4zM1958 905.0h6v1.3h-6zM1965 905.0h5v1.3h-5zM1971 905.0h4v1.3h-4zM1976 905.0h3v1.3h-3zM1958 907.0h7v1.3h-7zM1966 907.0h4v1.3h-4zM1960 909.0h6v1.3h-6zM1967 909.0h1v1.3h-1zM1960 911.0h5v1.3h-5zM1966 911.0h4v1.3h-4zM1962 913.0h7v1.3h-7zM1970 913.0h2v1.3h-2zM1958 915.0h4v1.3h-4zM1963 915.0h2v1.3h-2zM1960 917.0h2v1.3h-2zM1963 917.0h5v1.3h-5zM1969 917.0h2v1.3h-2zM1972 917.0h5v1.3h-5zM1978 917.0h7v1.3h-7zM1960 919.0h3v1.3h-3zM1964 919.0h6v1.3h-6zM1971 919.0h1v1.3h-1zM1960 921.0h6v1.3h-6zM1967 921.0h5v1.3h-5zM1964 925.0h2v1.3h-2zM1967 925.0h6v1.3h-6zM1964 927.0h7v1.3h-7zM1964 933.0h4v1.3h-4zM1969 933.0h2v1.3h-2zM1964 935.0h5v1.3h-5zM1970 935.0h1v1.3h-1zM1966 937.0h4v1.3h-4zM1971 937.0h4v1.3h-4zM1976 937.0h5v1.3h-5zM1966 939.0h3v1.3h-3zM1970 939.0h6v1.3h-6zM1964 945.0h3v1.3h-3zM1968 945.0h9v1.3h-9zM1978 945.0h5v1.3h-5zM1984 945.0h2v1.3h-2zM1987 945.0h2v1.3h-2zM1964 947.0h5v1.3h-5zM1970 947.0h6v1.3h-6zM1977 947.0h7v1.3h-7zM1985 947.0h5v1.3h-5zM1964 949.0h2v1.3h-2zM1967 949.0h4v1.3h-4zM1964 951.0h3v1.3h-3zM1968 951.0h5v1.3h-5zM1974 951.0h3v1.3h-3z"/><path fill="#098658" fill-opacity="0.68" d="M1983 168.9h3v1.3h-3zM1983 192.9h1v1.3h-1zM1987 228.9h1v1.3h-1z"/><path fill="#008000" fill-opacity="0.55" d="M1970 321.0h3v1.3h-3zM1975 321.0h3v1.3h-3zM1979 321.0h3v1.3h-3zM1984 321.0h2v1.3h-2zM1987 321.0h3v1.3h-3zM1992 321.0h3v1.3h-3zM1996 321.0h2v1.3h-2zM1970 401.0h3v1.3h-3zM1974 401.0h3v1.3h-3zM1979 401.0h3v1.3h-3zM1984 401.0h2v1.3h-2zM1987 401.0h3v1.3h-3zM1992 401.0h3v1.3h-3zM1996 401.0h2v1.3h-2z"/></svg>
</body></html>
